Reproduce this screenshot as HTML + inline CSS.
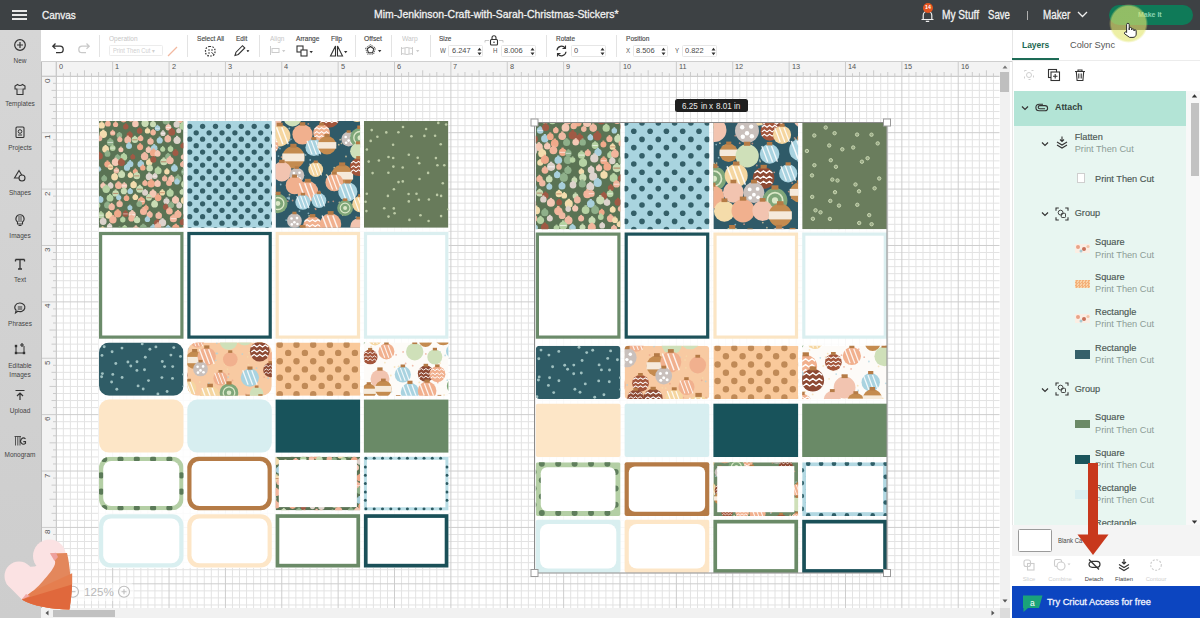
<!DOCTYPE html>
<html><head><meta charset="utf-8">
<style>
*{margin:0;padding:0;box-sizing:border-box}
html,body{width:1200px;height:618px;overflow:hidden;background:#fff;font-family:"Liberation Sans",sans-serif}
.a{position:absolute}
.t{white-space:nowrap;line-height:1}
svg{overflow:visible}
</style></head><body>
<svg class="a" style="left:0;top:0" width="1200" height="618" viewBox="0 0 1200 618"><path d="M63.35 76.3V608.2M70.39 76.3V608.2M77.44 76.3V608.2M84.48 76.3V608.2M91.53 76.3V608.2M98.58 76.3V608.2M105.62 76.3V608.2M119.72 76.3V608.2M126.76 76.3V608.2M133.81 76.3V608.2M140.85 76.3V608.2M147.90 76.3V608.2M154.95 76.3V608.2M161.99 76.3V608.2M176.09 76.3V608.2M183.13 76.3V608.2M190.18 76.3V608.2M197.22 76.3V608.2M204.27 76.3V608.2M211.32 76.3V608.2M218.36 76.3V608.2M232.46 76.3V608.2M239.50 76.3V608.2M246.55 76.3V608.2M253.59 76.3V608.2M260.64 76.3V608.2M267.69 76.3V608.2M274.73 76.3V608.2M288.83 76.3V608.2M295.87 76.3V608.2M302.92 76.3V608.2M309.96 76.3V608.2M317.01 76.3V608.2M324.06 76.3V608.2M331.10 76.3V608.2M345.20 76.3V608.2M352.24 76.3V608.2M359.29 76.3V608.2M366.33 76.3V608.2M373.38 76.3V608.2M380.43 76.3V608.2M387.47 76.3V608.2M401.57 76.3V608.2M408.61 76.3V608.2M415.66 76.3V608.2M422.70 76.3V608.2M429.75 76.3V608.2M436.80 76.3V608.2M443.84 76.3V608.2M457.94 76.3V608.2M464.98 76.3V608.2M472.03 76.3V608.2M479.07 76.3V608.2M486.12 76.3V608.2M493.17 76.3V608.2M500.21 76.3V608.2M514.31 76.3V608.2M521.35 76.3V608.2M528.40 76.3V608.2M535.44 76.3V608.2M542.49 76.3V608.2M549.54 76.3V608.2M556.58 76.3V608.2M570.68 76.3V608.2M577.72 76.3V608.2M584.77 76.3V608.2M591.81 76.3V608.2M598.86 76.3V608.2M605.91 76.3V608.2M612.95 76.3V608.2M627.05 76.3V608.2M634.09 76.3V608.2M641.14 76.3V608.2M648.18 76.3V608.2M655.23 76.3V608.2M662.28 76.3V608.2M669.32 76.3V608.2M683.42 76.3V608.2M690.46 76.3V608.2M697.51 76.3V608.2M704.55 76.3V608.2M711.60 76.3V608.2M718.65 76.3V608.2M725.69 76.3V608.2M739.79 76.3V608.2M746.83 76.3V608.2M753.88 76.3V608.2M760.92 76.3V608.2M767.97 76.3V608.2M775.02 76.3V608.2M782.06 76.3V608.2M796.16 76.3V608.2M803.20 76.3V608.2M810.25 76.3V608.2M817.29 76.3V608.2M824.34 76.3V608.2M831.39 76.3V608.2M838.43 76.3V608.2M852.53 76.3V608.2M859.57 76.3V608.2M866.62 76.3V608.2M873.66 76.3V608.2M880.71 76.3V608.2M887.76 76.3V608.2M894.80 76.3V608.2M908.90 76.3V608.2M915.94 76.3V608.2M922.99 76.3V608.2M930.03 76.3V608.2M937.08 76.3V608.2M944.13 76.3V608.2M951.17 76.3V608.2M965.27 76.3V608.2M972.31 76.3V608.2M979.36 76.3V608.2M986.40 76.3V608.2M993.45 76.3V608.2M56.3 83.35H999.5M56.3 90.40H999.5M56.3 97.45H999.5M56.3 104.50H999.5M56.3 111.54H999.5M56.3 118.59H999.5M56.3 125.64H999.5M56.3 139.74H999.5M56.3 146.79H999.5M56.3 153.84H999.5M56.3 160.88H999.5M56.3 167.93H999.5M56.3 174.98H999.5M56.3 182.03H999.5M56.3 196.13H999.5M56.3 203.18H999.5M56.3 210.23H999.5M56.3 217.27H999.5M56.3 224.32H999.5M56.3 231.37H999.5M56.3 238.42H999.5M56.3 252.52H999.5M56.3 259.57H999.5M56.3 266.62H999.5M56.3 273.67H999.5M56.3 280.71H999.5M56.3 287.76H999.5M56.3 294.81H999.5M56.3 308.91H999.5M56.3 315.96H999.5M56.3 323.01H999.5M56.3 330.06H999.5M56.3 337.10H999.5M56.3 344.15H999.5M56.3 351.20H999.5M56.3 365.30H999.5M56.3 372.35H999.5M56.3 379.40H999.5M56.3 386.44H999.5M56.3 393.49H999.5M56.3 400.54H999.5M56.3 407.59H999.5M56.3 421.69H999.5M56.3 428.74H999.5M56.3 435.79H999.5M56.3 442.84H999.5M56.3 449.88H999.5M56.3 456.93H999.5M56.3 463.98H999.5M56.3 478.08H999.5M56.3 485.13H999.5M56.3 492.18H999.5M56.3 499.23H999.5M56.3 506.27H999.5M56.3 513.32H999.5M56.3 520.37H999.5M56.3 534.47H999.5M56.3 541.52H999.5M56.3 548.57H999.5M56.3 555.62H999.5M56.3 562.66H999.5M56.3 569.71H999.5M56.3 576.76H999.5M56.3 590.86H999.5M56.3 597.91H999.5M56.3 604.96H999.5" stroke="#e3e3e3" stroke-width="1" fill="none"/><path d="M56.30 76.3V608.2M112.67 76.3V608.2M169.04 76.3V608.2M225.41 76.3V608.2M281.78 76.3V608.2M338.15 76.3V608.2M394.52 76.3V608.2M450.89 76.3V608.2M507.26 76.3V608.2M563.63 76.3V608.2M620.00 76.3V608.2M676.37 76.3V608.2M732.74 76.3V608.2M789.11 76.3V608.2M845.48 76.3V608.2M901.85 76.3V608.2M958.22 76.3V608.2M56.3 76.30H999.5M56.3 132.69H999.5M56.3 189.08H999.5M56.3 245.47H999.5M56.3 301.86H999.5M56.3 358.25H999.5M56.3 414.64H999.5M56.3 471.03H999.5M56.3 527.42H999.5M56.3 583.81H999.5" stroke="#cdcdcd" stroke-width="1" fill="none"/><rect x="98.5" y="120.5" width="350" height="447.5" fill="#fff" fill-opacity=".85"/><rect x="535.3" y="122.5" width="352" height="451" fill="#fff" fill-opacity=".85"/><clipPath id="c1"><rect x="99.0" y="121" width="84.5" height="106.8" rx="0"/></clipPath><g clip-path="url(#c1)"><rect x="99.0" y="121" width="84.5" height="106.8" fill="#5a7354"/><circle cx="96.2" cy="118.8" r="3.7" fill="#efb9a3"/><rect x="95.1" y="114.2" width="2.2" height="1.5" fill="#efb9a3"/><circle cx="106.7" cy="116.9" r="3.5" fill="#efb9a3"/><rect x="105.6" y="112.5" width="2.1" height="1.4" fill="#efb9a3"/><circle cx="114.8" cy="116.4" r="2.9" fill="#f4c8b5"/><rect x="113.9" y="112.9" width="1.7" height="1.1" fill="#f4c8b5"/><circle cx="123.6" cy="119.2" r="3.2" fill="#f2b59c"/><rect x="122.7" y="115.1" width="1.9" height="1.3" fill="#f2b59c"/><circle cx="130.9" cy="119.1" r="2.7" fill="#f2b59c"/><rect x="130.1" y="115.7" width="1.6" height="1.1" fill="#f2b59c"/><circle cx="136.3" cy="116.1" r="3.6" fill="#c9dcb4"/><rect x="135.2" y="111.6" width="2.2" height="1.4" fill="#c9dcb4"/><path d="M133.4 116.1h5.8" stroke="#a9573c" stroke-opacity=".8" fill="none" stroke-width="0.79"/><circle cx="146.7" cy="118.2" r="3.6" fill="#a05a45"/><rect x="145.6" y="113.7" width="2.1" height="1.4" fill="#a05a45"/><circle cx="154.2" cy="116.0" r="2.6" fill="#f0a98a"/><rect x="153.5" y="112.8" width="1.5" height="1.0" fill="#f0a98a"/><circle cx="166.2" cy="121.0" r="3.6" fill="#8fb08a"/><rect x="165.1" y="116.5" width="2.1" height="1.4" fill="#8fb08a"/><circle cx="173.4" cy="118.5" r="2.5" fill="#c9dcb4"/><rect x="172.6" y="115.4" width="1.5" height="1.0" fill="#c9dcb4"/><circle cx="180.0" cy="120.2" r="3.0" fill="#f2b59c"/><rect x="179.1" y="116.5" width="1.8" height="1.2" fill="#f2b59c"/><circle cx="186.4" cy="117.0" r="3.6" fill="#efb9a3"/><rect x="185.3" y="112.5" width="2.2" height="1.5" fill="#efb9a3"/><circle cx="101.7" cy="125.4" r="3.2" fill="#f3dcae"/><rect x="100.8" y="121.4" width="1.9" height="1.3" fill="#f3dcae"/><circle cx="107.9" cy="123.7" r="2.9" fill="#f2b59c"/><rect x="107.1" y="120.1" width="1.7" height="1.2" fill="#f2b59c"/><circle cx="115.6" cy="124.5" r="2.6" fill="#f2b59c"/><rect x="114.8" y="121.3" width="1.6" height="1.0" fill="#f2b59c"/><circle cx="125.8" cy="126.7" r="2.7" fill="#a05a45"/><rect x="125.0" y="123.3" width="1.6" height="1.1" fill="#a05a45"/><circle cx="135.4" cy="123.9" r="3.3" fill="#f4c8b5"/><rect x="134.5" y="119.8" width="2.0" height="1.3" fill="#f4c8b5"/><circle cx="145.1" cy="123.3" r="3.6" fill="#c9dcb4"/><rect x="144.1" y="118.8" width="2.2" height="1.4" fill="#c9dcb4"/><circle cx="153.0" cy="124.3" r="3.0" fill="#c9dcb4"/><rect x="152.1" y="120.6" width="1.8" height="1.2" fill="#c9dcb4"/><circle cx="157.5" cy="128.3" r="2.7" fill="#a8cfdb"/><rect x="156.6" y="124.8" width="1.6" height="1.1" fill="#a8cfdb"/><path d="M155.3 128.3h4.4" stroke="#fff" stroke-opacity=".8" fill="none" stroke-width="0.60"/><circle cx="168.4" cy="127.5" r="3.0" fill="#f4c8b5"/><rect x="167.5" y="123.7" width="1.8" height="1.2" fill="#f4c8b5"/><path d="M166.1 127.5h4.7" stroke="#fff" stroke-opacity=".8" fill="none" stroke-width="0.65"/><circle cx="176.7" cy="124.5" r="3.2" fill="#ddd3cc"/><rect x="175.7" y="120.4" width="1.9" height="1.3" fill="#ddd3cc"/><circle cx="182.8" cy="126.2" r="3.5" fill="#b5d2a3"/><rect x="181.7" y="121.8" width="2.1" height="1.4" fill="#b5d2a3"/><circle cx="94.9" cy="131.4" r="3.6" fill="#c9dcb4"/><rect x="93.8" y="126.8" width="2.2" height="1.5" fill="#c9dcb4"/><circle cx="103.3" cy="134.3" r="3.7" fill="#f3dcae"/><rect x="102.2" y="129.7" width="2.2" height="1.5" fill="#f3dcae"/><circle cx="112.7" cy="133.0" r="2.6" fill="#f2b59c"/><rect x="111.9" y="129.8" width="1.5" height="1.0" fill="#f2b59c"/><path d="M110.7 133.0h4.1" stroke="#fff" stroke-opacity=".8" fill="none" stroke-width="0.56"/><circle cx="119.4" cy="135.4" r="2.8" fill="#8fb08a"/><rect x="118.5" y="132.0" width="1.7" height="1.1" fill="#8fb08a"/><circle cx="129.7" cy="135.1" r="3.1" fill="#a05a45"/><rect x="128.8" y="131.3" width="1.9" height="1.2" fill="#a05a45"/><circle cx="139.6" cy="130.9" r="2.8" fill="#a05a45"/><rect x="138.8" y="127.5" width="1.7" height="1.1" fill="#a05a45"/><circle cx="147.5" cy="130.9" r="2.7" fill="#f3dcae"/><rect x="146.6" y="127.5" width="1.6" height="1.1" fill="#f3dcae"/><circle cx="153.1" cy="132.6" r="2.8" fill="#f2b59c"/><rect x="152.3" y="129.2" width="1.7" height="1.1" fill="#f2b59c"/><circle cx="163.0" cy="133.5" r="2.6" fill="#ddd3cc"/><rect x="162.2" y="130.2" width="1.6" height="1.1" fill="#ddd3cc"/><path d="M160.9 133.5h4.2" stroke="#fff" stroke-opacity=".8" fill="none" stroke-width="0.58"/><circle cx="171.8" cy="132.2" r="3.4" fill="#a05a45"/><rect x="170.8" y="128.0" width="2.1" height="1.4" fill="#a05a45"/><circle cx="178.7" cy="130.8" r="2.5" fill="#ddd3cc"/><rect x="177.9" y="127.7" width="1.5" height="1.0" fill="#ddd3cc"/><circle cx="191.2" cy="130.7" r="3.3" fill="#efb9a3"/><rect x="190.2" y="126.6" width="2.0" height="1.3" fill="#efb9a3"/><path d="M188.6 130.7h5.3" stroke="#fff" stroke-opacity=".8" fill="none" stroke-width="0.72"/><circle cx="99.7" cy="138.6" r="2.6" fill="#efb9a3"/><rect x="99.0" y="135.4" width="1.5" height="1.0" fill="#efb9a3"/><circle cx="110.3" cy="142.4" r="3.4" fill="#8fb08a"/><rect x="109.2" y="138.1" width="2.1" height="1.4" fill="#8fb08a"/><path d="M107.5 142.4h5.5" stroke="#fff" stroke-opacity=".8" fill="none" stroke-width="0.75"/><circle cx="119.8" cy="139.6" r="2.6" fill="#efb9a3"/><rect x="119.0" y="136.4" width="1.5" height="1.0" fill="#efb9a3"/><circle cx="127.8" cy="140.0" r="3.5" fill="#efb9a3"/><rect x="126.7" y="135.6" width="2.1" height="1.4" fill="#efb9a3"/><circle cx="134.9" cy="139.8" r="3.2" fill="#c9dcb4"/><rect x="133.9" y="135.8" width="1.9" height="1.3" fill="#c9dcb4"/><path d="M132.3 139.8h5.2" stroke="#a9573c" stroke-opacity=".8" fill="none" stroke-width="0.71"/><circle cx="140.6" cy="138.5" r="2.8" fill="#f2b59c"/><rect x="139.8" y="135.0" width="1.7" height="1.1" fill="#f2b59c"/><circle cx="150.5" cy="141.6" r="3.2" fill="#efb9a3"/><rect x="149.6" y="137.6" width="1.9" height="1.3" fill="#efb9a3"/><circle cx="159.7" cy="140.5" r="3.1" fill="#a8cfdb"/><rect x="158.7" y="136.6" width="1.9" height="1.3" fill="#a8cfdb"/><circle cx="167.8" cy="139.0" r="3.4" fill="#efb9a3"/><rect x="166.8" y="134.8" width="2.0" height="1.3" fill="#efb9a3"/><circle cx="177.1" cy="140.3" r="3.6" fill="#ddd3cc"/><rect x="176.0" y="135.8" width="2.2" height="1.5" fill="#ddd3cc"/><circle cx="185.6" cy="138.9" r="2.7" fill="#ddd3cc"/><rect x="184.8" y="135.6" width="1.6" height="1.1" fill="#ddd3cc"/><circle cx="96.2" cy="149.7" r="2.9" fill="#f0a98a"/><rect x="95.3" y="146.1" width="1.7" height="1.2" fill="#f0a98a"/><circle cx="105.6" cy="149.2" r="3.4" fill="#f3dcae"/><rect x="104.5" y="144.9" width="2.1" height="1.4" fill="#f3dcae"/><circle cx="112.7" cy="148.1" r="2.9" fill="#b5d2a3"/><rect x="111.8" y="144.5" width="1.7" height="1.1" fill="#b5d2a3"/><path d="M110.4 148.1h4.6" stroke="#fff" stroke-opacity=".8" fill="none" stroke-width="0.63"/><circle cx="120.9" cy="149.7" r="2.5" fill="#f4c8b5"/><rect x="120.2" y="146.6" width="1.5" height="1.0" fill="#f4c8b5"/><circle cx="129.0" cy="146.0" r="3.0" fill="#a8cfdb"/><rect x="128.0" y="142.2" width="1.8" height="1.2" fill="#a8cfdb"/><circle cx="140.1" cy="147.1" r="3.1" fill="#f0a98a"/><rect x="139.2" y="143.2" width="1.9" height="1.3" fill="#f0a98a"/><circle cx="148.6" cy="150.1" r="3.0" fill="#f4c8b5"/><rect x="147.7" y="146.3" width="1.8" height="1.2" fill="#f4c8b5"/><circle cx="154.2" cy="148.3" r="3.3" fill="#a8cfdb"/><rect x="153.2" y="144.1" width="2.0" height="1.3" fill="#a8cfdb"/><circle cx="162.7" cy="149.2" r="2.5" fill="#b5d2a3"/><rect x="162.0" y="146.1" width="1.5" height="1.0" fill="#b5d2a3"/><circle cx="170.5" cy="149.1" r="2.8" fill="#b5d2a3"/><rect x="169.7" y="145.6" width="1.7" height="1.1" fill="#b5d2a3"/><circle cx="182.9" cy="145.8" r="2.6" fill="#a05a45"/><rect x="182.1" y="142.5" width="1.6" height="1.0" fill="#a05a45"/><circle cx="190.4" cy="150.0" r="3.4" fill="#f3dcae"/><rect x="189.4" y="145.8" width="2.0" height="1.3" fill="#f3dcae"/><circle cx="99.5" cy="156.1" r="3.4" fill="#a05a45"/><rect x="98.4" y="151.8" width="2.1" height="1.4" fill="#a05a45"/><circle cx="107.5" cy="153.9" r="2.9" fill="#8fb08a"/><rect x="106.6" y="150.2" width="1.7" height="1.2" fill="#8fb08a"/><circle cx="117.5" cy="157.5" r="2.7" fill="#8fb08a"/><rect x="116.7" y="154.2" width="1.6" height="1.1" fill="#8fb08a"/><circle cx="123.8" cy="157.2" r="3.4" fill="#b5d2a3"/><rect x="122.8" y="152.9" width="2.0" height="1.4" fill="#b5d2a3"/><circle cx="132.8" cy="157.0" r="2.5" fill="#a05a45"/><rect x="132.0" y="153.9" width="1.5" height="1.0" fill="#a05a45"/><circle cx="144.6" cy="156.5" r="3.7" fill="#efb9a3"/><rect x="143.5" y="151.9" width="2.2" height="1.5" fill="#efb9a3"/><circle cx="153.5" cy="153.0" r="3.6" fill="#f0a98a"/><rect x="152.4" y="148.5" width="2.2" height="1.4" fill="#f0a98a"/><circle cx="157.6" cy="153.7" r="3.0" fill="#f4c8b5"/><rect x="156.7" y="150.0" width="1.8" height="1.2" fill="#f4c8b5"/><circle cx="168.1" cy="156.5" r="2.9" fill="#8fb08a"/><rect x="167.2" y="152.9" width="1.7" height="1.2" fill="#8fb08a"/><circle cx="175.5" cy="152.9" r="3.0" fill="#a05a45"/><rect x="174.6" y="149.1" width="1.8" height="1.2" fill="#a05a45"/><circle cx="183.5" cy="157.1" r="2.7" fill="#f4c8b5"/><rect x="182.7" y="153.7" width="1.6" height="1.1" fill="#f4c8b5"/><circle cx="94.1" cy="162.5" r="3.4" fill="#b5d2a3"/><rect x="93.1" y="158.3" width="2.0" height="1.3" fill="#b5d2a3"/><circle cx="107.4" cy="164.3" r="3.1" fill="#f0a98a"/><rect x="106.5" y="160.4" width="1.9" height="1.3" fill="#f0a98a"/><circle cx="115.5" cy="162.3" r="3.7" fill="#f4c8b5"/><rect x="114.4" y="157.7" width="2.2" height="1.5" fill="#f4c8b5"/><circle cx="121.4" cy="162.6" r="3.5" fill="#a05a45"/><rect x="120.3" y="158.2" width="2.1" height="1.4" fill="#a05a45"/><circle cx="130.2" cy="164.1" r="3.2" fill="#a8cfdb"/><rect x="129.2" y="160.1" width="1.9" height="1.3" fill="#a8cfdb"/><circle cx="140.8" cy="164.2" r="3.3" fill="#a8cfdb"/><rect x="139.8" y="160.1" width="2.0" height="1.3" fill="#a8cfdb"/><circle cx="149.2" cy="162.5" r="3.2" fill="#f3dcae"/><rect x="148.3" y="158.4" width="1.9" height="1.3" fill="#f3dcae"/><circle cx="153.3" cy="159.8" r="3.0" fill="#a05a45"/><rect x="152.5" y="156.1" width="1.8" height="1.2" fill="#a05a45"/><circle cx="163.8" cy="161.8" r="3.5" fill="#c9dcb4"/><rect x="162.7" y="157.4" width="2.1" height="1.4" fill="#c9dcb4"/><path d="M161.0 161.8h5.6" stroke="#a9573c" stroke-opacity=".8" fill="none" stroke-width="0.77"/><circle cx="170.0" cy="160.6" r="3.7" fill="#efb9a3"/><rect x="168.9" y="156.1" width="2.2" height="1.5" fill="#efb9a3"/><circle cx="182.8" cy="164.5" r="2.8" fill="#efb9a3"/><rect x="181.9" y="160.9" width="1.7" height="1.1" fill="#efb9a3"/><circle cx="188.1" cy="164.3" r="3.7" fill="#efb9a3"/><rect x="187.0" y="159.7" width="2.2" height="1.5" fill="#efb9a3"/><circle cx="98.7" cy="169.2" r="2.5" fill="#a8cfdb"/><rect x="98.0" y="166.1" width="1.5" height="1.0" fill="#a8cfdb"/><path d="M96.7 169.2h4.0" stroke="#fff" stroke-opacity=".8" fill="none" stroke-width="0.55"/><circle cx="110.5" cy="167.2" r="2.7" fill="#f3dcae"/><rect x="109.7" y="163.8" width="1.6" height="1.1" fill="#f3dcae"/><path d="M108.3 167.2h4.3" stroke="#a9573c" stroke-opacity=".8" fill="none" stroke-width="0.60"/><circle cx="116.4" cy="170.8" r="2.8" fill="#efb9a3"/><rect x="115.6" y="167.3" width="1.7" height="1.1" fill="#efb9a3"/><path d="M114.2 170.8h4.4" stroke="#fff" stroke-opacity=".8" fill="none" stroke-width="0.61"/><circle cx="127.0" cy="167.7" r="3.1" fill="#a8cfdb"/><rect x="126.1" y="163.8" width="1.9" height="1.3" fill="#a8cfdb"/><circle cx="135.3" cy="171.5" r="2.5" fill="#f0a98a"/><rect x="134.5" y="168.4" width="1.5" height="1.0" fill="#f0a98a"/><circle cx="142.8" cy="167.9" r="2.7" fill="#f0a98a"/><rect x="142.0" y="164.5" width="1.6" height="1.1" fill="#f0a98a"/><circle cx="149.7" cy="168.2" r="3.2" fill="#c9dcb4"/><rect x="148.7" y="164.2" width="1.9" height="1.3" fill="#c9dcb4"/><circle cx="158.1" cy="170.8" r="3.5" fill="#b5d2a3"/><rect x="157.1" y="166.5" width="2.1" height="1.4" fill="#b5d2a3"/><circle cx="166.9" cy="171.8" r="2.7" fill="#f3dcae"/><rect x="166.1" y="168.3" width="1.6" height="1.1" fill="#f3dcae"/><circle cx="174.4" cy="168.3" r="3.4" fill="#a8cfdb"/><rect x="173.4" y="164.1" width="2.0" height="1.4" fill="#a8cfdb"/><circle cx="184.4" cy="171.9" r="3.2" fill="#8fb08a"/><rect x="183.4" y="167.9" width="1.9" height="1.3" fill="#8fb08a"/><path d="M181.8 171.9h5.1" stroke="#fff" stroke-opacity=".8" fill="none" stroke-width="0.70"/><circle cx="96.0" cy="177.9" r="2.5" fill="#f3dcae"/><rect x="95.2" y="174.8" width="1.5" height="1.0" fill="#f3dcae"/><circle cx="104.2" cy="178.6" r="2.9" fill="#8fb08a"/><rect x="103.3" y="174.9" width="1.8" height="1.2" fill="#8fb08a"/><circle cx="114.6" cy="177.0" r="3.4" fill="#f3dcae"/><rect x="113.6" y="172.8" width="2.0" height="1.3" fill="#f3dcae"/><circle cx="121.6" cy="174.5" r="3.5" fill="#c9dcb4"/><rect x="120.6" y="170.2" width="2.1" height="1.4" fill="#c9dcb4"/><circle cx="130.4" cy="175.2" r="2.7" fill="#f3dcae"/><rect x="129.6" y="171.8" width="1.6" height="1.1" fill="#f3dcae"/><circle cx="136.8" cy="175.9" r="3.3" fill="#c9dcb4"/><rect x="135.8" y="171.7" width="2.0" height="1.3" fill="#c9dcb4"/><path d="M134.1 175.9h5.3" stroke="#a9573c" stroke-opacity=".8" fill="none" stroke-width="0.73"/><circle cx="149.2" cy="176.8" r="3.5" fill="#ddd3cc"/><rect x="148.1" y="172.4" width="2.1" height="1.4" fill="#ddd3cc"/><circle cx="154.9" cy="176.2" r="2.7" fill="#ddd3cc"/><rect x="154.1" y="172.8" width="1.6" height="1.1" fill="#ddd3cc"/><path d="M152.7 176.2h4.4" stroke="#fff" stroke-opacity=".8" fill="none" stroke-width="0.60"/><circle cx="164.7" cy="178.7" r="2.7" fill="#efb9a3"/><rect x="163.9" y="175.3" width="1.6" height="1.1" fill="#efb9a3"/><circle cx="171.4" cy="179.1" r="3.2" fill="#f4c8b5"/><rect x="170.5" y="175.0" width="1.9" height="1.3" fill="#f4c8b5"/><circle cx="178.0" cy="178.9" r="3.5" fill="#8fb08a"/><rect x="177.0" y="174.5" width="2.1" height="1.4" fill="#8fb08a"/><circle cx="190.9" cy="179.2" r="3.2" fill="#f3dcae"/><rect x="190.0" y="175.2" width="1.9" height="1.3" fill="#f3dcae"/><circle cx="103.1" cy="185.8" r="2.8" fill="#f4c8b5"/><rect x="102.3" y="182.3" width="1.7" height="1.1" fill="#f4c8b5"/><circle cx="110.5" cy="185.8" r="3.0" fill="#ddd3cc"/><rect x="109.6" y="182.1" width="1.8" height="1.2" fill="#ddd3cc"/><circle cx="118.5" cy="185.6" r="3.5" fill="#f2b59c"/><rect x="117.4" y="181.3" width="2.1" height="1.4" fill="#f2b59c"/><circle cx="124.3" cy="185.8" r="2.9" fill="#f4c8b5"/><rect x="123.4" y="182.2" width="1.7" height="1.1" fill="#f4c8b5"/><path d="M122.0 185.8h4.6" stroke="#fff" stroke-opacity=".8" fill="none" stroke-width="0.63"/><circle cx="133.6" cy="185.0" r="3.3" fill="#f3dcae"/><rect x="132.6" y="180.9" width="2.0" height="1.3" fill="#f3dcae"/><circle cx="145.0" cy="183.2" r="2.7" fill="#f2b59c"/><rect x="144.2" y="179.8" width="1.6" height="1.1" fill="#f2b59c"/><circle cx="151.2" cy="183.7" r="3.8" fill="#f0a98a"/><rect x="150.1" y="179.0" width="2.3" height="1.5" fill="#f0a98a"/><circle cx="157.6" cy="183.7" r="3.2" fill="#f4c8b5"/><rect x="156.6" y="179.7" width="1.9" height="1.3" fill="#f4c8b5"/><circle cx="169.1" cy="183.0" r="3.0" fill="#f2b59c"/><rect x="168.2" y="179.3" width="1.8" height="1.2" fill="#f2b59c"/><circle cx="177.0" cy="181.8" r="2.8" fill="#a8cfdb"/><rect x="176.2" y="178.3" width="1.7" height="1.1" fill="#a8cfdb"/><circle cx="184.9" cy="184.3" r="3.7" fill="#c9dcb4"/><rect x="183.8" y="179.6" width="2.2" height="1.5" fill="#c9dcb4"/><circle cx="94.5" cy="191.3" r="3.3" fill="#a05a45"/><rect x="93.5" y="187.2" width="2.0" height="1.3" fill="#a05a45"/><circle cx="106.2" cy="189.3" r="3.7" fill="#b5d2a3"/><rect x="105.1" y="184.7" width="2.2" height="1.5" fill="#b5d2a3"/><circle cx="115.6" cy="193.4" r="3.2" fill="#c9dcb4"/><rect x="114.7" y="189.4" width="1.9" height="1.3" fill="#c9dcb4"/><path d="M113.1 193.4h5.1" stroke="#a9573c" stroke-opacity=".8" fill="none" stroke-width="0.70"/><circle cx="123.9" cy="191.2" r="3.1" fill="#c9dcb4"/><rect x="123.0" y="187.2" width="1.9" height="1.3" fill="#c9dcb4"/><circle cx="130.2" cy="191.5" r="2.8" fill="#a8cfdb"/><rect x="129.4" y="188.0" width="1.7" height="1.1" fill="#a8cfdb"/><circle cx="139.7" cy="189.2" r="3.5" fill="#c9dcb4"/><rect x="138.7" y="184.8" width="2.1" height="1.4" fill="#c9dcb4"/><path d="M137.0 189.2h5.6" stroke="#a9573c" stroke-opacity=".8" fill="none" stroke-width="0.76"/><circle cx="145.1" cy="192.8" r="3.0" fill="#ddd3cc"/><rect x="144.3" y="189.1" width="1.8" height="1.2" fill="#ddd3cc"/><circle cx="153.0" cy="194.0" r="3.7" fill="#f4c8b5"/><rect x="151.9" y="189.4" width="2.2" height="1.5" fill="#f4c8b5"/><circle cx="162.3" cy="192.7" r="2.8" fill="#f3dcae"/><rect x="161.5" y="189.2" width="1.7" height="1.1" fill="#f3dcae"/><path d="M160.1 192.7h4.5" stroke="#a9573c" stroke-opacity=".8" fill="none" stroke-width="0.61"/><circle cx="170.1" cy="193.1" r="3.6" fill="#b5d2a3"/><rect x="169.0" y="188.6" width="2.2" height="1.5" fill="#b5d2a3"/><circle cx="182.1" cy="192.1" r="2.6" fill="#c9dcb4"/><rect x="181.3" y="188.8" width="1.6" height="1.0" fill="#c9dcb4"/><circle cx="187.0" cy="193.4" r="2.9" fill="#b5d2a3"/><rect x="186.1" y="189.7" width="1.8" height="1.2" fill="#b5d2a3"/><path d="M184.6 193.4h4.7" stroke="#fff" stroke-opacity=".8" fill="none" stroke-width="0.64"/><circle cx="100.4" cy="199.7" r="3.1" fill="#a8cfdb"/><rect x="99.5" y="195.9" width="1.8" height="1.2" fill="#a8cfdb"/><circle cx="110.0" cy="198.2" r="3.4" fill="#b5d2a3"/><rect x="109.0" y="193.9" width="2.1" height="1.4" fill="#b5d2a3"/><circle cx="118.7" cy="197.5" r="2.6" fill="#a8cfdb"/><rect x="117.9" y="194.3" width="1.6" height="1.0" fill="#a8cfdb"/><circle cx="126.5" cy="198.2" r="2.8" fill="#f0a98a"/><rect x="125.7" y="194.6" width="1.7" height="1.1" fill="#f0a98a"/><circle cx="135.3" cy="197.3" r="2.8" fill="#f3dcae"/><rect x="134.4" y="193.8" width="1.7" height="1.1" fill="#f3dcae"/><circle cx="141.4" cy="201.3" r="3.7" fill="#f0a98a"/><rect x="140.3" y="196.7" width="2.2" height="1.5" fill="#f0a98a"/><path d="M138.5 201.3h5.9" stroke="#fff" stroke-opacity=".8" fill="none" stroke-width="0.80"/><circle cx="148.9" cy="197.7" r="3.0" fill="#c9dcb4"/><rect x="148.0" y="193.9" width="1.8" height="1.2" fill="#c9dcb4"/><path d="M146.5 197.7h4.8" stroke="#a9573c" stroke-opacity=".8" fill="none" stroke-width="0.66"/><circle cx="158.1" cy="197.8" r="3.4" fill="#f0a98a"/><rect x="157.0" y="193.4" width="2.1" height="1.4" fill="#f0a98a"/><circle cx="166.5" cy="201.3" r="3.1" fill="#ddd3cc"/><rect x="165.6" y="197.4" width="1.9" height="1.2" fill="#ddd3cc"/><circle cx="175.5" cy="200.1" r="3.6" fill="#f4c8b5"/><rect x="174.4" y="195.7" width="2.1" height="1.4" fill="#f4c8b5"/><circle cx="184.4" cy="200.5" r="3.6" fill="#f3dcae"/><rect x="183.3" y="196.0" width="2.1" height="1.4" fill="#f3dcae"/><circle cx="97.7" cy="205.6" r="2.7" fill="#b5d2a3"/><rect x="96.9" y="202.3" width="1.6" height="1.1" fill="#b5d2a3"/><circle cx="107.3" cy="205.3" r="3.2" fill="#8fb08a"/><rect x="106.4" y="201.3" width="1.9" height="1.3" fill="#8fb08a"/><circle cx="111.7" cy="207.0" r="3.2" fill="#efb9a3"/><rect x="110.7" y="202.9" width="1.9" height="1.3" fill="#efb9a3"/><circle cx="119.6" cy="204.1" r="3.2" fill="#efb9a3"/><rect x="118.6" y="200.1" width="1.9" height="1.3" fill="#efb9a3"/><circle cx="129.9" cy="207.8" r="2.5" fill="#a8cfdb"/><rect x="129.2" y="204.7" width="1.5" height="1.0" fill="#a8cfdb"/><circle cx="139.3" cy="204.1" r="2.9" fill="#8fb08a"/><rect x="138.4" y="200.5" width="1.7" height="1.1" fill="#8fb08a"/><circle cx="146.0" cy="208.1" r="2.7" fill="#f0a98a"/><rect x="145.2" y="204.7" width="1.6" height="1.1" fill="#f0a98a"/><circle cx="154.6" cy="204.2" r="3.4" fill="#c9dcb4"/><rect x="153.6" y="200.0" width="2.0" height="1.4" fill="#c9dcb4"/><circle cx="165.7" cy="207.1" r="2.8" fill="#a05a45"/><rect x="164.9" y="203.6" width="1.7" height="1.1" fill="#a05a45"/><circle cx="171.1" cy="205.3" r="3.0" fill="#8fb08a"/><rect x="170.2" y="201.5" width="1.8" height="1.2" fill="#8fb08a"/><circle cx="179.2" cy="205.5" r="2.9" fill="#ddd3cc"/><rect x="178.3" y="201.8" width="1.8" height="1.2" fill="#ddd3cc"/><circle cx="189.3" cy="207.7" r="3.4" fill="#ddd3cc"/><rect x="188.3" y="203.4" width="2.1" height="1.4" fill="#ddd3cc"/><circle cx="100.9" cy="215.2" r="3.2" fill="#b5d2a3"/><rect x="99.9" y="211.2" width="1.9" height="1.3" fill="#b5d2a3"/><path d="M98.3 215.2h5.1" stroke="#fff" stroke-opacity=".8" fill="none" stroke-width="0.70"/><circle cx="108.9" cy="215.3" r="3.5" fill="#f3dcae"/><rect x="107.8" y="210.9" width="2.1" height="1.4" fill="#f3dcae"/><circle cx="117.7" cy="213.8" r="3.7" fill="#f0a98a"/><rect x="116.6" y="209.2" width="2.2" height="1.5" fill="#f0a98a"/><circle cx="125.5" cy="213.9" r="2.9" fill="#a05a45"/><rect x="124.6" y="210.3" width="1.7" height="1.1" fill="#a05a45"/><path d="M123.2 213.9h4.6" stroke="#fff" stroke-opacity=".8" fill="none" stroke-width="0.63"/><circle cx="132.2" cy="214.7" r="3.6" fill="#f4c8b5"/><rect x="131.1" y="210.1" width="2.2" height="1.5" fill="#f4c8b5"/><path d="M129.3 214.7h5.8" stroke="#fff" stroke-opacity=".8" fill="none" stroke-width="0.80"/><circle cx="143.5" cy="211.5" r="3.5" fill="#f2b59c"/><rect x="142.4" y="207.0" width="2.1" height="1.4" fill="#f2b59c"/><circle cx="149.7" cy="214.8" r="3.1" fill="#efb9a3"/><rect x="148.7" y="210.9" width="1.9" height="1.3" fill="#efb9a3"/><circle cx="158.7" cy="215.8" r="3.3" fill="#efb9a3"/><rect x="157.7" y="211.7" width="2.0" height="1.3" fill="#efb9a3"/><circle cx="169.4" cy="211.3" r="3.3" fill="#f2b59c"/><rect x="168.4" y="207.2" width="2.0" height="1.3" fill="#f2b59c"/><circle cx="177.9" cy="214.3" r="3.6" fill="#f2b59c"/><rect x="176.9" y="209.9" width="2.1" height="1.4" fill="#f2b59c"/><circle cx="186.6" cy="215.8" r="3.3" fill="#a05a45"/><rect x="185.6" y="211.7" width="2.0" height="1.3" fill="#a05a45"/><circle cx="94.0" cy="218.8" r="3.7" fill="#b5d2a3"/><rect x="92.9" y="214.2" width="2.2" height="1.5" fill="#b5d2a3"/><circle cx="103.2" cy="221.5" r="3.4" fill="#ddd3cc"/><rect x="102.2" y="217.3" width="2.0" height="1.3" fill="#ddd3cc"/><circle cx="112.9" cy="219.7" r="3.7" fill="#f2b59c"/><rect x="111.8" y="215.1" width="2.2" height="1.5" fill="#f2b59c"/><circle cx="122.8" cy="219.8" r="2.7" fill="#b5d2a3"/><rect x="122.0" y="216.5" width="1.6" height="1.1" fill="#b5d2a3"/><circle cx="131.4" cy="218.4" r="3.1" fill="#f2b59c"/><rect x="130.4" y="214.5" width="1.9" height="1.2" fill="#f2b59c"/><circle cx="137.0" cy="220.1" r="3.2" fill="#c9dcb4"/><rect x="136.0" y="216.0" width="1.9" height="1.3" fill="#c9dcb4"/><circle cx="147.4" cy="219.4" r="2.7" fill="#a8cfdb"/><rect x="146.5" y="216.0" width="1.6" height="1.1" fill="#a8cfdb"/><circle cx="157.3" cy="223.0" r="3.3" fill="#a05a45"/><rect x="156.4" y="218.9" width="2.0" height="1.3" fill="#a05a45"/><circle cx="162.5" cy="222.7" r="3.7" fill="#ddd3cc"/><rect x="161.4" y="218.2" width="2.2" height="1.5" fill="#ddd3cc"/><circle cx="173.4" cy="218.7" r="3.6" fill="#f2b59c"/><rect x="172.4" y="214.3" width="2.2" height="1.4" fill="#f2b59c"/><path d="M170.6 218.7h5.7" stroke="#fff" stroke-opacity=".8" fill="none" stroke-width="0.79"/><circle cx="182.7" cy="222.3" r="3.0" fill="#a05a45"/><rect x="181.8" y="218.6" width="1.8" height="1.2" fill="#a05a45"/><circle cx="190.3" cy="222.2" r="2.5" fill="#f3dcae"/><rect x="189.5" y="219.1" width="1.5" height="1.0" fill="#f3dcae"/><circle cx="102.6" cy="230.1" r="3.0" fill="#f3dcae"/><rect x="101.7" y="226.3" width="1.8" height="1.2" fill="#f3dcae"/><circle cx="109.6" cy="226.4" r="2.7" fill="#ddd3cc"/><rect x="108.8" y="223.0" width="1.6" height="1.1" fill="#ddd3cc"/><path d="M107.5 226.4h4.3" stroke="#fff" stroke-opacity=".8" fill="none" stroke-width="0.59"/><circle cx="119.5" cy="229.7" r="2.6" fill="#8fb08a"/><rect x="118.7" y="226.4" width="1.6" height="1.1" fill="#8fb08a"/><circle cx="124.7" cy="228.3" r="2.7" fill="#b5d2a3"/><rect x="123.9" y="225.0" width="1.6" height="1.1" fill="#b5d2a3"/><path d="M122.6 228.3h4.2" stroke="#fff" stroke-opacity=".8" fill="none" stroke-width="0.58"/><circle cx="135.9" cy="229.8" r="3.5" fill="#f4c8b5"/><rect x="134.8" y="225.4" width="2.1" height="1.4" fill="#f4c8b5"/><circle cx="143.3" cy="228.2" r="3.6" fill="#8fb08a"/><rect x="142.2" y="223.7" width="2.2" height="1.4" fill="#8fb08a"/><circle cx="153.4" cy="228.5" r="3.6" fill="#a8cfdb"/><rect x="152.3" y="224.1" width="2.1" height="1.4" fill="#a8cfdb"/><path d="M150.5 228.5h5.7" stroke="#fff" stroke-opacity=".8" fill="none" stroke-width="0.79"/><circle cx="157.9" cy="226.6" r="3.4" fill="#efb9a3"/><rect x="156.9" y="222.4" width="2.0" height="1.3" fill="#efb9a3"/><circle cx="168.1" cy="228.2" r="2.7" fill="#a8cfdb"/><rect x="167.3" y="224.9" width="1.6" height="1.1" fill="#a8cfdb"/><circle cx="175.8" cy="228.4" r="3.8" fill="#f0a98a"/><rect x="174.7" y="223.7" width="2.3" height="1.5" fill="#f0a98a"/><circle cx="184.0" cy="229.0" r="2.6" fill="#f2b59c"/><rect x="183.2" y="225.8" width="1.6" height="1.0" fill="#f2b59c"/><circle cx="97.7" cy="236.8" r="2.6" fill="#efb9a3"/><rect x="96.9" y="233.6" width="1.6" height="1.0" fill="#efb9a3"/><path d="M95.6 236.8h4.2" stroke="#fff" stroke-opacity=".8" fill="none" stroke-width="0.58"/><circle cx="104.3" cy="236.5" r="2.8" fill="#c9dcb4"/><rect x="103.4" y="233.0" width="1.7" height="1.1" fill="#c9dcb4"/><path d="M102.0 236.5h4.4" stroke="#a9573c" stroke-opacity=".8" fill="none" stroke-width="0.61"/><circle cx="114.6" cy="237.2" r="3.6" fill="#8fb08a"/><rect x="113.6" y="232.7" width="2.1" height="1.4" fill="#8fb08a"/><circle cx="122.3" cy="234.4" r="2.9" fill="#a05a45"/><rect x="121.4" y="230.7" width="1.8" height="1.2" fill="#a05a45"/><circle cx="132.4" cy="236.7" r="3.2" fill="#f4c8b5"/><rect x="131.4" y="232.7" width="1.9" height="1.3" fill="#f4c8b5"/><circle cx="137.0" cy="236.6" r="2.9" fill="#a8cfdb"/><rect x="136.1" y="233.0" width="1.7" height="1.2" fill="#a8cfdb"/><circle cx="148.0" cy="234.6" r="3.5" fill="#f4c8b5"/><rect x="146.9" y="230.1" width="2.1" height="1.4" fill="#f4c8b5"/><path d="M145.2 234.6h5.7" stroke="#fff" stroke-opacity=".8" fill="none" stroke-width="0.78"/><circle cx="155.9" cy="233.6" r="3.3" fill="#b5d2a3"/><rect x="154.9" y="229.4" width="2.0" height="1.3" fill="#b5d2a3"/><circle cx="163.2" cy="237.1" r="3.2" fill="#f4c8b5"/><rect x="162.2" y="233.1" width="1.9" height="1.3" fill="#f4c8b5"/><path d="M160.6 237.1h5.2" stroke="#fff" stroke-opacity=".8" fill="none" stroke-width="0.71"/><circle cx="169.7" cy="237.9" r="3.0" fill="#f4c8b5"/><rect x="168.8" y="234.1" width="1.8" height="1.2" fill="#f4c8b5"/><circle cx="182.1" cy="237.6" r="2.6" fill="#f3dcae"/><rect x="181.3" y="234.3" width="1.6" height="1.1" fill="#f3dcae"/><circle cx="190.5" cy="234.8" r="2.9" fill="#f2b59c"/><rect x="189.6" y="231.2" width="1.7" height="1.2" fill="#f2b59c"/></g><clipPath id="c2"><rect x="187.3" y="121" width="84.5" height="106.8" rx="0"/></clipPath><g clip-path="url(#c2)"><rect x="187.3" y="121" width="84.5" height="106.8" fill="#a9d4df"/><circle cx="176.8" cy="126.3" r="2.65" fill="#345f68"/><circle cx="189.7" cy="126.3" r="2.65" fill="#345f68"/><circle cx="202.6" cy="126.3" r="2.65" fill="#345f68"/><circle cx="215.5" cy="126.3" r="2.65" fill="#345f68"/><circle cx="228.4" cy="126.3" r="2.65" fill="#345f68"/><circle cx="241.3" cy="126.3" r="2.65" fill="#345f68"/><circle cx="254.2" cy="126.3" r="2.65" fill="#345f68"/><circle cx="267.1" cy="126.3" r="2.65" fill="#345f68"/><circle cx="183.2" cy="132.8" r="2.65" fill="#345f68"/><circle cx="196.2" cy="132.8" r="2.65" fill="#345f68"/><circle cx="209.1" cy="132.8" r="2.65" fill="#345f68"/><circle cx="222.0" cy="132.8" r="2.65" fill="#345f68"/><circle cx="234.9" cy="132.8" r="2.65" fill="#345f68"/><circle cx="247.8" cy="132.8" r="2.65" fill="#345f68"/><circle cx="260.7" cy="132.8" r="2.65" fill="#345f68"/><circle cx="273.6" cy="132.8" r="2.65" fill="#345f68"/><circle cx="176.8" cy="139.2" r="2.65" fill="#345f68"/><circle cx="189.7" cy="139.2" r="2.65" fill="#345f68"/><circle cx="202.6" cy="139.2" r="2.65" fill="#345f68"/><circle cx="215.5" cy="139.2" r="2.65" fill="#345f68"/><circle cx="228.4" cy="139.2" r="2.65" fill="#345f68"/><circle cx="241.3" cy="139.2" r="2.65" fill="#345f68"/><circle cx="254.2" cy="139.2" r="2.65" fill="#345f68"/><circle cx="267.1" cy="139.2" r="2.65" fill="#345f68"/><circle cx="183.2" cy="145.7" r="2.65" fill="#345f68"/><circle cx="196.2" cy="145.7" r="2.65" fill="#345f68"/><circle cx="209.1" cy="145.7" r="2.65" fill="#345f68"/><circle cx="222.0" cy="145.7" r="2.65" fill="#345f68"/><circle cx="234.9" cy="145.7" r="2.65" fill="#345f68"/><circle cx="247.8" cy="145.7" r="2.65" fill="#345f68"/><circle cx="260.7" cy="145.7" r="2.65" fill="#345f68"/><circle cx="273.6" cy="145.7" r="2.65" fill="#345f68"/><circle cx="176.8" cy="152.1" r="2.65" fill="#345f68"/><circle cx="189.7" cy="152.1" r="2.65" fill="#345f68"/><circle cx="202.6" cy="152.1" r="2.65" fill="#345f68"/><circle cx="215.5" cy="152.1" r="2.65" fill="#345f68"/><circle cx="228.4" cy="152.1" r="2.65" fill="#345f68"/><circle cx="241.3" cy="152.1" r="2.65" fill="#345f68"/><circle cx="254.2" cy="152.1" r="2.65" fill="#345f68"/><circle cx="267.1" cy="152.1" r="2.65" fill="#345f68"/><circle cx="183.2" cy="158.6" r="2.65" fill="#345f68"/><circle cx="196.2" cy="158.6" r="2.65" fill="#345f68"/><circle cx="209.1" cy="158.6" r="2.65" fill="#345f68"/><circle cx="222.0" cy="158.6" r="2.65" fill="#345f68"/><circle cx="234.9" cy="158.6" r="2.65" fill="#345f68"/><circle cx="247.8" cy="158.6" r="2.65" fill="#345f68"/><circle cx="260.7" cy="158.6" r="2.65" fill="#345f68"/><circle cx="273.6" cy="158.6" r="2.65" fill="#345f68"/><circle cx="176.8" cy="165.1" r="2.65" fill="#345f68"/><circle cx="189.7" cy="165.1" r="2.65" fill="#345f68"/><circle cx="202.6" cy="165.1" r="2.65" fill="#345f68"/><circle cx="215.5" cy="165.1" r="2.65" fill="#345f68"/><circle cx="228.4" cy="165.1" r="2.65" fill="#345f68"/><circle cx="241.3" cy="165.1" r="2.65" fill="#345f68"/><circle cx="254.2" cy="165.1" r="2.65" fill="#345f68"/><circle cx="267.1" cy="165.1" r="2.65" fill="#345f68"/><circle cx="183.2" cy="171.5" r="2.65" fill="#345f68"/><circle cx="196.2" cy="171.5" r="2.65" fill="#345f68"/><circle cx="209.1" cy="171.5" r="2.65" fill="#345f68"/><circle cx="222.0" cy="171.5" r="2.65" fill="#345f68"/><circle cx="234.9" cy="171.5" r="2.65" fill="#345f68"/><circle cx="247.8" cy="171.5" r="2.65" fill="#345f68"/><circle cx="260.7" cy="171.5" r="2.65" fill="#345f68"/><circle cx="273.6" cy="171.5" r="2.65" fill="#345f68"/><circle cx="176.8" cy="178.0" r="2.65" fill="#345f68"/><circle cx="189.7" cy="178.0" r="2.65" fill="#345f68"/><circle cx="202.6" cy="178.0" r="2.65" fill="#345f68"/><circle cx="215.5" cy="178.0" r="2.65" fill="#345f68"/><circle cx="228.4" cy="178.0" r="2.65" fill="#345f68"/><circle cx="241.3" cy="178.0" r="2.65" fill="#345f68"/><circle cx="254.2" cy="178.0" r="2.65" fill="#345f68"/><circle cx="267.1" cy="178.0" r="2.65" fill="#345f68"/><circle cx="183.2" cy="184.4" r="2.65" fill="#345f68"/><circle cx="196.2" cy="184.4" r="2.65" fill="#345f68"/><circle cx="209.1" cy="184.4" r="2.65" fill="#345f68"/><circle cx="222.0" cy="184.4" r="2.65" fill="#345f68"/><circle cx="234.9" cy="184.4" r="2.65" fill="#345f68"/><circle cx="247.8" cy="184.4" r="2.65" fill="#345f68"/><circle cx="260.7" cy="184.4" r="2.65" fill="#345f68"/><circle cx="273.6" cy="184.4" r="2.65" fill="#345f68"/><circle cx="176.8" cy="190.9" r="2.65" fill="#345f68"/><circle cx="189.7" cy="190.9" r="2.65" fill="#345f68"/><circle cx="202.6" cy="190.9" r="2.65" fill="#345f68"/><circle cx="215.5" cy="190.9" r="2.65" fill="#345f68"/><circle cx="228.4" cy="190.9" r="2.65" fill="#345f68"/><circle cx="241.3" cy="190.9" r="2.65" fill="#345f68"/><circle cx="254.2" cy="190.9" r="2.65" fill="#345f68"/><circle cx="267.1" cy="190.9" r="2.65" fill="#345f68"/><circle cx="183.2" cy="197.4" r="2.65" fill="#345f68"/><circle cx="196.2" cy="197.4" r="2.65" fill="#345f68"/><circle cx="209.1" cy="197.4" r="2.65" fill="#345f68"/><circle cx="222.0" cy="197.4" r="2.65" fill="#345f68"/><circle cx="234.9" cy="197.4" r="2.65" fill="#345f68"/><circle cx="247.8" cy="197.4" r="2.65" fill="#345f68"/><circle cx="260.7" cy="197.4" r="2.65" fill="#345f68"/><circle cx="273.6" cy="197.4" r="2.65" fill="#345f68"/><circle cx="176.8" cy="203.8" r="2.65" fill="#345f68"/><circle cx="189.7" cy="203.8" r="2.65" fill="#345f68"/><circle cx="202.6" cy="203.8" r="2.65" fill="#345f68"/><circle cx="215.5" cy="203.8" r="2.65" fill="#345f68"/><circle cx="228.4" cy="203.8" r="2.65" fill="#345f68"/><circle cx="241.3" cy="203.8" r="2.65" fill="#345f68"/><circle cx="254.2" cy="203.8" r="2.65" fill="#345f68"/><circle cx="267.1" cy="203.8" r="2.65" fill="#345f68"/><circle cx="183.2" cy="210.3" r="2.65" fill="#345f68"/><circle cx="196.2" cy="210.3" r="2.65" fill="#345f68"/><circle cx="209.1" cy="210.3" r="2.65" fill="#345f68"/><circle cx="222.0" cy="210.3" r="2.65" fill="#345f68"/><circle cx="234.9" cy="210.3" r="2.65" fill="#345f68"/><circle cx="247.8" cy="210.3" r="2.65" fill="#345f68"/><circle cx="260.7" cy="210.3" r="2.65" fill="#345f68"/><circle cx="273.6" cy="210.3" r="2.65" fill="#345f68"/><circle cx="176.8" cy="216.7" r="2.65" fill="#345f68"/><circle cx="189.7" cy="216.7" r="2.65" fill="#345f68"/><circle cx="202.6" cy="216.7" r="2.65" fill="#345f68"/><circle cx="215.5" cy="216.7" r="2.65" fill="#345f68"/><circle cx="228.4" cy="216.7" r="2.65" fill="#345f68"/><circle cx="241.3" cy="216.7" r="2.65" fill="#345f68"/><circle cx="254.2" cy="216.7" r="2.65" fill="#345f68"/><circle cx="267.1" cy="216.7" r="2.65" fill="#345f68"/><circle cx="183.2" cy="223.2" r="2.65" fill="#345f68"/><circle cx="196.2" cy="223.2" r="2.65" fill="#345f68"/><circle cx="209.1" cy="223.2" r="2.65" fill="#345f68"/><circle cx="222.0" cy="223.2" r="2.65" fill="#345f68"/><circle cx="234.9" cy="223.2" r="2.65" fill="#345f68"/><circle cx="247.8" cy="223.2" r="2.65" fill="#345f68"/><circle cx="260.7" cy="223.2" r="2.65" fill="#345f68"/><circle cx="273.6" cy="223.2" r="2.65" fill="#345f68"/><circle cx="176.8" cy="229.7" r="2.65" fill="#345f68"/><circle cx="189.7" cy="229.7" r="2.65" fill="#345f68"/><circle cx="202.6" cy="229.7" r="2.65" fill="#345f68"/><circle cx="215.5" cy="229.7" r="2.65" fill="#345f68"/><circle cx="228.4" cy="229.7" r="2.65" fill="#345f68"/><circle cx="241.3" cy="229.7" r="2.65" fill="#345f68"/><circle cx="254.2" cy="229.7" r="2.65" fill="#345f68"/><circle cx="267.1" cy="229.7" r="2.65" fill="#345f68"/></g><clipPath id="c3"><rect x="275.6" y="121" width="84.5" height="106.8" rx="0"/></clipPath><g clip-path="url(#c3)"><rect x="275.6" y="121" width="84.5" height="106.8" fill="#2f5a68"/><circle cx="289.5" cy="194.7" r="0.9" fill="#f5dcaa" fill-opacity=".7"/><circle cx="299.4" cy="211.1" r="0.9" fill="#a9d3e0" fill-opacity=".7"/><circle cx="343.9" cy="175.7" r="0.9" fill="#f5dcaa" fill-opacity=".7"/><circle cx="320.2" cy="205.2" r="0.9" fill="#e9a38a" fill-opacity=".7"/><circle cx="307.0" cy="183.5" r="0.9" fill="#e9a38a" fill-opacity=".7"/><circle cx="287.8" cy="201.2" r="0.9" fill="#e9a38a" fill-opacity=".7"/><circle cx="334.2" cy="167.7" r="0.9" fill="#f5dcaa" fill-opacity=".7"/><circle cx="340.7" cy="164.4" r="0.9" fill="#a9d3e0" fill-opacity=".7"/><circle cx="278.5" cy="156.1" r="0.9" fill="#a9d3e0" fill-opacity=".7"/><circle cx="334.2" cy="190.3" r="0.9" fill="#a9d3e0" fill-opacity=".7"/><circle cx="277.6" cy="200.1" r="0.9" fill="#e9a38a" fill-opacity=".7"/><circle cx="286.2" cy="220.1" r="0.9" fill="#a9d3e0" fill-opacity=".7"/><circle cx="289.2" cy="198.8" r="0.9" fill="#a9d3e0" fill-opacity=".7"/><circle cx="316.6" cy="141.0" r="0.9" fill="#e9a38a" fill-opacity=".7"/><circle cx="315.3" cy="208.6" r="0.9" fill="#e9a38a" fill-opacity=".7"/><circle cx="341.5" cy="143.3" r="0.9" fill="#f5dcaa" fill-opacity=".7"/><circle cx="339.4" cy="202.5" r="0.9" fill="#f5dcaa" fill-opacity=".7"/><circle cx="359.2" cy="128.6" r="0.9" fill="#f5dcaa" fill-opacity=".7"/><circle cx="315.8" cy="209.3" r="0.9" fill="#e9a38a" fill-opacity=".7"/><circle cx="304.4" cy="136.6" r="0.9" fill="#f5dcaa" fill-opacity=".7"/><circle cx="310.2" cy="160.0" r="0.9" fill="#a9d3e0" fill-opacity=".7"/><circle cx="318.0" cy="155.0" r="0.9" fill="#a9d3e0" fill-opacity=".7"/><circle cx="308.3" cy="123.9" r="0.9" fill="#e9a38a" fill-opacity=".7"/><circle cx="289.0" cy="197.5" r="0.9" fill="#a9d3e0" fill-opacity=".7"/><circle cx="275.8" cy="128.5" r="0.9" fill="#f5dcaa" fill-opacity=".7"/><circle cx="338.8" cy="144.7" r="0.9" fill="#f5dcaa" fill-opacity=".7"/><circle cx="302.5" cy="225.7" r="0.9" fill="#e9a38a" fill-opacity=".7"/><circle cx="290.9" cy="139.2" r="0.9" fill="#a9d3e0" fill-opacity=".7"/><circle cx="346.0" cy="156.5" r="0.9" fill="#f5dcaa" fill-opacity=".7"/><circle cx="354.2" cy="147.2" r="0.9" fill="#e9a38a" fill-opacity=".7"/><circle cx="281.1" cy="207.9" r="0.9" fill="#a9d3e0" fill-opacity=".7"/><circle cx="307.3" cy="194.0" r="0.9" fill="#f5dcaa" fill-opacity=".7"/><circle cx="319.5" cy="191.3" r="0.9" fill="#e9a38a" fill-opacity=".7"/><circle cx="310.0" cy="226.6" r="0.9" fill="#f5dcaa" fill-opacity=".7"/><circle cx="325.5" cy="215.3" r="0.9" fill="#a9d3e0" fill-opacity=".7"/><circle cx="318.4" cy="192.2" r="0.9" fill="#e9a38a" fill-opacity=".7"/><circle cx="289.3" cy="128.4" r="0.9" fill="#a9d3e0" fill-opacity=".7"/><circle cx="341.0" cy="172.6" r="0.9" fill="#a9d3e0" fill-opacity=".7"/><circle cx="280.0" cy="148.6" r="0.9" fill="#a9d3e0" fill-opacity=".7"/><circle cx="278.5" cy="147.5" r="0.9" fill="#a9d3e0" fill-opacity=".7"/><circle cx="281.5" cy="157.1" r="0.9" fill="#e9a38a" fill-opacity=".7"/><circle cx="358.7" cy="200.7" r="0.9" fill="#a9d3e0" fill-opacity=".7"/><circle cx="279.8" cy="135.9" r="0.9" fill="#f5dcaa" fill-opacity=".7"/><circle cx="320.0" cy="198.8" r="0.9" fill="#e9a38a" fill-opacity=".7"/><circle cx="356.1" cy="217.1" r="0.9" fill="#a9d3e0" fill-opacity=".7"/><circle cx="342.8" cy="215.1" r="0.9" fill="#f5dcaa" fill-opacity=".7"/><circle cx="340.9" cy="172.7" r="0.9" fill="#a9d3e0" fill-opacity=".7"/><circle cx="301.6" cy="178.1" r="0.9" fill="#a9d3e0" fill-opacity=".7"/><circle cx="287.4" cy="198.0" r="0.9" fill="#a9d3e0" fill-opacity=".7"/><circle cx="333.5" cy="222.9" r="0.9" fill="#e9a38a" fill-opacity=".7"/><circle cx="297.9" cy="155.8" r="0.9" fill="#e9a38a" fill-opacity=".7"/><circle cx="347.6" cy="183.4" r="0.9" fill="#a9d3e0" fill-opacity=".7"/><circle cx="333.3" cy="201.3" r="0.9" fill="#e9a38a" fill-opacity=".7"/><circle cx="286.9" cy="131.1" r="0.9" fill="#e9a38a" fill-opacity=".7"/><circle cx="291.4" cy="189.5" r="0.9" fill="#e9a38a" fill-opacity=".7"/><circle cx="281.7" cy="133.7" r="0.9" fill="#a9d3e0" fill-opacity=".7"/><circle cx="286.3" cy="178.5" r="0.9" fill="#a9d3e0" fill-opacity=".7"/><circle cx="309.1" cy="215.8" r="0.9" fill="#f5dcaa" fill-opacity=".7"/><circle cx="289.6" cy="140.6" r="0.9" fill="#a9d3e0" fill-opacity=".7"/><circle cx="292.6" cy="200.5" r="0.9" fill="#e9a38a" fill-opacity=".7"/><circle cx="326.6" cy="174.9" r="0.9" fill="#f5dcaa" fill-opacity=".7"/><circle cx="341.0" cy="205.4" r="0.9" fill="#e9a38a" fill-opacity=".7"/><circle cx="308.4" cy="213.3" r="0.9" fill="#a9d3e0" fill-opacity=".7"/><circle cx="340.2" cy="139.7" r="0.9" fill="#f5dcaa" fill-opacity=".7"/><circle cx="295.3" cy="224.0" r="0.9" fill="#f5dcaa" fill-opacity=".7"/><circle cx="302.1" cy="125.5" r="0.9" fill="#a9d3e0" fill-opacity=".7"/><circle cx="288.8" cy="198.6" r="0.9" fill="#a9d3e0" fill-opacity=".7"/><circle cx="344.7" cy="206.8" r="0.9" fill="#a9d3e0" fill-opacity=".7"/><circle cx="355.7" cy="131.5" r="0.9" fill="#f5dcaa" fill-opacity=".7"/><circle cx="280.7" cy="184.5" r="0.9" fill="#a9d3e0" fill-opacity=".7"/><circle cx="357.3" cy="154.1" r="0.9" fill="#f5dcaa" fill-opacity=".7"/><circle cx="328.4" cy="201.9" r="0.9" fill="#e9a38a" fill-opacity=".7"/><circle cx="281.0" cy="208.0" r="0.9" fill="#e9a38a" fill-opacity=".7"/><circle cx="305.6" cy="155.0" r="0.9" fill="#a9d3e0" fill-opacity=".7"/><circle cx="284.7" cy="129.1" r="0.9" fill="#e9a38a" fill-opacity=".7"/><circle cx="270.9" cy="118.6" r="11.0" fill="#f2c4b0"/><rect x="267.8" y="105.1" width="6.2" height="3.9" fill="#b57b46"/><circle cx="292.6" cy="117.3" r="9.1" fill="#cfe0b9"/><rect x="290.0" y="106.2" width="5.1" height="3.2" fill="#b57b46"/><circle cx="316.0" cy="109.3" r="7.3" fill="#8e4a34"/><path d="M309.8 106.0l2.1 -1.5l2.1 1.5l2.1 -1.5l2.1 1.5l2.1 -1.5l2.1 1.5" stroke="#fff" fill="none" stroke-width="0.88"/><path d="M309.8 109.7l2.1 -1.5l2.1 1.5l2.1 -1.5l2.1 1.5l2.1 -1.5l2.1 1.5" stroke="#fff" fill="none" stroke-width="0.88"/><path d="M309.8 113.0l2.1 -1.5l2.1 1.5l2.1 -1.5l2.1 1.5l2.1 -1.5l2.1 1.5" stroke="#fff" fill="none" stroke-width="0.88"/><rect x="314.0" y="100.3" width="4.1" height="2.6" fill="#b57b46"/><circle cx="329.1" cy="117.3" r="10.4" fill="#a3553b"/><path d="M320.3 112.6l2.9 -2.1l2.9 2.1l2.9 -2.1l2.9 2.1l2.9 -2.1l2.9 2.1" stroke="#fff" fill="none" stroke-width="1.25"/><path d="M320.3 117.8l2.9 -2.1l2.9 2.1l2.9 -2.1l2.9 2.1l2.9 -2.1l2.9 2.1" stroke="#fff" fill="none" stroke-width="1.25"/><path d="M320.3 122.5l2.9 -2.1l2.9 2.1l2.9 -2.1l2.9 2.1l2.9 -2.1l2.9 2.1" stroke="#fff" fill="none" stroke-width="1.25"/><rect x="326.2" y="104.6" width="5.8" height="3.6" fill="#b57b46"/><circle cx="357.0" cy="113.4" r="8.5" fill="#f5d6a0"/><path d="M350.2 106.6l5.1 13.6" stroke="#fff" stroke-opacity=".85" stroke-width="1.19"/><path d="M354.5 106.6l5.1 13.6" stroke="#fff" stroke-opacity=".85" stroke-width="1.19"/><path d="M358.8 106.6l5.1 13.6" stroke="#fff" stroke-opacity=".85" stroke-width="1.19"/><rect x="354.7" y="103.0" width="4.8" height="3.0" fill="#b57b46"/><circle cx="379.5" cy="116.6" r="7.4" fill="#c48b4f"/><rect x="372.1" y="114.1" width="14.8" height="5.2" fill="#f6eadb"/><rect x="377.5" y="107.6" width="4.1" height="2.6" fill="#b57b46"/><circle cx="279.7" cy="135.7" r="10.7" fill="#f5d6a0"/><path d="M271.1 127.2l6.4 17.1" stroke="#fff" stroke-opacity=".85" stroke-width="1.50"/><path d="M276.5 127.2l6.4 17.1" stroke="#fff" stroke-opacity=".85" stroke-width="1.50"/><path d="M281.8 127.2l6.4 17.1" stroke="#fff" stroke-opacity=".85" stroke-width="1.50"/><rect x="276.7" y="122.7" width="6.0" height="3.7" fill="#b57b46"/><circle cx="302.5" cy="134.5" r="10.1" fill="#f1b08e"/><rect x="299.7" y="122.2" width="5.6" height="3.5" fill="#b57b46"/><circle cx="321.6" cy="133.0" r="8.4" fill="#f1b08e"/><path d="M314.4 129.2l2.4 -1.7l2.4 1.7l2.4 -1.7l2.4 1.7l2.4 -1.7l2.4 1.7" stroke="#fff" fill="none" stroke-width="1.01"/><path d="M314.4 133.4l2.4 -1.7l2.4 1.7l2.4 -1.7l2.4 1.7l2.4 -1.7l2.4 1.7" stroke="#fff" fill="none" stroke-width="1.01"/><path d="M314.4 137.2l2.4 -1.7l2.4 1.7l2.4 -1.7l2.4 1.7l2.4 -1.7l2.4 1.7" stroke="#fff" fill="none" stroke-width="1.01"/><rect x="319.2" y="122.7" width="4.7" height="2.9" fill="#b57b46"/><circle cx="348.6" cy="139.1" r="7.3" fill="#c9c0bc"/><circle cx="345.7" cy="137.0" r="1.3" fill="#fff"/><circle cx="351.2" cy="136.6" r="1.3" fill="#fff"/><circle cx="348.6" cy="140.6" r="1.3" fill="#fff"/><circle cx="346.1" cy="142.8" r="1.3" fill="#fff"/><circle cx="351.6" cy="142.4" r="1.3" fill="#fff"/><rect x="346.6" y="130.3" width="4.1" height="2.5" fill="#b57b46"/><circle cx="360.0" cy="137.7" r="10.0" fill="#7fa679"/><circle cx="360.0" cy="137.7" r="6.2" fill="none" stroke="#dbe8c8" stroke-width="1.40"/><circle cx="360.0" cy="137.7" r="2.5" fill="#dbe8c8"/><rect x="357.2" y="125.5" width="5.6" height="3.5" fill="#b57b46"/><circle cx="270.0" cy="145.9" r="8.4" fill="#f1b08e"/><path d="M262.8 142.2l2.4 -1.7l2.4 1.7l2.4 -1.7l2.4 1.7l2.4 -1.7l2.4 1.7" stroke="#fff" fill="none" stroke-width="1.01"/><path d="M262.8 146.4l2.4 -1.7l2.4 1.7l2.4 -1.7l2.4 1.7l2.4 -1.7l2.4 1.7" stroke="#fff" fill="none" stroke-width="1.01"/><path d="M262.8 150.1l2.4 -1.7l2.4 1.7l2.4 -1.7l2.4 1.7l2.4 -1.7l2.4 1.7" stroke="#fff" fill="none" stroke-width="1.01"/><rect x="267.6" y="135.7" width="4.7" height="2.9" fill="#b57b46"/><circle cx="293.4" cy="157.3" r="11.1" fill="#c48b4f"/><rect x="282.3" y="153.5" width="22.1" height="7.8" fill="#f6eadb"/><rect x="290.3" y="143.8" width="6.2" height="3.9" fill="#b57b46"/><circle cx="313.9" cy="147.5" r="8.5" fill="#a9d3e0"/><path d="M307.0 140.7l5.1 13.7" stroke="#fff" stroke-opacity=".85" stroke-width="1.20"/><path d="M311.3 140.7l5.1 13.7" stroke="#fff" stroke-opacity=".85" stroke-width="1.20"/><path d="M315.6 140.7l5.1 13.7" stroke="#fff" stroke-opacity=".85" stroke-width="1.20"/><rect x="311.5" y="137.1" width="4.8" height="3.0" fill="#b57b46"/><circle cx="327.0" cy="145.3" r="9.2" fill="#c48b4f"/><rect x="317.8" y="142.1" width="18.5" height="6.5" fill="#f6eadb"/><rect x="324.4" y="134.0" width="5.2" height="3.2" fill="#b57b46"/><circle cx="358.3" cy="151.3" r="8.2" fill="#cfe0b9"/><rect x="356.0" y="141.4" width="4.6" height="2.9" fill="#b57b46"/><circle cx="370.0" cy="149.9" r="8.8" fill="#f5d6a0"/><path d="M362.9 142.8l5.3 14.1" stroke="#fff" stroke-opacity=".85" stroke-width="1.23"/><path d="M367.3 142.8l5.3 14.1" stroke="#fff" stroke-opacity=".85" stroke-width="1.23"/><path d="M371.7 142.8l5.3 14.1" stroke="#fff" stroke-opacity=".85" stroke-width="1.23"/><rect x="367.5" y="139.2" width="4.9" height="3.1" fill="#b57b46"/><circle cx="281.9" cy="171.6" r="9.8" fill="#f2c4b0"/><rect x="279.1" y="159.7" width="5.5" height="3.4" fill="#b57b46"/><circle cx="296.9" cy="175.3" r="7.4" fill="#c9c0bc"/><circle cx="293.9" cy="173.1" r="1.3" fill="#fff"/><circle cx="299.5" cy="172.7" r="1.3" fill="#fff"/><circle cx="296.9" cy="176.8" r="1.3" fill="#fff"/><circle cx="294.3" cy="179.0" r="1.3" fill="#fff"/><circle cx="299.8" cy="178.6" r="1.3" fill="#fff"/><rect x="294.8" y="166.3" width="4.1" height="2.6" fill="#b57b46"/><circle cx="315.7" cy="169.5" r="7.4" fill="#f5d6a0"/><path d="M309.8 163.6l4.4 11.8" stroke="#fff" stroke-opacity=".85" stroke-width="1.04"/><path d="M313.5 163.6l4.4 11.8" stroke="#fff" stroke-opacity=".85" stroke-width="1.04"/><path d="M317.2 163.6l4.4 11.8" stroke="#fff" stroke-opacity=".85" stroke-width="1.04"/><rect x="313.7" y="160.5" width="4.1" height="2.6" fill="#b57b46"/><circle cx="342.2" cy="175.7" r="10.9" fill="#c48b4f"/><rect x="331.3" y="171.9" width="21.8" height="7.6" fill="#f6eadb"/><rect x="339.1" y="162.4" width="6.1" height="3.8" fill="#b57b46"/><circle cx="358.7" cy="167.1" r="9.0" fill="#a3553b"/><path d="M351.0 163.1l2.5 -1.8l2.5 1.8l2.5 -1.8l2.5 1.8l2.5 -1.8l2.5 1.8" stroke="#fff" fill="none" stroke-width="1.08"/><path d="M351.0 167.6l2.5 -1.8l2.5 1.8l2.5 -1.8l2.5 1.8l2.5 -1.8l2.5 1.8" stroke="#fff" fill="none" stroke-width="1.08"/><path d="M351.0 171.6l2.5 -1.8l2.5 1.8l2.5 -1.8l2.5 1.8l2.5 -1.8l2.5 1.8" stroke="#fff" fill="none" stroke-width="1.08"/><rect x="356.2" y="156.1" width="5.0" height="3.1" fill="#b57b46"/><circle cx="265.1" cy="188.7" r="10.8" fill="#f1b08e"/><path d="M255.9 183.8l3.0 -2.2l3.0 2.2l3.0 -2.2l3.0 2.2l3.0 -2.2l3.0 2.2" stroke="#fff" fill="none" stroke-width="1.29"/><path d="M255.9 189.2l3.0 -2.2l3.0 2.2l3.0 -2.2l3.0 2.2l3.0 -2.2l3.0 2.2" stroke="#fff" fill="none" stroke-width="1.29"/><path d="M255.9 194.1l3.0 -2.2l3.0 2.2l3.0 -2.2l3.0 2.2l3.0 -2.2l3.0 2.2" stroke="#fff" fill="none" stroke-width="1.29"/><rect x="262.1" y="175.5" width="6.0" height="3.8" fill="#b57b46"/><circle cx="294.6" cy="185.4" r="8.9" fill="#f1b08e"/><rect x="292.1" y="174.6" width="5.0" height="3.1" fill="#b57b46"/><circle cx="307.8" cy="191.6" r="10.5" fill="#f1b08e"/><path d="M299.4 183.2l6.3 16.8" stroke="#fff" stroke-opacity=".85" stroke-width="1.47"/><path d="M304.7 183.2l6.3 16.8" stroke="#fff" stroke-opacity=".85" stroke-width="1.47"/><path d="M309.9 183.2l6.3 16.8" stroke="#fff" stroke-opacity=".85" stroke-width="1.47"/><rect x="304.9" y="178.8" width="5.9" height="3.7" fill="#b57b46"/><circle cx="334.3" cy="182.4" r="8.9" fill="#f1b08e"/><path d="M327.2 175.3l5.4 14.3" stroke="#fff" stroke-opacity=".85" stroke-width="1.25"/><path d="M331.6 175.3l5.4 14.3" stroke="#fff" stroke-opacity=".85" stroke-width="1.25"/><path d="M336.1 175.3l5.4 14.3" stroke="#fff" stroke-opacity=".85" stroke-width="1.25"/><rect x="331.8" y="171.5" width="5.0" height="3.1" fill="#b57b46"/><circle cx="347.8" cy="191.8" r="9.6" fill="#a9d3e0"/><path d="M340.1 184.1l5.8 15.3" stroke="#fff" stroke-opacity=".85" stroke-width="1.34"/><path d="M344.9 184.1l5.8 15.3" stroke="#fff" stroke-opacity=".85" stroke-width="1.34"/><path d="M349.7 184.1l5.8 15.3" stroke="#fff" stroke-opacity=".85" stroke-width="1.34"/><rect x="345.1" y="180.1" width="5.4" height="3.4" fill="#b57b46"/><circle cx="376.6" cy="190.0" r="7.8" fill="#c48b4f"/><rect x="368.7" y="187.3" width="15.7" height="5.5" fill="#f6eadb"/><rect x="374.4" y="180.4" width="4.4" height="2.7" fill="#b57b46"/><circle cx="277.9" cy="203.5" r="9.7" fill="#7fa679"/><circle cx="277.9" cy="203.5" r="6.0" fill="none" stroke="#dbe8c8" stroke-width="1.35"/><circle cx="277.9" cy="203.5" r="2.4" fill="#dbe8c8"/><rect x="275.2" y="191.7" width="5.4" height="3.4" fill="#b57b46"/><circle cx="302.9" cy="202.1" r="7.6" fill="#a9d3e0"/><path d="M296.8 196.0l4.6 12.2" stroke="#fff" stroke-opacity=".85" stroke-width="1.07"/><path d="M300.6 196.0l4.6 12.2" stroke="#fff" stroke-opacity=".85" stroke-width="1.07"/><path d="M304.4 196.0l4.6 12.2" stroke="#fff" stroke-opacity=".85" stroke-width="1.07"/><rect x="300.8" y="192.8" width="4.3" height="2.7" fill="#b57b46"/><circle cx="318.9" cy="200.5" r="7.4" fill="#a9d3e0"/><path d="M313.0 194.6l4.4 11.8" stroke="#fff" stroke-opacity=".85" stroke-width="1.03"/><path d="M316.7 194.6l4.4 11.8" stroke="#fff" stroke-opacity=".85" stroke-width="1.03"/><path d="M320.4 194.6l4.4 11.8" stroke="#fff" stroke-opacity=".85" stroke-width="1.03"/><rect x="316.8" y="191.5" width="4.1" height="2.6" fill="#b57b46"/><circle cx="345.1" cy="208.0" r="7.9" fill="#7fa679"/><circle cx="345.1" cy="208.0" r="4.9" fill="none" stroke="#dbe8c8" stroke-width="1.10"/><circle cx="345.1" cy="208.0" r="2.0" fill="#dbe8c8"/><rect x="342.9" y="198.4" width="4.4" height="2.7" fill="#b57b46"/><circle cx="360.4" cy="204.3" r="8.2" fill="#f5d6a0"/><path d="M353.9 197.7l4.9 13.1" stroke="#fff" stroke-opacity=".85" stroke-width="1.15"/><path d="M358.0 197.7l4.9 13.1" stroke="#fff" stroke-opacity=".85" stroke-width="1.15"/><path d="M362.1 197.7l4.9 13.1" stroke="#fff" stroke-opacity=".85" stroke-width="1.15"/><rect x="358.1" y="194.2" width="4.6" height="2.9" fill="#b57b46"/><circle cx="265.4" cy="230.0" r="8.9" fill="#c9c0bc"/><circle cx="261.9" cy="227.4" r="1.6" fill="#fff"/><circle cx="268.5" cy="226.9" r="1.6" fill="#fff"/><circle cx="265.4" cy="231.8" r="1.6" fill="#fff"/><circle cx="262.3" cy="234.5" r="1.6" fill="#fff"/><circle cx="269.0" cy="234.0" r="1.6" fill="#fff"/><rect x="263.0" y="219.2" width="5.0" height="3.1" fill="#b57b46"/><circle cx="294.4" cy="220.7" r="7.4" fill="#c9c0bc"/><circle cx="291.5" cy="218.5" r="1.3" fill="#fff"/><circle cx="297.0" cy="218.1" r="1.3" fill="#fff"/><circle cx="294.4" cy="222.2" r="1.3" fill="#fff"/><circle cx="291.8" cy="224.4" r="1.3" fill="#fff"/><circle cx="297.4" cy="224.0" r="1.3" fill="#fff"/><rect x="292.4" y="211.7" width="4.1" height="2.6" fill="#b57b46"/><circle cx="312.6" cy="226.0" r="9.7" fill="#f1b08e"/><path d="M304.4 221.6l2.7 -1.9l2.7 1.9l2.7 -1.9l2.7 1.9l2.7 -1.9l2.7 1.9" stroke="#fff" fill="none" stroke-width="1.17"/><path d="M304.4 226.5l2.7 -1.9l2.7 1.9l2.7 -1.9l2.7 1.9l2.7 -1.9l2.7 1.9" stroke="#fff" fill="none" stroke-width="1.17"/><path d="M304.4 230.9l2.7 -1.9l2.7 1.9l2.7 -1.9l2.7 1.9l2.7 -1.9l2.7 1.9" stroke="#fff" fill="none" stroke-width="1.17"/><rect x="309.9" y="214.1" width="5.4" height="3.4" fill="#b57b46"/><circle cx="330.6" cy="224.0" r="10.6" fill="#f1b08e"/><path d="M322.2 215.6l6.4 16.9" stroke="#fff" stroke-opacity=".85" stroke-width="1.48"/><path d="M327.5 215.6l6.4 16.9" stroke="#fff" stroke-opacity=".85" stroke-width="1.48"/><path d="M332.8 215.6l6.4 16.9" stroke="#fff" stroke-opacity=".85" stroke-width="1.48"/><rect x="327.7" y="211.1" width="5.9" height="3.7" fill="#b57b46"/><circle cx="358.4" cy="226.6" r="8.1" fill="#f2c4b0"/><rect x="356.2" y="216.7" width="4.5" height="2.8" fill="#b57b46"/><circle cx="380.2" cy="222.9" r="10.9" fill="#c9c0bc"/><circle cx="375.9" cy="219.7" r="2.0" fill="#fff"/><circle cx="384.0" cy="219.1" r="2.0" fill="#fff"/><circle cx="380.2" cy="225.1" r="2.0" fill="#fff"/><circle cx="376.4" cy="228.4" r="2.0" fill="#fff"/><circle cx="384.6" cy="227.8" r="2.0" fill="#fff"/><rect x="377.2" y="209.7" width="6.1" height="3.8" fill="#b57b46"/><circle cx="273.6" cy="240.7" r="9.6" fill="#a3553b"/><path d="M265.5 236.4l2.7 -1.9l2.7 1.9l2.7 -1.9l2.7 1.9l2.7 -1.9l2.7 1.9" stroke="#fff" fill="none" stroke-width="1.15"/><path d="M265.5 241.2l2.7 -1.9l2.7 1.9l2.7 -1.9l2.7 1.9l2.7 -1.9l2.7 1.9" stroke="#fff" fill="none" stroke-width="1.15"/><path d="M265.5 245.5l2.7 -1.9l2.7 1.9l2.7 -1.9l2.7 1.9l2.7 -1.9l2.7 1.9" stroke="#fff" fill="none" stroke-width="1.15"/><rect x="270.9" y="229.0" width="5.4" height="3.4" fill="#b57b46"/><circle cx="302.7" cy="238.3" r="10.8" fill="#cfe0b9"/><rect x="299.6" y="225.1" width="6.1" height="3.8" fill="#b57b46"/><circle cx="318.1" cy="248.9" r="9.4" fill="#f5d6a0"/><path d="M310.6 241.4l5.6 15.0" stroke="#fff" stroke-opacity=".85" stroke-width="1.31"/><path d="M315.3 241.4l5.6 15.0" stroke="#fff" stroke-opacity=".85" stroke-width="1.31"/><path d="M320.0 241.4l5.6 15.0" stroke="#fff" stroke-opacity=".85" stroke-width="1.31"/><rect x="315.5" y="237.4" width="5.3" height="3.3" fill="#b57b46"/><circle cx="346.2" cy="248.3" r="10.8" fill="#a9d3e0"/><path d="M337.6 239.7l6.5 17.2" stroke="#fff" stroke-opacity=".85" stroke-width="1.51"/><path d="M342.9 239.7l6.5 17.2" stroke="#fff" stroke-opacity=".85" stroke-width="1.51"/><path d="M348.3 239.7l6.5 17.2" stroke="#fff" stroke-opacity=".85" stroke-width="1.51"/><rect x="343.2" y="235.2" width="6.0" height="3.8" fill="#b57b46"/><circle cx="365.1" cy="240.7" r="9.8" fill="#c9c0bc"/><circle cx="361.1" cy="237.8" r="1.8" fill="#fff"/><circle cx="368.5" cy="237.3" r="1.8" fill="#fff"/><circle cx="365.1" cy="242.7" r="1.8" fill="#fff"/><circle cx="361.6" cy="245.6" r="1.8" fill="#fff"/><circle cx="369.0" cy="245.2" r="1.8" fill="#fff"/><rect x="362.3" y="228.7" width="5.5" height="3.4" fill="#b57b46"/></g><clipPath id="c4"><rect x="363.9" y="121" width="84.5" height="106.8" rx="0"/></clipPath><g clip-path="url(#c4)"><rect x="363.9" y="121" width="84.5" height="106.8" fill="#687b5b"/><circle cx="371.7" cy="130.1" r="1.3" fill="#bccaa6"/><circle cx="386.3" cy="132.4" r="1.3" fill="#bccaa6"/><circle cx="398.4" cy="132.2" r="1.3" fill="#bccaa6"/><circle cx="403.0" cy="127.0" r="1.3" fill="#bccaa6"/><circle cx="426.1" cy="129.0" r="1.3" fill="#bccaa6"/><circle cx="438.3" cy="122.9" r="1.3" fill="#bccaa6"/><circle cx="446.1" cy="124.5" r="1.3" fill="#bccaa6"/><circle cx="370.7" cy="140.9" r="1.3" fill="#bccaa6"/><circle cx="377.4" cy="136.8" r="1.3" fill="#bccaa6"/><circle cx="393.1" cy="144.8" r="1.3" fill="#bccaa6"/><circle cx="411.4" cy="136.2" r="1.3" fill="#bccaa6"/><circle cx="424.4" cy="135.9" r="1.3" fill="#bccaa6"/><circle cx="435.1" cy="135.8" r="1.3" fill="#bccaa6"/><circle cx="440.7" cy="144.3" r="1.3" fill="#bccaa6"/><circle cx="366.9" cy="149.5" r="1.3" fill="#bccaa6"/><circle cx="388.5" cy="157.0" r="1.3" fill="#bccaa6"/><circle cx="393.2" cy="158.0" r="1.3" fill="#bccaa6"/><circle cx="408.8" cy="154.8" r="1.3" fill="#bccaa6"/><circle cx="417.7" cy="157.8" r="1.3" fill="#bccaa6"/><circle cx="435.9" cy="158.1" r="1.3" fill="#bccaa6"/><circle cx="450.9" cy="150.4" r="1.3" fill="#bccaa6"/><circle cx="368.7" cy="161.6" r="1.3" fill="#bccaa6"/><circle cx="378.9" cy="160.5" r="1.3" fill="#bccaa6"/><circle cx="393.4" cy="166.6" r="1.3" fill="#bccaa6"/><circle cx="402.7" cy="167.5" r="1.3" fill="#bccaa6"/><circle cx="419.2" cy="163.3" r="1.3" fill="#bccaa6"/><circle cx="437.4" cy="165.2" r="1.3" fill="#bccaa6"/><circle cx="444.3" cy="165.2" r="1.3" fill="#bccaa6"/><circle cx="372.6" cy="173.1" r="1.3" fill="#bccaa6"/><circle cx="388.4" cy="172.7" r="1.3" fill="#bccaa6"/><circle cx="398.5" cy="182.1" r="1.3" fill="#bccaa6"/><circle cx="402.8" cy="181.4" r="1.3" fill="#bccaa6"/><circle cx="419.5" cy="179.0" r="1.3" fill="#bccaa6"/><circle cx="428.1" cy="172.9" r="1.3" fill="#bccaa6"/><circle cx="442.8" cy="183.3" r="1.3" fill="#bccaa6"/><circle cx="366.8" cy="193.7" r="1.3" fill="#bccaa6"/><circle cx="387.9" cy="195.9" r="1.3" fill="#bccaa6"/><circle cx="393.9" cy="189.2" r="1.3" fill="#bccaa6"/><circle cx="408.6" cy="194.0" r="1.3" fill="#bccaa6"/><circle cx="416.5" cy="193.7" r="1.3" fill="#bccaa6"/><circle cx="437.1" cy="194.9" r="1.3" fill="#bccaa6"/><circle cx="441.1" cy="195.9" r="1.3" fill="#bccaa6"/><circle cx="365.6" cy="201.7" r="1.3" fill="#bccaa6"/><circle cx="384.2" cy="208.3" r="1.3" fill="#bccaa6"/><circle cx="393.8" cy="208.4" r="1.3" fill="#bccaa6"/><circle cx="408.8" cy="201.4" r="1.3" fill="#bccaa6"/><circle cx="418.9" cy="199.8" r="1.3" fill="#bccaa6"/><circle cx="428.9" cy="199.5" r="1.3" fill="#bccaa6"/><circle cx="448.6" cy="209.2" r="1.3" fill="#bccaa6"/><circle cx="366.4" cy="211.1" r="1.3" fill="#bccaa6"/><circle cx="388.5" cy="216.6" r="1.3" fill="#bccaa6"/><circle cx="394.6" cy="213.2" r="1.3" fill="#bccaa6"/><circle cx="409.4" cy="219.9" r="1.3" fill="#bccaa6"/><circle cx="420.5" cy="215.3" r="1.3" fill="#bccaa6"/><circle cx="428.6" cy="221.0" r="1.3" fill="#bccaa6"/><circle cx="441.1" cy="216.1" r="1.3" fill="#bccaa6"/></g><rect x="99.0" y="231.9" width="84.5" height="106.8" rx="0" fill="#6b8b6a"/><rect x="102.2" y="235.1" width="78.1" height="100.39999999999999" rx="0" fill="#fff"/><rect x="187.3" y="231.9" width="84.5" height="106.8" rx="0" fill="#1d525a"/><rect x="190.5" y="235.1" width="78.1" height="100.39999999999999" rx="0" fill="#fff"/><rect x="275.6" y="231.9" width="84.5" height="106.8" rx="0" fill="#fbe5c4"/><rect x="278.8" y="235.1" width="78.1" height="100.39999999999999" rx="0" fill="#fff"/><rect x="363.9" y="231.9" width="84.5" height="106.8" rx="0" fill="#dbeff0"/><rect x="367.09999999999997" y="235.1" width="78.1" height="100.39999999999999" rx="0" fill="#fff"/><clipPath id="c5"><rect x="99.0" y="342.5" width="84.5" height="53.3" rx="10"/></clipPath><g clip-path="url(#c5)"><rect x="99.0" y="342.5" width="84.5" height="53.3" fill="#2f5c66"/><circle cx="104.2" cy="346.8" r="1.45" fill="#9fc0c0"/><circle cx="112.1" cy="351.8" r="1.45" fill="#9fc0c0"/><circle cx="122.0" cy="348.1" r="1.45" fill="#9fc0c0"/><circle cx="142.2" cy="343.9" r="1.45" fill="#9fc0c0"/><circle cx="149.9" cy="349.3" r="1.45" fill="#9fc0c0"/><circle cx="155.9" cy="346.9" r="1.45" fill="#9fc0c0"/><circle cx="173.8" cy="347.6" r="1.45" fill="#9fc0c0"/><circle cx="185.2" cy="344.6" r="1.45" fill="#9fc0c0"/><circle cx="102.0" cy="355.4" r="1.45" fill="#9fc0c0"/><circle cx="115.8" cy="363.5" r="1.45" fill="#9fc0c0"/><circle cx="127.9" cy="362.0" r="1.45" fill="#9fc0c0"/><circle cx="137.0" cy="361.8" r="1.45" fill="#9fc0c0"/><circle cx="145.3" cy="357.2" r="1.45" fill="#9fc0c0"/><circle cx="162.3" cy="361.5" r="1.45" fill="#9fc0c0"/><circle cx="170.9" cy="355.1" r="1.45" fill="#9fc0c0"/><circle cx="180.5" cy="356.4" r="1.45" fill="#9fc0c0"/><circle cx="102.4" cy="373.6" r="1.45" fill="#9fc0c0"/><circle cx="112.8" cy="374.4" r="1.45" fill="#9fc0c0"/><circle cx="130.8" cy="366.0" r="1.45" fill="#9fc0c0"/><circle cx="136.9" cy="370.4" r="1.45" fill="#9fc0c0"/><circle cx="144.5" cy="369.7" r="1.45" fill="#9fc0c0"/><circle cx="164.6" cy="366.6" r="1.45" fill="#9fc0c0"/><circle cx="172.7" cy="366.6" r="1.45" fill="#9fc0c0"/><circle cx="183.7" cy="374.4" r="1.45" fill="#9fc0c0"/><circle cx="101.6" cy="376.7" r="1.45" fill="#9fc0c0"/><circle cx="111.6" cy="382.0" r="1.45" fill="#9fc0c0"/><circle cx="122.1" cy="377.5" r="1.45" fill="#9fc0c0"/><circle cx="138.1" cy="385.9" r="1.45" fill="#9fc0c0"/><circle cx="148.5" cy="380.6" r="1.45" fill="#9fc0c0"/><circle cx="161.9" cy="377.6" r="1.45" fill="#9fc0c0"/><circle cx="172.5" cy="378.4" r="1.45" fill="#9fc0c0"/><circle cx="184.0" cy="386.3" r="1.45" fill="#9fc0c0"/><circle cx="100.1" cy="393.4" r="1.45" fill="#9fc0c0"/><circle cx="116.8" cy="389.3" r="1.45" fill="#9fc0c0"/><circle cx="124.6" cy="397.8" r="1.45" fill="#9fc0c0"/><circle cx="143.2" cy="389.0" r="1.45" fill="#9fc0c0"/><circle cx="151.4" cy="397.4" r="1.45" fill="#9fc0c0"/><circle cx="157.9" cy="394.0" r="1.45" fill="#9fc0c0"/><circle cx="167.1" cy="391.5" r="1.45" fill="#9fc0c0"/><circle cx="184.6" cy="393.7" r="1.45" fill="#9fc0c0"/></g><clipPath id="c6"><rect x="187.3" y="342.5" width="84.5" height="53.3" rx="10"/></clipPath><g clip-path="url(#c6)"><rect x="187.3" y="342.5" width="84.5" height="53.3" fill="#f8caa2"/><circle cx="188.3" cy="348.5" r="0.9" fill="#a9d3e0" fill-opacity=".7"/><circle cx="199.2" cy="344.8" r="0.9" fill="#e9a38a" fill-opacity=".7"/><circle cx="232.5" cy="380.4" r="0.9" fill="#e9a38a" fill-opacity=".7"/><circle cx="199.8" cy="382.0" r="0.9" fill="#f5dcaa" fill-opacity=".7"/><circle cx="192.4" cy="354.8" r="0.9" fill="#f5dcaa" fill-opacity=".7"/><circle cx="225.1" cy="364.5" r="0.9" fill="#f5dcaa" fill-opacity=".7"/><circle cx="195.2" cy="343.6" r="0.9" fill="#a9d3e0" fill-opacity=".7"/><circle cx="216.2" cy="353.5" r="0.9" fill="#a9d3e0" fill-opacity=".7"/><circle cx="218.1" cy="393.4" r="0.9" fill="#e9a38a" fill-opacity=".7"/><circle cx="248.5" cy="364.7" r="0.9" fill="#f5dcaa" fill-opacity=".7"/><circle cx="233.6" cy="393.3" r="0.9" fill="#e9a38a" fill-opacity=".7"/><circle cx="217.3" cy="353.4" r="0.9" fill="#a9d3e0" fill-opacity=".7"/><circle cx="189.9" cy="381.7" r="0.9" fill="#a9d3e0" fill-opacity=".7"/><circle cx="242.3" cy="354.1" r="0.9" fill="#a9d3e0" fill-opacity=".7"/><circle cx="249.0" cy="352.8" r="0.9" fill="#f5dcaa" fill-opacity=".7"/><circle cx="256.5" cy="368.2" r="0.9" fill="#a9d3e0" fill-opacity=".7"/><circle cx="215.7" cy="360.3" r="0.9" fill="#a9d3e0" fill-opacity=".7"/><circle cx="228.0" cy="377.2" r="0.9" fill="#a9d3e0" fill-opacity=".7"/><circle cx="268.5" cy="394.5" r="0.9" fill="#e9a38a" fill-opacity=".7"/><circle cx="254.0" cy="358.8" r="0.9" fill="#e9a38a" fill-opacity=".7"/><circle cx="234.6" cy="392.4" r="0.9" fill="#f5dcaa" fill-opacity=".7"/><circle cx="212.2" cy="351.8" r="0.9" fill="#e9a38a" fill-opacity=".7"/><circle cx="265.1" cy="374.6" r="0.9" fill="#f5dcaa" fill-opacity=".7"/><circle cx="268.2" cy="378.2" r="0.9" fill="#a9d3e0" fill-opacity=".7"/><circle cx="264.2" cy="377.1" r="0.9" fill="#e9a38a" fill-opacity=".7"/><circle cx="196.9" cy="353.3" r="0.9" fill="#a9d3e0" fill-opacity=".7"/><circle cx="224.9" cy="384.5" r="0.9" fill="#f5dcaa" fill-opacity=".7"/><circle cx="247.6" cy="356.8" r="0.9" fill="#f5dcaa" fill-opacity=".7"/><circle cx="197.4" cy="352.8" r="0.9" fill="#a9d3e0" fill-opacity=".7"/><circle cx="201.0" cy="395.3" r="0.9" fill="#e9a38a" fill-opacity=".7"/><circle cx="227.5" cy="369.1" r="0.9" fill="#f5dcaa" fill-opacity=".7"/><circle cx="210.8" cy="362.3" r="0.9" fill="#f5dcaa" fill-opacity=".7"/><circle cx="228.7" cy="374.0" r="0.9" fill="#e9a38a" fill-opacity=".7"/><circle cx="228.3" cy="385.0" r="0.9" fill="#f5dcaa" fill-opacity=".7"/><circle cx="245.9" cy="394.4" r="0.9" fill="#e9a38a" fill-opacity=".7"/><circle cx="208.8" cy="383.3" r="0.9" fill="#a9d3e0" fill-opacity=".7"/><circle cx="216.8" cy="343.1" r="0.9" fill="#a9d3e0" fill-opacity=".7"/><circle cx="182.0" cy="335.5" r="10.1" fill="#c48b4f"/><rect x="171.9" y="332.0" width="20.2" height="7.1" fill="#f6eadb"/><rect x="179.2" y="323.2" width="5.7" height="3.5" fill="#b57b46"/><circle cx="197.3" cy="340.8" r="6.8" fill="#f1b08e"/><path d="M191.8 335.4l4.1 10.9" stroke="#fff" stroke-opacity=".85" stroke-width="0.95"/><path d="M195.2 335.4l4.1 10.9" stroke="#fff" stroke-opacity=".85" stroke-width="0.95"/><path d="M198.6 335.4l4.1 10.9" stroke="#fff" stroke-opacity=".85" stroke-width="0.95"/><rect x="195.4" y="332.5" width="3.8" height="2.4" fill="#b57b46"/><circle cx="228.6" cy="340.8" r="9.0" fill="#cfe0b9"/><rect x="226.1" y="329.8" width="5.1" height="3.2" fill="#b57b46"/><circle cx="244.7" cy="336.4" r="9.1" fill="#cfe0b9"/><rect x="242.2" y="325.2" width="5.1" height="3.2" fill="#b57b46"/><circle cx="261.6" cy="332.4" r="8.8" fill="#cfe0b9"/><rect x="259.1" y="321.6" width="4.9" height="3.1" fill="#b57b46"/><circle cx="283.8" cy="334.6" r="8.5" fill="#c9c0bc"/><circle cx="280.4" cy="332.0" r="1.5" fill="#fff"/><circle cx="286.8" cy="331.6" r="1.5" fill="#fff"/><circle cx="283.8" cy="336.3" r="1.5" fill="#fff"/><circle cx="280.8" cy="338.8" r="1.5" fill="#fff"/><circle cx="287.2" cy="338.4" r="1.5" fill="#fff"/><rect x="281.4" y="324.3" width="4.7" height="3.0" fill="#b57b46"/><circle cx="194.6" cy="360.0" r="9.0" fill="#c48b4f"/><rect x="185.5" y="356.9" width="18.1" height="6.3" fill="#f6eadb"/><rect x="192.1" y="349.0" width="5.1" height="3.2" fill="#b57b46"/><circle cx="206.7" cy="356.6" r="9.2" fill="#f1b08e"/><path d="M199.4 349.2l5.5 14.7" stroke="#fff" stroke-opacity=".85" stroke-width="1.29"/><path d="M204.0 349.2l5.5 14.7" stroke="#fff" stroke-opacity=".85" stroke-width="1.29"/><path d="M208.6 349.2l5.5 14.7" stroke="#fff" stroke-opacity=".85" stroke-width="1.29"/><rect x="204.2" y="345.4" width="5.2" height="3.2" fill="#b57b46"/><circle cx="230.3" cy="359.3" r="7.3" fill="#f1b08e"/><rect x="228.2" y="350.3" width="4.1" height="2.6" fill="#b57b46"/><circle cx="259.8" cy="351.6" r="9.9" fill="#8e4a34"/><path d="M251.3 347.1l2.8 -2.0l2.8 2.0l2.8 -2.0l2.8 2.0l2.8 -2.0l2.8 2.0" stroke="#fff" fill="none" stroke-width="1.19"/><path d="M251.3 352.1l2.8 -2.0l2.8 2.0l2.8 -2.0l2.8 2.0l2.8 -2.0l2.8 2.0" stroke="#fff" fill="none" stroke-width="1.19"/><path d="M251.3 356.5l2.8 -2.0l2.8 2.0l2.8 -2.0l2.8 2.0l2.8 -2.0l2.8 2.0" stroke="#fff" fill="none" stroke-width="1.19"/><rect x="257.0" y="339.5" width="5.6" height="3.5" fill="#b57b46"/><circle cx="275.2" cy="358.6" r="7.6" fill="#f1b08e"/><rect x="273.0" y="349.4" width="4.2" height="2.7" fill="#b57b46"/><circle cx="180.2" cy="375.3" r="7.4" fill="#a3553b"/><path d="M173.9 372.0l2.1 -1.5l2.1 1.5l2.1 -1.5l2.1 1.5l2.1 -1.5l2.1 1.5" stroke="#fff" fill="none" stroke-width="0.88"/><path d="M173.9 375.7l2.1 -1.5l2.1 1.5l2.1 -1.5l2.1 1.5l2.1 -1.5l2.1 1.5" stroke="#fff" fill="none" stroke-width="0.88"/><path d="M173.9 379.0l2.1 -1.5l2.1 1.5l2.1 -1.5l2.1 1.5l2.1 -1.5l2.1 1.5" stroke="#fff" fill="none" stroke-width="0.88"/><rect x="178.1" y="366.3" width="4.1" height="2.6" fill="#b57b46"/><circle cx="200.5" cy="368.9" r="7.4" fill="#c9c0bc"/><circle cx="197.6" cy="366.7" r="1.3" fill="#fff"/><circle cx="203.1" cy="366.4" r="1.3" fill="#fff"/><circle cx="200.5" cy="370.4" r="1.3" fill="#fff"/><circle cx="198.0" cy="372.6" r="1.3" fill="#fff"/><circle cx="203.5" cy="372.3" r="1.3" fill="#fff"/><rect x="198.5" y="359.9" width="4.1" height="2.6" fill="#b57b46"/><circle cx="220.4" cy="378.5" r="7.0" fill="#f1b08e"/><path d="M214.8 372.9l4.2 11.2" stroke="#fff" stroke-opacity=".85" stroke-width="0.98"/><path d="M218.3 372.9l4.2 11.2" stroke="#fff" stroke-opacity=".85" stroke-width="0.98"/><path d="M221.8 372.9l4.2 11.2" stroke="#fff" stroke-opacity=".85" stroke-width="0.98"/><rect x="218.5" y="370.0" width="3.9" height="2.5" fill="#b57b46"/><circle cx="249.9" cy="377.6" r="9.1" fill="#a9d3e0"/><path d="M242.7 370.3l5.4 14.5" stroke="#fff" stroke-opacity=".85" stroke-width="1.27"/><path d="M247.2 370.3l5.4 14.5" stroke="#fff" stroke-opacity=".85" stroke-width="1.27"/><path d="M251.7 370.3l5.4 14.5" stroke="#fff" stroke-opacity=".85" stroke-width="1.27"/><rect x="247.4" y="366.5" width="5.1" height="3.2" fill="#b57b46"/><circle cx="270.5" cy="369.9" r="7.3" fill="#8e4a34"/><path d="M264.3 366.7l2.0 -1.5l2.0 1.5l2.0 -1.5l2.0 1.5l2.0 -1.5l2.0 1.5" stroke="#fff" fill="none" stroke-width="0.87"/><path d="M264.3 370.3l2.0 -1.5l2.0 1.5l2.0 -1.5l2.0 1.5l2.0 -1.5l2.0 1.5" stroke="#fff" fill="none" stroke-width="0.87"/><path d="M264.3 373.6l2.0 -1.5l2.0 1.5l2.0 -1.5l2.0 1.5l2.0 -1.5l2.0 1.5" stroke="#fff" fill="none" stroke-width="0.87"/><rect x="268.5" y="361.1" width="4.1" height="2.5" fill="#b57b46"/><circle cx="285.8" cy="370.2" r="8.3" fill="#8e4a34"/><path d="M278.7 366.5l2.3 -1.7l2.3 1.7l2.3 -1.7l2.3 1.7l2.3 -1.7l2.3 1.7" stroke="#fff" fill="none" stroke-width="0.99"/><path d="M278.7 370.6l2.3 -1.7l2.3 1.7l2.3 -1.7l2.3 1.7l2.3 -1.7l2.3 1.7" stroke="#fff" fill="none" stroke-width="0.99"/><path d="M278.7 374.3l2.3 -1.7l2.3 1.7l2.3 -1.7l2.3 1.7l2.3 -1.7l2.3 1.7" stroke="#fff" fill="none" stroke-width="0.99"/><rect x="283.5" y="360.1" width="4.6" height="2.9" fill="#b57b46"/><circle cx="188.7" cy="388.1" r="7.6" fill="#f5d6a0"/><path d="M182.6 382.0l4.6 12.2" stroke="#fff" stroke-opacity=".85" stroke-width="1.07"/><path d="M186.4 382.0l4.6 12.2" stroke="#fff" stroke-opacity=".85" stroke-width="1.07"/><path d="M190.2 382.0l4.6 12.2" stroke="#fff" stroke-opacity=".85" stroke-width="1.07"/><rect x="186.6" y="378.8" width="4.3" height="2.7" fill="#b57b46"/><circle cx="210.1" cy="396.0" r="10.0" fill="#f5d6a0"/><path d="M202.0 387.9l6.0 16.1" stroke="#fff" stroke-opacity=".85" stroke-width="1.40"/><path d="M207.1 387.9l6.0 16.1" stroke="#fff" stroke-opacity=".85" stroke-width="1.40"/><path d="M212.1 387.9l6.0 16.1" stroke="#fff" stroke-opacity=".85" stroke-width="1.40"/><rect x="207.3" y="383.7" width="5.6" height="3.5" fill="#b57b46"/><circle cx="229.0" cy="392.7" r="9.3" fill="#7fa679"/><circle cx="229.0" cy="392.7" r="5.8" fill="none" stroke="#dbe8c8" stroke-width="1.31"/><circle cx="229.0" cy="392.7" r="2.3" fill="#dbe8c8"/><rect x="226.4" y="381.3" width="5.2" height="3.3" fill="#b57b46"/><circle cx="256.6" cy="393.6" r="6.7" fill="#cfe0b9"/><rect x="254.8" y="385.5" width="3.7" height="2.3" fill="#b57b46"/><circle cx="281.1" cy="393.2" r="8.4" fill="#f5dcaa"/><rect x="278.7" y="382.9" width="4.7" height="3.0" fill="#b57b46"/><circle cx="184.7" cy="408.0" r="7.4" fill="#a9d3e0"/><path d="M178.8 402.1l4.4 11.8" stroke="#fff" stroke-opacity=".85" stroke-width="1.03"/><path d="M182.5 402.1l4.4 11.8" stroke="#fff" stroke-opacity=".85" stroke-width="1.03"/><path d="M186.1 402.1l4.4 11.8" stroke="#fff" stroke-opacity=".85" stroke-width="1.03"/><rect x="182.6" y="399.0" width="4.1" height="2.6" fill="#b57b46"/><circle cx="196.3" cy="410.2" r="10.0" fill="#f1b08e"/><path d="M188.3 402.2l6.0 16.0" stroke="#fff" stroke-opacity=".85" stroke-width="1.40"/><path d="M193.3 402.2l6.0 16.0" stroke="#fff" stroke-opacity=".85" stroke-width="1.40"/><path d="M198.3 402.2l6.0 16.0" stroke="#fff" stroke-opacity=".85" stroke-width="1.40"/><rect x="193.5" y="398.0" width="5.6" height="3.5" fill="#b57b46"/><circle cx="227.4" cy="408.2" r="9.8" fill="#f2c4b0"/><rect x="224.6" y="396.2" width="5.5" height="3.4" fill="#b57b46"/><circle cx="247.7" cy="403.8" r="7.5" fill="#a9d3e0"/><path d="M241.7 397.8l4.5 12.0" stroke="#fff" stroke-opacity=".85" stroke-width="1.05"/><path d="M245.5 397.8l4.5 12.0" stroke="#fff" stroke-opacity=".85" stroke-width="1.05"/><path d="M249.2 397.8l4.5 12.0" stroke="#fff" stroke-opacity=".85" stroke-width="1.05"/><rect x="245.6" y="394.6" width="4.2" height="2.6" fill="#b57b46"/><circle cx="260.5" cy="403.6" r="7.7" fill="#a3553b"/><path d="M253.9 400.1l2.2 -1.5l2.2 1.5l2.2 -1.5l2.2 1.5l2.2 -1.5l2.2 1.5" stroke="#fff" fill="none" stroke-width="0.93"/><path d="M253.9 404.0l2.2 -1.5l2.2 1.5l2.2 -1.5l2.2 1.5l2.2 -1.5l2.2 1.5" stroke="#fff" fill="none" stroke-width="0.93"/><path d="M253.9 407.4l2.2 -1.5l2.2 1.5l2.2 -1.5l2.2 1.5l2.2 -1.5l2.2 1.5" stroke="#fff" fill="none" stroke-width="0.93"/><rect x="258.3" y="394.2" width="4.3" height="2.7" fill="#b57b46"/><circle cx="282.5" cy="413.8" r="8.5" fill="#7fa679"/><circle cx="282.5" cy="413.8" r="5.3" fill="none" stroke="#dbe8c8" stroke-width="1.20"/><circle cx="282.5" cy="413.8" r="2.1" fill="#dbe8c8"/><rect x="280.1" y="403.4" width="4.8" height="3.0" fill="#b57b46"/></g><clipPath id="c7"><rect x="275.6" y="342.5" width="84.5" height="53.3" rx="0"/></clipPath><g clip-path="url(#c7)"><rect x="275.6" y="342.5" width="84.5" height="53.3" fill="#f9c99b"/><circle cx="279.8" cy="344.7" r="3.2" fill="#c08a57"/><circle cx="296.5" cy="344.7" r="3.2" fill="#c08a57"/><circle cx="313.2" cy="344.7" r="3.2" fill="#c08a57"/><circle cx="329.9" cy="344.7" r="3.2" fill="#c08a57"/><circle cx="346.6" cy="344.7" r="3.2" fill="#c08a57"/><circle cx="363.3" cy="344.7" r="3.2" fill="#c08a57"/><circle cx="288.2" cy="352.9" r="3.2" fill="#c08a57"/><circle cx="304.9" cy="352.9" r="3.2" fill="#c08a57"/><circle cx="321.6" cy="352.9" r="3.2" fill="#c08a57"/><circle cx="338.2" cy="352.9" r="3.2" fill="#c08a57"/><circle cx="354.9" cy="352.9" r="3.2" fill="#c08a57"/><circle cx="279.8" cy="361.2" r="3.2" fill="#c08a57"/><circle cx="296.5" cy="361.2" r="3.2" fill="#c08a57"/><circle cx="313.2" cy="361.2" r="3.2" fill="#c08a57"/><circle cx="329.9" cy="361.2" r="3.2" fill="#c08a57"/><circle cx="346.6" cy="361.2" r="3.2" fill="#c08a57"/><circle cx="363.3" cy="361.2" r="3.2" fill="#c08a57"/><circle cx="288.2" cy="369.4" r="3.2" fill="#c08a57"/><circle cx="304.9" cy="369.4" r="3.2" fill="#c08a57"/><circle cx="321.6" cy="369.4" r="3.2" fill="#c08a57"/><circle cx="338.2" cy="369.4" r="3.2" fill="#c08a57"/><circle cx="354.9" cy="369.4" r="3.2" fill="#c08a57"/><circle cx="279.8" cy="377.7" r="3.2" fill="#c08a57"/><circle cx="296.5" cy="377.7" r="3.2" fill="#c08a57"/><circle cx="313.2" cy="377.7" r="3.2" fill="#c08a57"/><circle cx="329.9" cy="377.7" r="3.2" fill="#c08a57"/><circle cx="346.6" cy="377.7" r="3.2" fill="#c08a57"/><circle cx="363.3" cy="377.7" r="3.2" fill="#c08a57"/><circle cx="288.2" cy="385.9" r="3.2" fill="#c08a57"/><circle cx="304.9" cy="385.9" r="3.2" fill="#c08a57"/><circle cx="321.6" cy="385.9" r="3.2" fill="#c08a57"/><circle cx="338.2" cy="385.9" r="3.2" fill="#c08a57"/><circle cx="354.9" cy="385.9" r="3.2" fill="#c08a57"/><circle cx="279.8" cy="394.2" r="3.2" fill="#c08a57"/><circle cx="296.5" cy="394.2" r="3.2" fill="#c08a57"/><circle cx="313.2" cy="394.2" r="3.2" fill="#c08a57"/><circle cx="329.9" cy="394.2" r="3.2" fill="#c08a57"/><circle cx="346.6" cy="394.2" r="3.2" fill="#c08a57"/><circle cx="363.3" cy="394.2" r="3.2" fill="#c08a57"/></g><clipPath id="c8"><rect x="363.9" y="342.5" width="84.5" height="53.3" rx="0"/></clipPath><g clip-path="url(#c8)"><rect x="363.9" y="342.5" width="84.5" height="53.3" fill="#fdfbf8"/><circle cx="396.1" cy="354.8" r="0.9" fill="#e9a38a" fill-opacity=".7"/><circle cx="440.1" cy="363.1" r="0.9" fill="#f5dcaa" fill-opacity=".7"/><circle cx="387.9" cy="357.3" r="0.9" fill="#f5dcaa" fill-opacity=".7"/><circle cx="428.4" cy="343.0" r="0.9" fill="#e9a38a" fill-opacity=".7"/><circle cx="419.8" cy="387.2" r="0.9" fill="#a9d3e0" fill-opacity=".7"/><circle cx="444.1" cy="395.1" r="0.9" fill="#f5dcaa" fill-opacity=".7"/><circle cx="390.8" cy="356.2" r="0.9" fill="#f5dcaa" fill-opacity=".7"/><circle cx="416.4" cy="345.7" r="0.9" fill="#f5dcaa" fill-opacity=".7"/><circle cx="366.7" cy="388.7" r="0.9" fill="#f5dcaa" fill-opacity=".7"/><circle cx="382.1" cy="381.2" r="0.9" fill="#f5dcaa" fill-opacity=".7"/><circle cx="404.1" cy="372.1" r="0.9" fill="#e9a38a" fill-opacity=".7"/><circle cx="374.4" cy="391.2" r="0.9" fill="#f5dcaa" fill-opacity=".7"/><circle cx="440.0" cy="352.0" r="0.9" fill="#a9d3e0" fill-opacity=".7"/><circle cx="390.8" cy="375.5" r="0.9" fill="#f5dcaa" fill-opacity=".7"/><circle cx="412.7" cy="365.7" r="0.9" fill="#e9a38a" fill-opacity=".7"/><circle cx="389.4" cy="350.3" r="0.9" fill="#f5dcaa" fill-opacity=".7"/><circle cx="371.8" cy="343.6" r="0.9" fill="#f5dcaa" fill-opacity=".7"/><circle cx="405.6" cy="363.5" r="0.9" fill="#e9a38a" fill-opacity=".7"/><circle cx="371.2" cy="346.7" r="0.9" fill="#f5dcaa" fill-opacity=".7"/><circle cx="397.9" cy="370.9" r="0.9" fill="#a9d3e0" fill-opacity=".7"/><circle cx="409.5" cy="389.4" r="0.9" fill="#f5dcaa" fill-opacity=".7"/><circle cx="403.1" cy="351.9" r="0.9" fill="#e9a38a" fill-opacity=".7"/><circle cx="424.4" cy="380.9" r="0.9" fill="#f5dcaa" fill-opacity=".7"/><circle cx="437.8" cy="382.5" r="0.9" fill="#e9a38a" fill-opacity=".7"/><circle cx="447.3" cy="380.1" r="0.9" fill="#a9d3e0" fill-opacity=".7"/><circle cx="419.3" cy="382.5" r="0.9" fill="#f5dcaa" fill-opacity=".7"/><circle cx="408.6" cy="374.5" r="0.9" fill="#e9a38a" fill-opacity=".7"/><circle cx="445.2" cy="355.4" r="0.9" fill="#a9d3e0" fill-opacity=".7"/><circle cx="394.6" cy="367.0" r="0.9" fill="#f5dcaa" fill-opacity=".7"/><circle cx="398.6" cy="366.5" r="0.9" fill="#f5dcaa" fill-opacity=".7"/><circle cx="387.2" cy="353.8" r="0.9" fill="#f5dcaa" fill-opacity=".7"/><circle cx="384.9" cy="362.6" r="0.9" fill="#f5dcaa" fill-opacity=".7"/><circle cx="391.4" cy="391.8" r="0.9" fill="#a9d3e0" fill-opacity=".7"/><circle cx="430.5" cy="358.2" r="0.9" fill="#a9d3e0" fill-opacity=".7"/><circle cx="425.8" cy="353.9" r="0.9" fill="#e9a38a" fill-opacity=".7"/><circle cx="382.0" cy="354.5" r="0.9" fill="#a9d3e0" fill-opacity=".7"/><circle cx="420.2" cy="345.9" r="0.9" fill="#e9a38a" fill-opacity=".7"/><circle cx="358.2" cy="337.7" r="8.4" fill="#7fa679"/><circle cx="358.2" cy="337.7" r="5.2" fill="none" stroke="#dbe8c8" stroke-width="1.17"/><circle cx="358.2" cy="337.7" r="2.1" fill="#dbe8c8"/><rect x="355.9" y="327.6" width="4.7" height="2.9" fill="#b57b46"/><circle cx="375.2" cy="338.4" r="7.0" fill="#f5d6a0"/><path d="M369.6 332.8l4.2 11.3" stroke="#fff" stroke-opacity=".85" stroke-width="0.98"/><path d="M373.1 332.8l4.2 11.3" stroke="#fff" stroke-opacity=".85" stroke-width="0.98"/><path d="M376.6 332.8l4.2 11.3" stroke="#fff" stroke-opacity=".85" stroke-width="0.98"/><rect x="373.2" y="329.8" width="3.9" height="2.5" fill="#b57b46"/><circle cx="402.6" cy="332.3" r="9.3" fill="#a3553b"/><path d="M394.7 328.1l2.6 -1.9l2.6 1.9l2.6 -1.9l2.6 1.9l2.6 -1.9l2.6 1.9" stroke="#fff" fill="none" stroke-width="1.12"/><path d="M394.7 332.8l2.6 -1.9l2.6 1.9l2.6 -1.9l2.6 1.9l2.6 -1.9l2.6 1.9" stroke="#fff" fill="none" stroke-width="1.12"/><path d="M394.7 337.0l2.6 -1.9l2.6 1.9l2.6 -1.9l2.6 1.9l2.6 -1.9l2.6 1.9" stroke="#fff" fill="none" stroke-width="1.12"/><rect x="400.0" y="320.9" width="5.2" height="3.3" fill="#b57b46"/><circle cx="425.6" cy="340.3" r="6.7" fill="#c48b4f"/><rect x="418.8" y="337.9" width="13.4" height="4.7" fill="#f6eadb"/><rect x="423.7" y="332.1" width="3.8" height="2.4" fill="#b57b46"/><circle cx="443.3" cy="336.4" r="8.9" fill="#c48b4f"/><rect x="434.4" y="333.2" width="17.8" height="6.2" fill="#f6eadb"/><rect x="440.8" y="325.5" width="5.0" height="3.1" fill="#b57b46"/><circle cx="461.5" cy="342.2" r="10.0" fill="#f1b08e"/><path d="M453.0 337.7l2.8 -2.0l2.8 2.0l2.8 -2.0l2.8 2.0l2.8 -2.0l2.8 2.0" stroke="#fff" fill="none" stroke-width="1.20"/><path d="M453.0 342.7l2.8 -2.0l2.8 2.0l2.8 -2.0l2.8 2.0l2.8 -2.0l2.8 2.0" stroke="#fff" fill="none" stroke-width="1.20"/><path d="M453.0 347.2l2.8 -2.0l2.8 2.0l2.8 -2.0l2.8 2.0l2.8 -2.0l2.8 2.0" stroke="#fff" fill="none" stroke-width="1.20"/><rect x="458.7" y="329.9" width="5.6" height="3.5" fill="#b57b46"/><circle cx="370.2" cy="356.9" r="7.4" fill="#a3553b"/><path d="M363.9 353.6l2.1 -1.5l2.1 1.5l2.1 -1.5l2.1 1.5l2.1 -1.5l2.1 1.5" stroke="#fff" fill="none" stroke-width="0.88"/><path d="M363.9 357.3l2.1 -1.5l2.1 1.5l2.1 -1.5l2.1 1.5l2.1 -1.5l2.1 1.5" stroke="#fff" fill="none" stroke-width="0.88"/><path d="M363.9 360.6l2.1 -1.5l2.1 1.5l2.1 -1.5l2.1 1.5l2.1 -1.5l2.1 1.5" stroke="#fff" fill="none" stroke-width="0.88"/><rect x="368.1" y="347.9" width="4.1" height="2.6" fill="#b57b46"/><circle cx="386.4" cy="351.4" r="8.0" fill="#f1b08e"/><path d="M380.0 345.1l4.8 12.7" stroke="#fff" stroke-opacity=".85" stroke-width="1.11"/><path d="M384.0 345.1l4.8 12.7" stroke="#fff" stroke-opacity=".85" stroke-width="1.11"/><path d="M388.0 345.1l4.8 12.7" stroke="#fff" stroke-opacity=".85" stroke-width="1.11"/><rect x="384.2" y="341.7" width="4.5" height="2.8" fill="#b57b46"/><circle cx="414.7" cy="351.7" r="8.7" fill="#cfe0b9"/><rect x="412.3" y="341.1" width="4.9" height="3.0" fill="#b57b46"/><circle cx="434.8" cy="356.9" r="7.5" fill="#cfe0b9"/><rect x="432.8" y="347.8" width="4.2" height="2.6" fill="#b57b46"/><circle cx="453.3" cy="351.1" r="7.3" fill="#a9d3e0"/><path d="M447.5 345.3l4.4 11.6" stroke="#fff" stroke-opacity=".85" stroke-width="1.02"/><path d="M451.1 345.3l4.4 11.6" stroke="#fff" stroke-opacity=".85" stroke-width="1.02"/><path d="M454.7 345.3l4.4 11.6" stroke="#fff" stroke-opacity=".85" stroke-width="1.02"/><rect x="451.3" y="342.3" width="4.1" height="2.5" fill="#b57b46"/><circle cx="352.2" cy="372.7" r="9.9" fill="#8e4a34"/><path d="M343.8 368.2l2.8 -2.0l2.8 2.0l2.8 -2.0l2.8 2.0l2.8 -2.0l2.8 2.0" stroke="#fff" fill="none" stroke-width="1.19"/><path d="M343.8 373.2l2.8 -2.0l2.8 2.0l2.8 -2.0l2.8 2.0l2.8 -2.0l2.8 2.0" stroke="#fff" fill="none" stroke-width="1.19"/><path d="M343.8 377.6l2.8 -2.0l2.8 2.0l2.8 -2.0l2.8 2.0l2.8 -2.0l2.8 2.0" stroke="#fff" fill="none" stroke-width="1.19"/><rect x="349.4" y="360.6" width="5.6" height="3.5" fill="#b57b46"/><circle cx="380.0" cy="379.0" r="9.5" fill="#f2c4b0"/><rect x="377.3" y="367.4" width="5.3" height="3.3" fill="#b57b46"/><circle cx="402.8" cy="374.4" r="8.1" fill="#a9d3e0"/><path d="M396.4 367.9l4.8 12.9" stroke="#fff" stroke-opacity=".85" stroke-width="1.13"/><path d="M400.4 367.9l4.8 12.9" stroke="#fff" stroke-opacity=".85" stroke-width="1.13"/><path d="M404.5 367.9l4.8 12.9" stroke="#fff" stroke-opacity=".85" stroke-width="1.13"/><rect x="400.6" y="364.5" width="4.5" height="2.8" fill="#b57b46"/><circle cx="425.9" cy="373.7" r="8.1" fill="#8e4a34"/><path d="M419.0 370.1l2.3 -1.6l2.3 1.6l2.3 -1.6l2.3 1.6l2.3 -1.6l2.3 1.6" stroke="#fff" fill="none" stroke-width="0.97"/><path d="M419.0 374.2l2.3 -1.6l2.3 1.6l2.3 -1.6l2.3 1.6l2.3 -1.6l2.3 1.6" stroke="#fff" fill="none" stroke-width="0.97"/><path d="M419.0 377.8l2.3 -1.6l2.3 1.6l2.3 -1.6l2.3 1.6l2.3 -1.6l2.3 1.6" stroke="#fff" fill="none" stroke-width="0.97"/><rect x="423.6" y="363.8" width="4.5" height="2.8" fill="#b57b46"/><circle cx="437.4" cy="374.2" r="8.0" fill="#f1b08e"/><path d="M430.6 370.6l2.2 -1.6l2.2 1.6l2.2 -1.6l2.2 1.6l2.2 -1.6l2.2 1.6" stroke="#fff" fill="none" stroke-width="0.96"/><path d="M430.6 374.6l2.2 -1.6l2.2 1.6l2.2 -1.6l2.2 1.6l2.2 -1.6l2.2 1.6" stroke="#fff" fill="none" stroke-width="0.96"/><path d="M430.6 378.2l2.2 -1.6l2.2 1.6l2.2 -1.6l2.2 1.6l2.2 -1.6l2.2 1.6" stroke="#fff" fill="none" stroke-width="0.96"/><rect x="435.1" y="364.4" width="4.5" height="2.8" fill="#b57b46"/><circle cx="463.7" cy="371.2" r="7.4" fill="#f2c4b0"/><rect x="461.7" y="362.1" width="4.2" height="2.6" fill="#b57b46"/><circle cx="368.8" cy="391.3" r="7.5" fill="#c48b4f"/><rect x="361.3" y="388.7" width="15.0" height="5.2" fill="#f6eadb"/><rect x="366.7" y="382.2" width="4.2" height="2.6" fill="#b57b46"/><circle cx="383.4" cy="388.8" r="8.4" fill="#c48b4f"/><rect x="374.9" y="385.9" width="16.8" height="5.9" fill="#f6eadb"/><rect x="381.0" y="378.6" width="4.7" height="2.9" fill="#b57b46"/><circle cx="410.0" cy="391.9" r="9.2" fill="#a9d3e0"/><path d="M402.6 384.5l5.5 14.7" stroke="#fff" stroke-opacity=".85" stroke-width="1.28"/><path d="M407.2 384.5l5.5 14.7" stroke="#fff" stroke-opacity=".85" stroke-width="1.28"/><path d="M411.8 384.5l5.5 14.7" stroke="#fff" stroke-opacity=".85" stroke-width="1.28"/><rect x="407.4" y="380.7" width="5.1" height="3.2" fill="#b57b46"/><circle cx="427.1" cy="390.8" r="9.3" fill="#f1b08e"/><path d="M419.7 383.4l5.6 14.8" stroke="#fff" stroke-opacity=".85" stroke-width="1.30"/><path d="M424.3 383.4l5.6 14.8" stroke="#fff" stroke-opacity=".85" stroke-width="1.30"/><path d="M428.9 383.4l5.6 14.8" stroke="#fff" stroke-opacity=".85" stroke-width="1.30"/><rect x="424.5" y="379.5" width="5.2" height="3.2" fill="#b57b46"/><circle cx="454.8" cy="386.0" r="8.0" fill="#7fa679"/><circle cx="454.8" cy="386.0" r="5.0" fill="none" stroke="#dbe8c8" stroke-width="1.12"/><circle cx="454.8" cy="386.0" r="2.0" fill="#dbe8c8"/><rect x="452.6" y="376.3" width="4.5" height="2.8" fill="#b57b46"/><circle cx="358.2" cy="414.2" r="7.7" fill="#f5d6a0"/><path d="M352.0 408.0l4.6 12.4" stroke="#fff" stroke-opacity=".85" stroke-width="1.08"/><path d="M355.8 408.0l4.6 12.4" stroke="#fff" stroke-opacity=".85" stroke-width="1.08"/><path d="M359.7 408.0l4.6 12.4" stroke="#fff" stroke-opacity=".85" stroke-width="1.08"/><rect x="356.0" y="404.8" width="4.3" height="2.7" fill="#b57b46"/><circle cx="377.0" cy="413.0" r="6.9" fill="#c9c0bc"/><circle cx="374.2" cy="410.9" r="1.2" fill="#fff"/><circle cx="379.4" cy="410.6" r="1.2" fill="#fff"/><circle cx="377.0" cy="414.4" r="1.2" fill="#fff"/><circle cx="374.6" cy="416.5" r="1.2" fill="#fff"/><circle cx="379.8" cy="416.1" r="1.2" fill="#fff"/><rect x="375.1" y="404.6" width="3.9" height="2.4" fill="#b57b46"/><circle cx="398.2" cy="405.0" r="8.2" fill="#f1b08e"/><rect x="395.9" y="395.0" width="4.6" height="2.9" fill="#b57b46"/><circle cx="425.8" cy="403.8" r="6.7" fill="#f5dcaa"/><rect x="424.0" y="395.7" width="3.7" height="2.3" fill="#b57b46"/><circle cx="439.4" cy="403.2" r="6.8" fill="#f1b08e"/><path d="M433.6 400.1l1.9 -1.4l1.9 1.4l1.9 -1.4l1.9 1.4l1.9 -1.4l1.9 1.4" stroke="#fff" fill="none" stroke-width="0.82"/><path d="M433.6 403.5l1.9 -1.4l1.9 1.4l1.9 -1.4l1.9 1.4l1.9 -1.4l1.9 1.4" stroke="#fff" fill="none" stroke-width="0.82"/><path d="M433.6 406.6l1.9 -1.4l1.9 1.4l1.9 -1.4l1.9 1.4l1.9 -1.4l1.9 1.4" stroke="#fff" fill="none" stroke-width="0.82"/><rect x="437.5" y="394.9" width="3.8" height="2.4" fill="#b57b46"/><circle cx="457.8" cy="403.2" r="7.1" fill="#f5dcaa"/><rect x="455.8" y="394.5" width="4.0" height="2.5" fill="#b57b46"/></g><rect x="99.0" y="399.6" width="84.5" height="53" rx="10" fill="#fde6c7"/><rect x="187.3" y="399.6" width="84.5" height="53" rx="10" fill="#d7eef0"/><rect x="275.6" y="399.6" width="84.5" height="53" fill="#18535b"/><rect x="363.9" y="399.6" width="84.5" height="53" fill="#6a8a67"/><clipPath id="c9"><rect x="99.0" y="456.8" width="84.5" height="53.5" rx="11"/></clipPath><g clip-path="url(#c9)"><rect x="99.0" y="456.8" width="84.5" height="53.5" fill="#b4cfa5"/><circle cx="104.2" cy="459.0" r="3.1" fill="#5b7a58"/><circle cx="104.2" cy="508.1" r="3.1" fill="#5b7a58"/><circle cx="120.5" cy="459.0" r="3.1" fill="#5b7a58"/><circle cx="120.5" cy="508.1" r="3.1" fill="#5b7a58"/><circle cx="136.8" cy="459.0" r="3.1" fill="#5b7a58"/><circle cx="136.8" cy="508.1" r="3.1" fill="#5b7a58"/><circle cx="153.1" cy="459.0" r="3.1" fill="#5b7a58"/><circle cx="153.1" cy="508.1" r="3.1" fill="#5b7a58"/><circle cx="169.4" cy="459.0" r="3.1" fill="#5b7a58"/><circle cx="169.4" cy="508.1" r="3.1" fill="#5b7a58"/><circle cx="101.2" cy="475.3" r="3.1" fill="#5b7a58"/><circle cx="181.3" cy="475.3" r="3.1" fill="#5b7a58"/><circle cx="101.2" cy="491.6" r="3.1" fill="#5b7a58"/><circle cx="181.3" cy="491.6" r="3.1" fill="#5b7a58"/></g><rect x="103.2" y="461.0" width="76.1" height="45.1" rx="8" fill="#fff"/><rect x="187.3" y="456.8" width="84.5" height="53.5" rx="11" fill="#b57b46"/><rect x="191.5" y="461.0" width="76.1" height="45.1" rx="8" fill="#fff"/><clipPath id="c10"><rect x="275.6" y="456.8" width="84.5" height="53.5" rx="0"/></clipPath><g clip-path="url(#c10)"><rect x="275.6" y="456.8" width="84.5" height="53.5" fill="#5a7354"/><circle cx="275.5" cy="452.0" r="3.4" fill="#efb9a3"/><rect x="274.5" y="447.8" width="2.0" height="1.4" fill="#efb9a3"/><circle cx="280.8" cy="451.9" r="2.6" fill="#f2b59c"/><rect x="280.0" y="448.6" width="1.6" height="1.1" fill="#f2b59c"/><circle cx="292.2" cy="454.0" r="2.5" fill="#a05a45"/><rect x="291.5" y="450.9" width="1.5" height="1.0" fill="#a05a45"/><circle cx="295.8" cy="452.1" r="2.7" fill="#f3dcae"/><rect x="295.0" y="448.8" width="1.6" height="1.1" fill="#f3dcae"/><circle cx="306.6" cy="454.3" r="2.6" fill="#f2b59c"/><rect x="305.8" y="451.0" width="1.6" height="1.0" fill="#f2b59c"/><circle cx="317.1" cy="456.5" r="3.2" fill="#f0a98a"/><rect x="316.1" y="452.5" width="1.9" height="1.3" fill="#f0a98a"/><circle cx="322.8" cy="452.4" r="3.0" fill="#f0a98a"/><rect x="321.9" y="448.7" width="1.8" height="1.2" fill="#f0a98a"/><circle cx="330.3" cy="452.2" r="2.7" fill="#8fb08a"/><rect x="329.5" y="448.9" width="1.6" height="1.1" fill="#8fb08a"/><circle cx="340.6" cy="455.4" r="3.2" fill="#f3dcae"/><rect x="339.6" y="451.3" width="1.9" height="1.3" fill="#f3dcae"/><path d="M338.0 455.4h5.2" stroke="#a9573c" stroke-opacity=".8" fill="none" stroke-width="0.71"/><circle cx="349.5" cy="454.4" r="3.1" fill="#b5d2a3"/><rect x="348.5" y="450.6" width="1.8" height="1.2" fill="#b5d2a3"/><circle cx="358.4" cy="452.2" r="3.3" fill="#f3dcae"/><rect x="357.4" y="448.1" width="2.0" height="1.3" fill="#f3dcae"/><circle cx="365.8" cy="453.9" r="3.2" fill="#8fb08a"/><rect x="364.8" y="450.0" width="1.9" height="1.3" fill="#8fb08a"/><circle cx="275.8" cy="461.6" r="3.5" fill="#f3dcae"/><rect x="274.8" y="457.2" width="2.1" height="1.4" fill="#f3dcae"/><circle cx="285.4" cy="463.9" r="3.5" fill="#f3dcae"/><rect x="284.4" y="459.5" width="2.1" height="1.4" fill="#f3dcae"/><circle cx="295.7" cy="462.5" r="3.7" fill="#f2b59c"/><rect x="294.6" y="457.9" width="2.2" height="1.5" fill="#f2b59c"/><circle cx="303.3" cy="459.5" r="3.3" fill="#b5d2a3"/><rect x="302.3" y="455.3" width="2.0" height="1.3" fill="#b5d2a3"/><path d="M300.7 459.5h5.3" stroke="#fff" stroke-opacity=".8" fill="none" stroke-width="0.73"/><circle cx="311.5" cy="459.1" r="2.8" fill="#f2b59c"/><rect x="310.7" y="455.6" width="1.7" height="1.1" fill="#f2b59c"/><path d="M309.3 459.1h4.5" stroke="#fff" stroke-opacity=".8" fill="none" stroke-width="0.62"/><circle cx="319.4" cy="459.9" r="3.4" fill="#c9dcb4"/><rect x="318.3" y="455.6" width="2.1" height="1.4" fill="#c9dcb4"/><circle cx="329.4" cy="459.1" r="2.9" fill="#f2b59c"/><rect x="328.6" y="455.5" width="1.7" height="1.1" fill="#f2b59c"/><circle cx="334.3" cy="459.8" r="2.6" fill="#8fb08a"/><rect x="333.6" y="456.6" width="1.5" height="1.0" fill="#8fb08a"/><circle cx="343.6" cy="460.1" r="2.8" fill="#b5d2a3"/><rect x="342.8" y="456.6" width="1.7" height="1.1" fill="#b5d2a3"/><path d="M341.4 460.1h4.5" stroke="#fff" stroke-opacity=".8" fill="none" stroke-width="0.61"/><circle cx="354.3" cy="460.4" r="3.4" fill="#f0a98a"/><rect x="353.2" y="456.1" width="2.1" height="1.4" fill="#f0a98a"/><circle cx="359.7" cy="461.8" r="2.9" fill="#ddd3cc"/><rect x="358.9" y="458.2" width="1.7" height="1.1" fill="#ddd3cc"/><circle cx="271.4" cy="468.4" r="2.6" fill="#f3dcae"/><rect x="270.6" y="465.2" width="1.5" height="1.0" fill="#f3dcae"/><circle cx="279.2" cy="470.1" r="3.4" fill="#a8cfdb"/><rect x="278.2" y="465.9" width="2.0" height="1.4" fill="#a8cfdb"/><circle cx="291.4" cy="469.8" r="3.2" fill="#f0a98a"/><rect x="290.4" y="465.8" width="1.9" height="1.3" fill="#f0a98a"/><path d="M288.8 469.8h5.1" stroke="#fff" stroke-opacity=".8" fill="none" stroke-width="0.70"/><circle cx="300.6" cy="469.4" r="3.1" fill="#f0a98a"/><rect x="299.7" y="465.5" width="1.9" height="1.2" fill="#f0a98a"/><circle cx="304.5" cy="469.9" r="3.1" fill="#f3dcae"/><rect x="303.5" y="466.0" width="1.9" height="1.2" fill="#f3dcae"/><circle cx="312.9" cy="470.0" r="3.6" fill="#c9dcb4"/><rect x="311.8" y="465.5" width="2.2" height="1.5" fill="#c9dcb4"/><circle cx="322.4" cy="470.7" r="3.6" fill="#b5d2a3"/><rect x="321.3" y="466.2" width="2.1" height="1.4" fill="#b5d2a3"/><circle cx="330.9" cy="467.6" r="2.6" fill="#ddd3cc"/><rect x="330.2" y="464.3" width="1.6" height="1.0" fill="#ddd3cc"/><circle cx="338.9" cy="468.2" r="2.6" fill="#f4c8b5"/><rect x="338.1" y="464.9" width="1.6" height="1.1" fill="#f4c8b5"/><circle cx="350.2" cy="470.3" r="2.8" fill="#a05a45"/><rect x="349.3" y="466.8" width="1.7" height="1.1" fill="#a05a45"/><circle cx="356.0" cy="467.7" r="3.0" fill="#f4c8b5"/><rect x="355.1" y="464.0" width="1.8" height="1.2" fill="#f4c8b5"/><circle cx="363.6" cy="466.5" r="3.2" fill="#c9dcb4"/><rect x="362.6" y="462.5" width="1.9" height="1.3" fill="#c9dcb4"/><circle cx="276.5" cy="478.6" r="3.4" fill="#f3dcae"/><rect x="275.4" y="474.3" width="2.1" height="1.4" fill="#f3dcae"/><path d="M273.7 478.6h5.5" stroke="#a9573c" stroke-opacity=".8" fill="none" stroke-width="0.76"/><circle cx="283.8" cy="477.3" r="3.0" fill="#b5d2a3"/><rect x="282.9" y="473.5" width="1.8" height="1.2" fill="#b5d2a3"/><circle cx="293.7" cy="474.8" r="3.6" fill="#a05a45"/><rect x="292.6" y="470.3" width="2.1" height="1.4" fill="#a05a45"/><circle cx="303.2" cy="477.5" r="2.6" fill="#efb9a3"/><rect x="302.4" y="474.3" width="1.5" height="1.0" fill="#efb9a3"/><circle cx="313.1" cy="478.4" r="3.4" fill="#f2b59c"/><rect x="312.1" y="474.2" width="2.0" height="1.3" fill="#f2b59c"/><circle cx="320.0" cy="474.2" r="3.7" fill="#a8cfdb"/><rect x="318.9" y="469.6" width="2.2" height="1.5" fill="#a8cfdb"/><circle cx="328.7" cy="478.0" r="2.6" fill="#a05a45"/><rect x="327.9" y="474.7" width="1.6" height="1.0" fill="#a05a45"/><circle cx="335.5" cy="477.9" r="3.0" fill="#b5d2a3"/><rect x="334.6" y="474.1" width="1.8" height="1.2" fill="#b5d2a3"/><circle cx="344.5" cy="477.5" r="2.8" fill="#f2b59c"/><rect x="343.6" y="474.0" width="1.7" height="1.1" fill="#f2b59c"/><circle cx="351.3" cy="478.4" r="3.1" fill="#efb9a3"/><rect x="350.3" y="474.5" width="1.9" height="1.2" fill="#efb9a3"/><circle cx="359.8" cy="477.9" r="3.3" fill="#f0a98a"/><rect x="358.8" y="473.8" width="2.0" height="1.3" fill="#f0a98a"/><circle cx="273.2" cy="483.4" r="2.6" fill="#ddd3cc"/><rect x="272.5" y="480.1" width="1.6" height="1.0" fill="#ddd3cc"/><circle cx="279.1" cy="482.2" r="2.8" fill="#efb9a3"/><rect x="278.2" y="478.6" width="1.7" height="1.1" fill="#efb9a3"/><circle cx="288.2" cy="485.5" r="2.9" fill="#f2b59c"/><rect x="287.3" y="482.0" width="1.7" height="1.1" fill="#f2b59c"/><path d="M285.9 485.5h4.6" stroke="#fff" stroke-opacity=".8" fill="none" stroke-width="0.63"/><circle cx="296.2" cy="482.1" r="3.0" fill="#a05a45"/><rect x="295.3" y="478.3" width="1.8" height="1.2" fill="#a05a45"/><path d="M293.8 482.1h4.8" stroke="#fff" stroke-opacity=".8" fill="none" stroke-width="0.65"/><circle cx="308.5" cy="482.0" r="3.2" fill="#f0a98a"/><rect x="307.6" y="478.0" width="1.9" height="1.3" fill="#f0a98a"/><circle cx="316.9" cy="485.9" r="3.2" fill="#f4c8b5"/><rect x="315.9" y="481.9" width="1.9" height="1.3" fill="#f4c8b5"/><circle cx="324.1" cy="481.7" r="3.0" fill="#a05a45"/><rect x="323.2" y="478.0" width="1.8" height="1.2" fill="#a05a45"/><circle cx="332.8" cy="485.8" r="3.4" fill="#f2b59c"/><rect x="331.8" y="481.6" width="2.0" height="1.4" fill="#f2b59c"/><circle cx="339.3" cy="482.7" r="3.3" fill="#c9dcb4"/><rect x="338.3" y="478.6" width="2.0" height="1.3" fill="#c9dcb4"/><circle cx="348.3" cy="485.3" r="2.5" fill="#f3dcae"/><rect x="347.6" y="482.1" width="1.5" height="1.0" fill="#f3dcae"/><circle cx="357.3" cy="485.7" r="3.4" fill="#f2b59c"/><rect x="356.2" y="481.5" width="2.0" height="1.4" fill="#f2b59c"/><path d="M354.5 485.7h5.4" stroke="#fff" stroke-opacity=".8" fill="none" stroke-width="0.75"/><circle cx="364.7" cy="483.8" r="3.1" fill="#a8cfdb"/><rect x="363.7" y="479.8" width="1.9" height="1.3" fill="#a8cfdb"/><circle cx="276.5" cy="492.3" r="3.6" fill="#f2b59c"/><rect x="275.4" y="487.8" width="2.1" height="1.4" fill="#f2b59c"/><circle cx="284.4" cy="489.9" r="2.6" fill="#8fb08a"/><rect x="283.6" y="486.6" width="1.6" height="1.1" fill="#8fb08a"/><circle cx="295.3" cy="492.9" r="2.5" fill="#f2b59c"/><rect x="294.6" y="489.7" width="1.5" height="1.0" fill="#f2b59c"/><circle cx="303.6" cy="490.3" r="2.6" fill="#b5d2a3"/><rect x="302.9" y="487.0" width="1.6" height="1.0" fill="#b5d2a3"/><circle cx="309.2" cy="488.5" r="3.1" fill="#a8cfdb"/><rect x="308.3" y="484.7" width="1.8" height="1.2" fill="#a8cfdb"/><circle cx="319.8" cy="493.3" r="2.9" fill="#ddd3cc"/><rect x="319.0" y="489.6" width="1.8" height="1.2" fill="#ddd3cc"/><circle cx="329.2" cy="488.6" r="3.0" fill="#8fb08a"/><rect x="328.3" y="484.8" width="1.8" height="1.2" fill="#8fb08a"/><circle cx="337.6" cy="488.6" r="2.6" fill="#f2b59c"/><rect x="336.8" y="485.3" width="1.6" height="1.0" fill="#f2b59c"/><circle cx="343.5" cy="492.7" r="2.7" fill="#8fb08a"/><rect x="342.7" y="489.2" width="1.6" height="1.1" fill="#8fb08a"/><circle cx="354.5" cy="490.6" r="2.5" fill="#f3dcae"/><rect x="353.8" y="487.6" width="1.5" height="1.0" fill="#f3dcae"/><circle cx="360.0" cy="490.5" r="3.6" fill="#8fb08a"/><rect x="358.9" y="486.0" width="2.2" height="1.5" fill="#8fb08a"/><circle cx="272.7" cy="498.4" r="3.7" fill="#ddd3cc"/><rect x="271.6" y="493.7" width="2.2" height="1.5" fill="#ddd3cc"/><circle cx="281.9" cy="500.4" r="2.8" fill="#c9dcb4"/><rect x="281.1" y="496.9" width="1.7" height="1.1" fill="#c9dcb4"/><path d="M279.7 500.4h4.5" stroke="#a9573c" stroke-opacity=".8" fill="none" stroke-width="0.61"/><circle cx="288.2" cy="498.0" r="2.9" fill="#a8cfdb"/><rect x="287.3" y="494.3" width="1.8" height="1.2" fill="#a8cfdb"/><circle cx="296.8" cy="499.7" r="2.8" fill="#f0a98a"/><rect x="296.0" y="496.3" width="1.7" height="1.1" fill="#f0a98a"/><circle cx="304.3" cy="497.1" r="2.7" fill="#efb9a3"/><rect x="303.4" y="493.6" width="1.6" height="1.1" fill="#efb9a3"/><circle cx="313.4" cy="498.3" r="2.8" fill="#8fb08a"/><rect x="312.5" y="494.8" width="1.7" height="1.1" fill="#8fb08a"/><circle cx="321.3" cy="496.8" r="2.8" fill="#b5d2a3"/><rect x="320.4" y="493.3" width="1.7" height="1.1" fill="#b5d2a3"/><circle cx="332.6" cy="499.1" r="3.6" fill="#8fb08a"/><rect x="331.5" y="494.6" width="2.1" height="1.4" fill="#8fb08a"/><circle cx="340.1" cy="499.9" r="2.6" fill="#f3dcae"/><rect x="339.3" y="496.7" width="1.5" height="1.0" fill="#f3dcae"/><circle cx="347.5" cy="497.8" r="3.1" fill="#f2b59c"/><rect x="346.6" y="493.9" width="1.9" height="1.2" fill="#f2b59c"/><circle cx="359.5" cy="500.3" r="3.4" fill="#a8cfdb"/><rect x="358.5" y="496.0" width="2.1" height="1.4" fill="#a8cfdb"/><circle cx="365.3" cy="499.0" r="2.8" fill="#a05a45"/><rect x="364.4" y="495.5" width="1.7" height="1.1" fill="#a05a45"/><circle cx="276.1" cy="504.9" r="3.5" fill="#f2b59c"/><rect x="275.0" y="500.5" width="2.1" height="1.4" fill="#f2b59c"/><circle cx="287.7" cy="503.3" r="2.9" fill="#f2b59c"/><rect x="286.9" y="499.7" width="1.7" height="1.1" fill="#f2b59c"/><path d="M285.5 503.3h4.6" stroke="#fff" stroke-opacity=".8" fill="none" stroke-width="0.63"/><circle cx="292.6" cy="505.6" r="3.3" fill="#f0a98a"/><rect x="291.6" y="501.5" width="2.0" height="1.3" fill="#f0a98a"/><circle cx="303.4" cy="507.6" r="2.5" fill="#a05a45"/><rect x="302.6" y="504.4" width="1.5" height="1.0" fill="#a05a45"/><circle cx="312.5" cy="506.6" r="2.6" fill="#ddd3cc"/><rect x="311.8" y="503.3" width="1.6" height="1.1" fill="#ddd3cc"/><circle cx="321.4" cy="506.7" r="3.2" fill="#ddd3cc"/><rect x="320.4" y="502.7" width="1.9" height="1.3" fill="#ddd3cc"/><path d="M318.8 506.7h5.1" stroke="#fff" stroke-opacity=".8" fill="none" stroke-width="0.70"/><circle cx="326.3" cy="504.1" r="3.0" fill="#b5d2a3"/><rect x="325.4" y="500.4" width="1.8" height="1.2" fill="#b5d2a3"/><circle cx="334.7" cy="504.4" r="3.3" fill="#c9dcb4"/><rect x="333.7" y="500.3" width="2.0" height="1.3" fill="#c9dcb4"/><circle cx="343.0" cy="503.5" r="3.3" fill="#a8cfdb"/><rect x="342.0" y="499.3" width="2.0" height="1.3" fill="#a8cfdb"/><path d="M340.3 503.5h5.3" stroke="#fff" stroke-opacity=".8" fill="none" stroke-width="0.72"/><circle cx="351.9" cy="503.0" r="3.4" fill="#f4c8b5"/><rect x="350.9" y="498.8" width="2.0" height="1.3" fill="#f4c8b5"/><circle cx="362.0" cy="506.6" r="3.7" fill="#f0a98a"/><rect x="360.8" y="501.9" width="2.2" height="1.5" fill="#f0a98a"/><circle cx="270.6" cy="511.5" r="3.4" fill="#f0a98a"/><rect x="269.6" y="507.3" width="2.0" height="1.3" fill="#f0a98a"/><circle cx="283.8" cy="511.9" r="3.1" fill="#c9dcb4"/><rect x="282.9" y="508.1" width="1.8" height="1.2" fill="#c9dcb4"/><circle cx="287.6" cy="514.9" r="3.7" fill="#efb9a3"/><rect x="286.5" y="510.3" width="2.2" height="1.5" fill="#efb9a3"/><circle cx="298.9" cy="512.2" r="3.6" fill="#8fb08a"/><rect x="297.8" y="507.7" width="2.2" height="1.4" fill="#8fb08a"/><circle cx="304.6" cy="513.5" r="3.1" fill="#f2b59c"/><rect x="303.6" y="509.6" width="1.8" height="1.2" fill="#f2b59c"/><circle cx="316.6" cy="512.8" r="3.3" fill="#f2b59c"/><rect x="315.6" y="508.7" width="2.0" height="1.3" fill="#f2b59c"/><path d="M313.9 512.8h5.3" stroke="#fff" stroke-opacity=".8" fill="none" stroke-width="0.73"/><circle cx="321.2" cy="513.5" r="3.3" fill="#f4c8b5"/><rect x="320.2" y="509.4" width="2.0" height="1.3" fill="#f4c8b5"/><circle cx="332.4" cy="512.9" r="2.6" fill="#c9dcb4"/><rect x="331.7" y="509.6" width="1.6" height="1.0" fill="#c9dcb4"/><circle cx="338.5" cy="510.6" r="3.7" fill="#f2b59c"/><rect x="337.4" y="506.0" width="2.2" height="1.5" fill="#f2b59c"/><circle cx="350.9" cy="511.1" r="3.2" fill="#8fb08a"/><rect x="349.9" y="507.1" width="1.9" height="1.3" fill="#8fb08a"/><circle cx="357.3" cy="511.2" r="3.4" fill="#f4c8b5"/><rect x="356.2" y="507.0" width="2.0" height="1.3" fill="#f4c8b5"/><circle cx="364.6" cy="512.3" r="2.5" fill="#ddd3cc"/><rect x="363.8" y="509.2" width="1.5" height="1.0" fill="#ddd3cc"/></g><rect x="278.8" y="460.0" width="78.1" height="47.1" fill="#fff"/><rect x="363.9" y="456.8" width="84.5" height="53.5" fill="#b8dde5"/><circle cx="365.9" cy="458.3" r="1.5" fill="#2c5a62"/><circle cx="365.9" cy="508.8" r="1.5" fill="#2c5a62"/><circle cx="374.2" cy="458.3" r="1.5" fill="#2c5a62"/><circle cx="374.2" cy="508.8" r="1.5" fill="#2c5a62"/><circle cx="382.5" cy="458.3" r="1.5" fill="#2c5a62"/><circle cx="382.5" cy="508.8" r="1.5" fill="#2c5a62"/><circle cx="390.8" cy="458.3" r="1.5" fill="#2c5a62"/><circle cx="390.8" cy="508.8" r="1.5" fill="#2c5a62"/><circle cx="399.1" cy="458.3" r="1.5" fill="#2c5a62"/><circle cx="399.1" cy="508.8" r="1.5" fill="#2c5a62"/><circle cx="407.4" cy="458.3" r="1.5" fill="#2c5a62"/><circle cx="407.4" cy="508.8" r="1.5" fill="#2c5a62"/><circle cx="415.7" cy="458.3" r="1.5" fill="#2c5a62"/><circle cx="415.7" cy="508.8" r="1.5" fill="#2c5a62"/><circle cx="424.0" cy="458.3" r="1.5" fill="#2c5a62"/><circle cx="424.0" cy="508.8" r="1.5" fill="#2c5a62"/><circle cx="432.3" cy="458.3" r="1.5" fill="#2c5a62"/><circle cx="432.3" cy="508.8" r="1.5" fill="#2c5a62"/><circle cx="440.6" cy="458.3" r="1.5" fill="#2c5a62"/><circle cx="440.6" cy="508.8" r="1.5" fill="#2c5a62"/><circle cx="365.4" cy="467.0" r="1.5" fill="#2c5a62"/><circle cx="446.9" cy="467.0" r="1.5" fill="#2c5a62"/><circle cx="365.4" cy="475.3" r="1.5" fill="#2c5a62"/><circle cx="446.9" cy="475.3" r="1.5" fill="#2c5a62"/><circle cx="365.4" cy="483.6" r="1.5" fill="#2c5a62"/><circle cx="446.9" cy="483.6" r="1.5" fill="#2c5a62"/><circle cx="365.4" cy="491.9" r="1.5" fill="#2c5a62"/><circle cx="446.9" cy="491.9" r="1.5" fill="#2c5a62"/><circle cx="365.4" cy="500.2" r="1.5" fill="#2c5a62"/><circle cx="446.9" cy="500.2" r="1.5" fill="#2c5a62"/><rect x="366.9" y="459.8" width="78.5" height="47.5" fill="#fff"/><rect x="99.0" y="514.2" width="84.5" height="53.3" rx="11" fill="#d9eff0"/><rect x="103.2" y="518.4000000000001" width="76.1" height="44.9" rx="8" fill="#fff"/><rect x="187.3" y="514.2" width="84.5" height="53.3" rx="11" fill="#fde6c7"/><rect x="191.5" y="518.4000000000001" width="76.1" height="44.9" rx="8" fill="#fff"/><rect x="275.6" y="514.2" width="84.5" height="53.3" rx="0" fill="#6a8a67"/><rect x="279.3" y="517.9000000000001" width="77.1" height="45.9" rx="0" fill="#fff"/><rect x="363.9" y="514.2" width="84.5" height="53.3" rx="0" fill="#1a5058"/><rect x="367.59999999999997" y="517.9000000000001" width="77.1" height="45.9" rx="0" fill="#fff"/><clipPath id="c11"><rect x="535.8" y="123" width="84.7" height="106.2" rx="0"/></clipPath><g clip-path="url(#c11)"><rect x="535.8" y="123" width="84.7" height="106.2" fill="#5a7354"/><circle cx="532.8" cy="121.1" r="3.7" fill="#b5d2a3"/><rect x="531.7" y="116.4" width="2.2" height="1.5" fill="#b5d2a3"/><circle cx="545.2" cy="120.1" r="3.7" fill="#efb9a3"/><rect x="544.1" y="115.5" width="2.2" height="1.5" fill="#efb9a3"/><circle cx="552.4" cy="120.5" r="3.7" fill="#b5d2a3"/><rect x="551.2" y="115.9" width="2.2" height="1.5" fill="#b5d2a3"/><circle cx="560.4" cy="119.3" r="3.1" fill="#c9dcb4"/><rect x="559.5" y="115.5" width="1.8" height="1.2" fill="#c9dcb4"/><circle cx="568.2" cy="121.2" r="3.2" fill="#f2b59c"/><rect x="567.2" y="117.2" width="1.9" height="1.3" fill="#f2b59c"/><circle cx="577.7" cy="122.5" r="4.0" fill="#f0a98a"/><rect x="576.5" y="117.6" width="2.4" height="1.6" fill="#f0a98a"/><circle cx="587.1" cy="122.9" r="4.1" fill="#f4c8b5"/><rect x="585.8" y="117.8" width="2.5" height="1.7" fill="#f4c8b5"/><circle cx="601.4" cy="120.4" r="4.0" fill="#a05a45"/><rect x="600.2" y="115.3" width="2.4" height="1.6" fill="#a05a45"/><circle cx="609.3" cy="117.6" r="3.0" fill="#f4c8b5"/><rect x="608.4" y="113.9" width="1.8" height="1.2" fill="#f4c8b5"/><circle cx="617.1" cy="120.7" r="3.4" fill="#f2b59c"/><rect x="616.1" y="116.4" width="2.1" height="1.4" fill="#f2b59c"/><circle cx="627.8" cy="117.8" r="3.0" fill="#f0a98a"/><rect x="626.9" y="114.0" width="1.8" height="1.2" fill="#f0a98a"/><circle cx="540.2" cy="130.4" r="3.3" fill="#a8cfdb"/><rect x="539.2" y="126.3" width="2.0" height="1.3" fill="#a8cfdb"/><path d="M537.5 130.4h5.3" stroke="#fff" stroke-opacity=".8" fill="none" stroke-width="0.73"/><circle cx="545.6" cy="127.6" r="3.5" fill="#a05a45"/><rect x="544.5" y="123.2" width="2.1" height="1.4" fill="#a05a45"/><circle cx="555.8" cy="130.4" r="2.8" fill="#f2b59c"/><rect x="555.0" y="126.9" width="1.7" height="1.1" fill="#f2b59c"/><circle cx="565.5" cy="127.7" r="3.9" fill="#f4c8b5"/><rect x="564.3" y="122.9" width="2.3" height="1.6" fill="#f4c8b5"/><circle cx="573.7" cy="126.0" r="3.2" fill="#f2b59c"/><rect x="572.8" y="122.0" width="1.9" height="1.3" fill="#f2b59c"/><circle cx="583.8" cy="129.1" r="2.8" fill="#efb9a3"/><rect x="583.0" y="125.6" width="1.7" height="1.1" fill="#efb9a3"/><circle cx="593.2" cy="128.1" r="3.8" fill="#efb9a3"/><rect x="592.0" y="123.4" width="2.3" height="1.5" fill="#efb9a3"/><circle cx="606.2" cy="128.2" r="3.6" fill="#b5d2a3"/><rect x="605.2" y="123.7" width="2.1" height="1.4" fill="#b5d2a3"/><circle cx="614.3" cy="130.7" r="2.8" fill="#a8cfdb"/><rect x="613.5" y="127.2" width="1.7" height="1.1" fill="#a8cfdb"/><circle cx="624.0" cy="126.6" r="3.9" fill="#a05a45"/><rect x="622.8" y="121.7" width="2.3" height="1.6" fill="#a05a45"/><path d="M620.8 126.6h6.3" stroke="#fff" stroke-opacity=".8" fill="none" stroke-width="0.86"/><circle cx="533.7" cy="139.3" r="4.2" fill="#a05a45"/><rect x="532.4" y="134.0" width="2.5" height="1.7" fill="#a05a45"/><circle cx="544.8" cy="138.7" r="3.7" fill="#a8cfdb"/><rect x="543.7" y="134.0" width="2.2" height="1.5" fill="#a8cfdb"/><circle cx="550.3" cy="136.7" r="3.4" fill="#f0a98a"/><rect x="549.2" y="132.4" width="2.1" height="1.4" fill="#f0a98a"/><circle cx="562.2" cy="136.2" r="3.8" fill="#efb9a3"/><rect x="561.1" y="131.4" width="2.3" height="1.5" fill="#efb9a3"/><circle cx="572.7" cy="135.3" r="4.1" fill="#a05a45"/><rect x="571.4" y="130.1" width="2.5" height="1.7" fill="#a05a45"/><circle cx="579.7" cy="138.2" r="3.8" fill="#a05a45"/><rect x="578.5" y="133.4" width="2.3" height="1.5" fill="#a05a45"/><circle cx="590.4" cy="137.6" r="2.9" fill="#a8cfdb"/><rect x="589.5" y="134.0" width="1.8" height="1.2" fill="#a8cfdb"/><circle cx="597.3" cy="136.2" r="4.2" fill="#a05a45"/><rect x="596.1" y="130.9" width="2.5" height="1.7" fill="#a05a45"/><circle cx="609.4" cy="139.0" r="3.1" fill="#f2b59c"/><rect x="608.5" y="135.1" width="1.9" height="1.3" fill="#f2b59c"/><circle cx="618.1" cy="138.8" r="3.9" fill="#c9dcb4"/><rect x="616.9" y="133.9" width="2.3" height="1.6" fill="#c9dcb4"/><circle cx="629.7" cy="137.3" r="3.3" fill="#b5d2a3"/><rect x="628.7" y="133.2" width="2.0" height="1.3" fill="#b5d2a3"/><path d="M627.0 137.3h5.3" stroke="#fff" stroke-opacity=".8" fill="none" stroke-width="0.73"/><circle cx="538.9" cy="147.0" r="3.9" fill="#f4c8b5"/><rect x="537.7" y="142.1" width="2.4" height="1.6" fill="#f4c8b5"/><circle cx="547.3" cy="146.3" r="3.3" fill="#f4c8b5"/><rect x="546.3" y="142.2" width="2.0" height="1.3" fill="#f4c8b5"/><circle cx="554.7" cy="143.4" r="3.9" fill="#f0a98a"/><rect x="553.6" y="138.5" width="2.3" height="1.6" fill="#f0a98a"/><circle cx="566.6" cy="142.6" r="3.5" fill="#8fb08a"/><rect x="565.5" y="138.2" width="2.1" height="1.4" fill="#8fb08a"/><circle cx="575.7" cy="142.3" r="3.3" fill="#f4c8b5"/><rect x="574.8" y="138.2" width="2.0" height="1.3" fill="#f4c8b5"/><circle cx="582.7" cy="142.4" r="3.2" fill="#8fb08a"/><rect x="581.7" y="138.4" width="1.9" height="1.3" fill="#8fb08a"/><circle cx="595.1" cy="145.5" r="3.4" fill="#b5d2a3"/><rect x="594.1" y="141.3" width="2.0" height="1.4" fill="#b5d2a3"/><path d="M592.4 145.5h5.4" stroke="#fff" stroke-opacity=".8" fill="none" stroke-width="0.75"/><circle cx="603.4" cy="144.4" r="3.0" fill="#f0a98a"/><rect x="602.5" y="140.6" width="1.8" height="1.2" fill="#f0a98a"/><circle cx="612.6" cy="146.9" r="2.9" fill="#f3dcae"/><rect x="611.8" y="143.3" width="1.7" height="1.2" fill="#f3dcae"/><path d="M610.3 146.9h4.6" stroke="#a9573c" stroke-opacity=".8" fill="none" stroke-width="0.64"/><circle cx="621.5" cy="143.5" r="3.0" fill="#f2b59c"/><rect x="620.6" y="139.7" width="1.8" height="1.2" fill="#f2b59c"/><circle cx="533.1" cy="150.9" r="4.1" fill="#ddd3cc"/><rect x="531.9" y="145.8" width="2.4" height="1.6" fill="#ddd3cc"/><circle cx="542.2" cy="153.5" r="4.0" fill="#f3dcae"/><rect x="541.0" y="148.5" width="2.4" height="1.6" fill="#f3dcae"/><circle cx="553.4" cy="150.3" r="3.9" fill="#f2b59c"/><rect x="552.2" y="145.5" width="2.3" height="1.6" fill="#f2b59c"/><circle cx="562.7" cy="152.3" r="3.7" fill="#f0a98a"/><rect x="561.5" y="147.6" width="2.2" height="1.5" fill="#f0a98a"/><path d="M559.7 152.3h6.0" stroke="#fff" stroke-opacity=".8" fill="none" stroke-width="0.82"/><circle cx="568.4" cy="153.3" r="3.2" fill="#8fb08a"/><rect x="567.4" y="149.3" width="1.9" height="1.3" fill="#8fb08a"/><path d="M565.8 153.3h5.1" stroke="#fff" stroke-opacity=".8" fill="none" stroke-width="0.71"/><circle cx="581.5" cy="155.1" r="3.7" fill="#b5d2a3"/><rect x="580.4" y="150.5" width="2.2" height="1.5" fill="#b5d2a3"/><path d="M578.6 155.1h5.9" stroke="#fff" stroke-opacity=".8" fill="none" stroke-width="0.81"/><circle cx="587.8" cy="153.1" r="3.1" fill="#f2b59c"/><rect x="586.9" y="149.2" width="1.9" height="1.2" fill="#f2b59c"/><circle cx="598.0" cy="152.4" r="3.7" fill="#a8cfdb"/><rect x="596.9" y="147.8" width="2.2" height="1.5" fill="#a8cfdb"/><circle cx="610.3" cy="155.1" r="3.2" fill="#b5d2a3"/><rect x="609.3" y="151.1" width="1.9" height="1.3" fill="#b5d2a3"/><circle cx="614.9" cy="153.8" r="3.9" fill="#f2b59c"/><rect x="613.8" y="148.9" width="2.4" height="1.6" fill="#f2b59c"/><circle cx="627.6" cy="151.6" r="3.3" fill="#f2b59c"/><rect x="626.6" y="147.4" width="2.0" height="1.3" fill="#f2b59c"/><circle cx="540.2" cy="162.8" r="3.0" fill="#f3dcae"/><rect x="539.3" y="159.1" width="1.8" height="1.2" fill="#f3dcae"/><circle cx="544.9" cy="159.8" r="4.1" fill="#f0a98a"/><rect x="543.7" y="154.7" width="2.4" height="1.6" fill="#f0a98a"/><circle cx="558.3" cy="160.3" r="3.8" fill="#a8cfdb"/><rect x="557.1" y="155.5" width="2.3" height="1.5" fill="#a8cfdb"/><circle cx="567.9" cy="160.0" r="4.0" fill="#8fb08a"/><rect x="566.7" y="155.0" width="2.4" height="1.6" fill="#8fb08a"/><circle cx="572.6" cy="160.0" r="2.8" fill="#b5d2a3"/><rect x="571.8" y="156.5" width="1.7" height="1.1" fill="#b5d2a3"/><circle cx="583.0" cy="162.8" r="4.1" fill="#b5d2a3"/><rect x="581.7" y="157.7" width="2.5" height="1.6" fill="#b5d2a3"/><circle cx="594.3" cy="158.4" r="4.1" fill="#ddd3cc"/><rect x="593.1" y="153.3" width="2.5" height="1.6" fill="#ddd3cc"/><circle cx="603.7" cy="160.8" r="3.5" fill="#f0a98a"/><rect x="602.6" y="156.4" width="2.1" height="1.4" fill="#f0a98a"/><path d="M600.9 160.8h5.6" stroke="#fff" stroke-opacity=".8" fill="none" stroke-width="0.78"/><circle cx="612.3" cy="161.0" r="3.2" fill="#ddd3cc"/><rect x="611.3" y="157.0" width="1.9" height="1.3" fill="#ddd3cc"/><circle cx="621.7" cy="160.6" r="3.5" fill="#8fb08a"/><rect x="620.6" y="156.2" width="2.1" height="1.4" fill="#8fb08a"/><circle cx="530.3" cy="167.3" r="3.9" fill="#ddd3cc"/><rect x="529.1" y="162.5" width="2.3" height="1.5" fill="#ddd3cc"/><circle cx="545.0" cy="170.3" r="3.4" fill="#f2b59c"/><rect x="543.9" y="166.1" width="2.0" height="1.4" fill="#f2b59c"/><circle cx="551.1" cy="166.8" r="4.1" fill="#ddd3cc"/><rect x="549.8" y="161.7" width="2.5" height="1.6" fill="#ddd3cc"/><path d="M547.8 166.8h6.6" stroke="#fff" stroke-opacity=".8" fill="none" stroke-width="0.90"/><circle cx="559.0" cy="166.9" r="2.8" fill="#f2b59c"/><rect x="558.1" y="163.4" width="1.7" height="1.1" fill="#f2b59c"/><circle cx="567.9" cy="170.3" r="3.6" fill="#8fb08a"/><rect x="566.9" y="165.8" width="2.1" height="1.4" fill="#8fb08a"/><circle cx="581.4" cy="171.8" r="2.8" fill="#f3dcae"/><rect x="580.5" y="168.3" width="1.7" height="1.1" fill="#f3dcae"/><circle cx="591.1" cy="170.0" r="3.4" fill="#ddd3cc"/><rect x="590.1" y="165.7" width="2.1" height="1.4" fill="#ddd3cc"/><circle cx="599.0" cy="168.2" r="3.1" fill="#f4c8b5"/><rect x="598.1" y="164.3" width="1.9" height="1.2" fill="#f4c8b5"/><circle cx="607.3" cy="166.8" r="3.9" fill="#f0a98a"/><rect x="606.1" y="161.9" width="2.4" height="1.6" fill="#f0a98a"/><circle cx="616.8" cy="168.1" r="4.1" fill="#c9dcb4"/><rect x="615.6" y="163.0" width="2.5" height="1.6" fill="#c9dcb4"/><path d="M613.5 168.1h6.6" stroke="#a9573c" stroke-opacity=".8" fill="none" stroke-width="0.90"/><circle cx="625.7" cy="167.5" r="2.9" fill="#f2b59c"/><rect x="624.8" y="163.9" width="1.8" height="1.2" fill="#f2b59c"/><circle cx="539.5" cy="178.9" r="3.2" fill="#f2b59c"/><rect x="538.5" y="174.8" width="1.9" height="1.3" fill="#f2b59c"/><circle cx="549.2" cy="179.2" r="3.3" fill="#c9dcb4"/><rect x="548.3" y="175.1" width="2.0" height="1.3" fill="#c9dcb4"/><circle cx="557.2" cy="175.0" r="3.3" fill="#a8cfdb"/><rect x="556.2" y="170.9" width="2.0" height="1.3" fill="#a8cfdb"/><circle cx="563.8" cy="177.7" r="4.1" fill="#8fb08a"/><rect x="562.5" y="172.5" width="2.5" height="1.7" fill="#8fb08a"/><circle cx="574.4" cy="180.2" r="2.9" fill="#c9dcb4"/><rect x="573.5" y="176.5" width="1.8" height="1.2" fill="#c9dcb4"/><circle cx="582.8" cy="177.7" r="3.6" fill="#c9dcb4"/><rect x="581.7" y="173.2" width="2.2" height="1.4" fill="#c9dcb4"/><circle cx="593.2" cy="176.7" r="4.1" fill="#ddd3cc"/><rect x="591.9" y="171.6" width="2.4" height="1.6" fill="#ddd3cc"/><circle cx="604.0" cy="175.0" r="3.7" fill="#f3dcae"/><rect x="602.9" y="170.4" width="2.2" height="1.5" fill="#f3dcae"/><circle cx="613.6" cy="178.1" r="4.0" fill="#b5d2a3"/><rect x="612.4" y="173.1" width="2.4" height="1.6" fill="#b5d2a3"/><circle cx="621.3" cy="178.3" r="3.3" fill="#a05a45"/><rect x="620.3" y="174.1" width="2.0" height="1.3" fill="#a05a45"/><circle cx="533.2" cy="187.5" r="3.5" fill="#a8cfdb"/><rect x="532.1" y="183.1" width="2.1" height="1.4" fill="#a8cfdb"/><circle cx="542.3" cy="183.3" r="3.2" fill="#efb9a3"/><rect x="541.3" y="179.3" width="1.9" height="1.3" fill="#efb9a3"/><circle cx="549.3" cy="186.7" r="3.0" fill="#a8cfdb"/><rect x="548.4" y="182.9" width="1.8" height="1.2" fill="#a8cfdb"/><circle cx="562.0" cy="186.1" r="3.5" fill="#a8cfdb"/><rect x="560.9" y="181.8" width="2.1" height="1.4" fill="#a8cfdb"/><circle cx="573.0" cy="185.0" r="3.4" fill="#ddd3cc"/><rect x="572.0" y="180.7" width="2.1" height="1.4" fill="#ddd3cc"/><circle cx="582.3" cy="183.9" r="3.6" fill="#8fb08a"/><rect x="581.2" y="179.4" width="2.2" height="1.4" fill="#8fb08a"/><circle cx="590.3" cy="186.8" r="4.0" fill="#ddd3cc"/><rect x="589.1" y="181.8" width="2.4" height="1.6" fill="#ddd3cc"/><circle cx="597.7" cy="182.9" r="4.1" fill="#a8cfdb"/><rect x="596.5" y="177.9" width="2.4" height="1.6" fill="#a8cfdb"/><circle cx="610.8" cy="187.9" r="3.0" fill="#a05a45"/><rect x="609.9" y="184.2" width="1.8" height="1.2" fill="#a05a45"/><circle cx="616.5" cy="184.2" r="3.4" fill="#f2b59c"/><rect x="615.5" y="180.1" width="2.0" height="1.3" fill="#f2b59c"/><path d="M613.8 184.2h5.4" stroke="#fff" stroke-opacity=".8" fill="none" stroke-width="0.74"/><circle cx="626.7" cy="185.8" r="3.1" fill="#f3dcae"/><rect x="625.8" y="181.9" width="1.9" height="1.2" fill="#f3dcae"/><path d="M624.2 185.8h5.0" stroke="#a9573c" stroke-opacity=".8" fill="none" stroke-width="0.68"/><circle cx="539.6" cy="193.1" r="3.5" fill="#c9dcb4"/><rect x="538.5" y="188.8" width="2.1" height="1.4" fill="#c9dcb4"/><path d="M536.8 193.1h5.5" stroke="#a9573c" stroke-opacity=".8" fill="none" stroke-width="0.76"/><circle cx="545.3" cy="195.7" r="3.3" fill="#a05a45"/><rect x="544.4" y="191.6" width="2.0" height="1.3" fill="#a05a45"/><circle cx="558.9" cy="193.9" r="3.3" fill="#f3dcae"/><rect x="557.9" y="189.8" width="2.0" height="1.3" fill="#f3dcae"/><path d="M556.3 193.9h5.3" stroke="#a9573c" stroke-opacity=".8" fill="none" stroke-width="0.72"/><circle cx="564.2" cy="195.7" r="2.9" fill="#f3dcae"/><rect x="563.4" y="192.1" width="1.7" height="1.2" fill="#f3dcae"/><circle cx="575.5" cy="196.1" r="2.9" fill="#c9dcb4"/><rect x="574.6" y="192.4" width="1.7" height="1.2" fill="#c9dcb4"/><circle cx="587.3" cy="194.2" r="4.0" fill="#f2b59c"/><rect x="586.1" y="189.2" width="2.4" height="1.6" fill="#f2b59c"/><circle cx="591.4" cy="193.7" r="3.3" fill="#f2b59c"/><rect x="590.4" y="189.7" width="2.0" height="1.3" fill="#f2b59c"/><path d="M588.8 193.7h5.2" stroke="#fff" stroke-opacity=".8" fill="none" stroke-width="0.72"/><circle cx="603.7" cy="196.1" r="3.4" fill="#a05a45"/><rect x="602.7" y="191.8" width="2.1" height="1.4" fill="#a05a45"/><circle cx="610.1" cy="193.8" r="3.4" fill="#b5d2a3"/><rect x="609.1" y="189.6" width="2.0" height="1.3" fill="#b5d2a3"/><path d="M607.4 193.8h5.4" stroke="#fff" stroke-opacity=".8" fill="none" stroke-width="0.74"/><circle cx="624.0" cy="193.9" r="3.7" fill="#a8cfdb"/><rect x="622.9" y="189.4" width="2.2" height="1.5" fill="#a8cfdb"/><circle cx="532.5" cy="203.6" r="3.8" fill="#a05a45"/><rect x="531.3" y="198.8" width="2.3" height="1.5" fill="#a05a45"/><path d="M529.4 203.6h6.2" stroke="#fff" stroke-opacity=".8" fill="none" stroke-width="0.85"/><circle cx="543.4" cy="199.4" r="3.2" fill="#ddd3cc"/><rect x="542.4" y="195.4" width="1.9" height="1.3" fill="#ddd3cc"/><circle cx="550.9" cy="202.8" r="4.0" fill="#f4c8b5"/><rect x="549.7" y="197.9" width="2.4" height="1.6" fill="#f4c8b5"/><circle cx="559.2" cy="202.5" r="2.9" fill="#a05a45"/><rect x="558.3" y="198.9" width="1.8" height="1.2" fill="#a05a45"/><circle cx="568.8" cy="203.8" r="4.0" fill="#f3dcae"/><rect x="567.6" y="198.8" width="2.4" height="1.6" fill="#f3dcae"/><circle cx="577.3" cy="200.0" r="3.4" fill="#efb9a3"/><rect x="576.2" y="195.7" width="2.1" height="1.4" fill="#efb9a3"/><circle cx="590.8" cy="203.8" r="3.9" fill="#a8cfdb"/><rect x="589.6" y="199.0" width="2.3" height="1.5" fill="#a8cfdb"/><circle cx="600.3" cy="200.3" r="4.1" fill="#c9dcb4"/><rect x="599.0" y="195.1" width="2.5" height="1.7" fill="#c9dcb4"/><circle cx="607.0" cy="202.6" r="3.3" fill="#ddd3cc"/><rect x="606.0" y="198.5" width="2.0" height="1.3" fill="#ddd3cc"/><circle cx="618.0" cy="202.2" r="3.5" fill="#a05a45"/><rect x="616.9" y="197.8" width="2.1" height="1.4" fill="#a05a45"/><circle cx="625.8" cy="204.1" r="3.2" fill="#f2b59c"/><rect x="624.9" y="200.0" width="1.9" height="1.3" fill="#f2b59c"/><circle cx="536.2" cy="210.4" r="3.9" fill="#f3dcae"/><rect x="535.0" y="205.5" width="2.3" height="1.6" fill="#f3dcae"/><circle cx="544.8" cy="212.7" r="3.6" fill="#8fb08a"/><rect x="543.7" y="208.2" width="2.2" height="1.5" fill="#8fb08a"/><circle cx="558.3" cy="211.1" r="4.2" fill="#f2b59c"/><rect x="557.0" y="205.9" width="2.5" height="1.7" fill="#f2b59c"/><circle cx="568.2" cy="209.1" r="2.8" fill="#ddd3cc"/><rect x="567.4" y="205.6" width="1.7" height="1.1" fill="#ddd3cc"/><circle cx="575.2" cy="208.5" r="3.1" fill="#f4c8b5"/><rect x="574.2" y="204.6" width="1.8" height="1.2" fill="#f4c8b5"/><circle cx="585.6" cy="210.1" r="3.9" fill="#b5d2a3"/><rect x="584.5" y="205.2" width="2.4" height="1.6" fill="#b5d2a3"/><circle cx="595.1" cy="210.0" r="3.9" fill="#8fb08a"/><rect x="593.9" y="205.1" width="2.3" height="1.6" fill="#8fb08a"/><circle cx="601.7" cy="212.5" r="2.9" fill="#f0a98a"/><rect x="600.9" y="208.8" width="1.8" height="1.2" fill="#f0a98a"/><circle cx="612.7" cy="209.8" r="3.0" fill="#f3dcae"/><rect x="611.8" y="206.1" width="1.8" height="1.2" fill="#f3dcae"/><circle cx="620.7" cy="208.8" r="2.9" fill="#efb9a3"/><rect x="619.8" y="205.2" width="1.7" height="1.1" fill="#efb9a3"/><circle cx="534.0" cy="218.4" r="3.4" fill="#f2b59c"/><rect x="533.0" y="214.2" width="2.0" height="1.4" fill="#f2b59c"/><circle cx="540.5" cy="220.3" r="3.6" fill="#b5d2a3"/><rect x="539.4" y="215.8" width="2.2" height="1.4" fill="#b5d2a3"/><circle cx="549.8" cy="218.6" r="3.0" fill="#ddd3cc"/><rect x="548.9" y="214.8" width="1.8" height="1.2" fill="#ddd3cc"/><circle cx="562.1" cy="215.7" r="3.4" fill="#efb9a3"/><rect x="561.1" y="211.4" width="2.1" height="1.4" fill="#efb9a3"/><circle cx="568.5" cy="220.6" r="4.0" fill="#efb9a3"/><rect x="567.3" y="215.6" width="2.4" height="1.6" fill="#efb9a3"/><circle cx="581.1" cy="218.6" r="3.0" fill="#efb9a3"/><rect x="580.2" y="214.9" width="1.8" height="1.2" fill="#efb9a3"/><circle cx="592.0" cy="220.5" r="3.5" fill="#c9dcb4"/><rect x="591.0" y="216.2" width="2.1" height="1.4" fill="#c9dcb4"/><circle cx="600.8" cy="217.0" r="2.9" fill="#b5d2a3"/><rect x="599.9" y="213.4" width="1.7" height="1.1" fill="#b5d2a3"/><circle cx="610.5" cy="218.6" r="3.6" fill="#f2b59c"/><rect x="609.4" y="214.1" width="2.2" height="1.4" fill="#f2b59c"/><circle cx="615.0" cy="220.2" r="2.9" fill="#f3dcae"/><rect x="614.1" y="216.5" width="1.8" height="1.2" fill="#f3dcae"/><circle cx="628.5" cy="218.6" r="3.7" fill="#f0a98a"/><rect x="627.4" y="214.0" width="2.2" height="1.5" fill="#f0a98a"/><circle cx="534.9" cy="227.8" r="3.0" fill="#a8cfdb"/><rect x="534.0" y="224.1" width="1.8" height="1.2" fill="#a8cfdb"/><circle cx="544.8" cy="227.3" r="3.8" fill="#a05a45"/><rect x="543.6" y="222.6" width="2.3" height="1.5" fill="#a05a45"/><circle cx="556.5" cy="228.1" r="2.9" fill="#b5d2a3"/><rect x="555.7" y="224.6" width="1.7" height="1.1" fill="#b5d2a3"/><circle cx="563.2" cy="225.6" r="4.2" fill="#b5d2a3"/><rect x="562.0" y="220.4" width="2.5" height="1.7" fill="#b5d2a3"/><path d="M559.9 225.6h6.7" stroke="#fff" stroke-opacity=".8" fill="none" stroke-width="0.91"/><circle cx="572.5" cy="228.0" r="3.3" fill="#a8cfdb"/><rect x="571.5" y="223.8" width="2.0" height="1.3" fill="#a8cfdb"/><circle cx="582.5" cy="227.4" r="3.0" fill="#c9dcb4"/><rect x="581.6" y="223.6" width="1.8" height="1.2" fill="#c9dcb4"/><circle cx="591.8" cy="227.6" r="4.0" fill="#f2b59c"/><rect x="590.6" y="222.7" width="2.4" height="1.6" fill="#f2b59c"/><circle cx="602.2" cy="225.7" r="2.9" fill="#ddd3cc"/><rect x="601.4" y="222.1" width="1.7" height="1.2" fill="#ddd3cc"/><circle cx="614.0" cy="228.7" r="3.1" fill="#efb9a3"/><rect x="613.0" y="224.8" width="1.9" height="1.3" fill="#efb9a3"/><circle cx="619.5" cy="224.2" r="2.8" fill="#f3dcae"/><rect x="618.7" y="220.7" width="1.7" height="1.1" fill="#f3dcae"/><circle cx="533.0" cy="234.9" r="4.0" fill="#f2b59c"/><rect x="531.8" y="229.9" width="2.4" height="1.6" fill="#f2b59c"/><circle cx="543.9" cy="234.0" r="2.8" fill="#b5d2a3"/><rect x="543.0" y="230.5" width="1.7" height="1.1" fill="#b5d2a3"/><circle cx="549.9" cy="237.4" r="4.0" fill="#efb9a3"/><rect x="548.7" y="232.4" width="2.4" height="1.6" fill="#efb9a3"/><circle cx="560.0" cy="236.0" r="2.8" fill="#f3dcae"/><rect x="559.2" y="232.4" width="1.7" height="1.1" fill="#f3dcae"/><circle cx="570.0" cy="233.6" r="3.8" fill="#b5d2a3"/><rect x="568.8" y="228.9" width="2.3" height="1.5" fill="#b5d2a3"/><circle cx="581.7" cy="234.2" r="2.9" fill="#ddd3cc"/><rect x="580.8" y="230.6" width="1.7" height="1.1" fill="#ddd3cc"/><circle cx="586.6" cy="234.5" r="3.3" fill="#a8cfdb"/><rect x="585.6" y="230.4" width="2.0" height="1.3" fill="#a8cfdb"/><circle cx="596.1" cy="233.8" r="3.1" fill="#f3dcae"/><rect x="595.1" y="229.9" width="1.9" height="1.2" fill="#f3dcae"/><path d="M593.6 233.8h5.0" stroke="#a9573c" stroke-opacity=".8" fill="none" stroke-width="0.68"/><circle cx="606.1" cy="237.1" r="3.8" fill="#c9dcb4"/><rect x="605.0" y="232.3" width="2.3" height="1.5" fill="#c9dcb4"/><circle cx="618.9" cy="233.1" r="2.9" fill="#f0a98a"/><rect x="618.1" y="229.5" width="1.7" height="1.2" fill="#f0a98a"/><circle cx="628.2" cy="232.0" r="3.3" fill="#f4c8b5"/><rect x="627.2" y="227.9" width="2.0" height="1.3" fill="#f4c8b5"/></g><clipPath id="c12"><rect x="624.5999999999999" y="123" width="84.7" height="106.2" rx="0"/></clipPath><g clip-path="url(#c12)"><rect x="624.5999999999999" y="123" width="84.7" height="106.2" fill="#a9d4df"/><circle cx="625.7" cy="123.0" r="2.8" fill="#345f68"/><circle cx="642.0" cy="123.0" r="2.8" fill="#345f68"/><circle cx="658.3" cy="123.0" r="2.8" fill="#345f68"/><circle cx="674.6" cy="123.0" r="2.8" fill="#345f68"/><circle cx="690.9" cy="123.0" r="2.8" fill="#345f68"/><circle cx="707.2" cy="123.0" r="2.8" fill="#345f68"/><circle cx="633.8" cy="131.2" r="2.8" fill="#345f68"/><circle cx="650.1" cy="131.2" r="2.8" fill="#345f68"/><circle cx="666.4" cy="131.2" r="2.8" fill="#345f68"/><circle cx="682.7" cy="131.2" r="2.8" fill="#345f68"/><circle cx="699.0" cy="131.2" r="2.8" fill="#345f68"/><circle cx="625.7" cy="139.4" r="2.8" fill="#345f68"/><circle cx="642.0" cy="139.4" r="2.8" fill="#345f68"/><circle cx="658.3" cy="139.4" r="2.8" fill="#345f68"/><circle cx="674.6" cy="139.4" r="2.8" fill="#345f68"/><circle cx="690.9" cy="139.4" r="2.8" fill="#345f68"/><circle cx="707.2" cy="139.4" r="2.8" fill="#345f68"/><circle cx="633.8" cy="147.6" r="2.8" fill="#345f68"/><circle cx="650.1" cy="147.6" r="2.8" fill="#345f68"/><circle cx="666.4" cy="147.6" r="2.8" fill="#345f68"/><circle cx="682.7" cy="147.6" r="2.8" fill="#345f68"/><circle cx="699.0" cy="147.6" r="2.8" fill="#345f68"/><circle cx="625.7" cy="155.8" r="2.8" fill="#345f68"/><circle cx="642.0" cy="155.8" r="2.8" fill="#345f68"/><circle cx="658.3" cy="155.8" r="2.8" fill="#345f68"/><circle cx="674.6" cy="155.8" r="2.8" fill="#345f68"/><circle cx="690.9" cy="155.8" r="2.8" fill="#345f68"/><circle cx="707.2" cy="155.8" r="2.8" fill="#345f68"/><circle cx="633.8" cy="164.0" r="2.8" fill="#345f68"/><circle cx="650.1" cy="164.0" r="2.8" fill="#345f68"/><circle cx="666.4" cy="164.0" r="2.8" fill="#345f68"/><circle cx="682.7" cy="164.0" r="2.8" fill="#345f68"/><circle cx="699.0" cy="164.0" r="2.8" fill="#345f68"/><circle cx="625.7" cy="172.2" r="2.8" fill="#345f68"/><circle cx="642.0" cy="172.2" r="2.8" fill="#345f68"/><circle cx="658.3" cy="172.2" r="2.8" fill="#345f68"/><circle cx="674.6" cy="172.2" r="2.8" fill="#345f68"/><circle cx="690.9" cy="172.2" r="2.8" fill="#345f68"/><circle cx="707.2" cy="172.2" r="2.8" fill="#345f68"/><circle cx="633.8" cy="180.4" r="2.8" fill="#345f68"/><circle cx="650.1" cy="180.4" r="2.8" fill="#345f68"/><circle cx="666.4" cy="180.4" r="2.8" fill="#345f68"/><circle cx="682.7" cy="180.4" r="2.8" fill="#345f68"/><circle cx="699.0" cy="180.4" r="2.8" fill="#345f68"/><circle cx="625.7" cy="188.6" r="2.8" fill="#345f68"/><circle cx="642.0" cy="188.6" r="2.8" fill="#345f68"/><circle cx="658.3" cy="188.6" r="2.8" fill="#345f68"/><circle cx="674.6" cy="188.6" r="2.8" fill="#345f68"/><circle cx="690.9" cy="188.6" r="2.8" fill="#345f68"/><circle cx="707.2" cy="188.6" r="2.8" fill="#345f68"/><circle cx="633.8" cy="196.8" r="2.8" fill="#345f68"/><circle cx="650.1" cy="196.8" r="2.8" fill="#345f68"/><circle cx="666.4" cy="196.8" r="2.8" fill="#345f68"/><circle cx="682.7" cy="196.8" r="2.8" fill="#345f68"/><circle cx="699.0" cy="196.8" r="2.8" fill="#345f68"/><circle cx="625.7" cy="205.0" r="2.8" fill="#345f68"/><circle cx="642.0" cy="205.0" r="2.8" fill="#345f68"/><circle cx="658.3" cy="205.0" r="2.8" fill="#345f68"/><circle cx="674.6" cy="205.0" r="2.8" fill="#345f68"/><circle cx="690.9" cy="205.0" r="2.8" fill="#345f68"/><circle cx="707.2" cy="205.0" r="2.8" fill="#345f68"/><circle cx="633.8" cy="213.2" r="2.8" fill="#345f68"/><circle cx="650.1" cy="213.2" r="2.8" fill="#345f68"/><circle cx="666.4" cy="213.2" r="2.8" fill="#345f68"/><circle cx="682.7" cy="213.2" r="2.8" fill="#345f68"/><circle cx="699.0" cy="213.2" r="2.8" fill="#345f68"/><circle cx="625.7" cy="221.4" r="2.8" fill="#345f68"/><circle cx="642.0" cy="221.4" r="2.8" fill="#345f68"/><circle cx="658.3" cy="221.4" r="2.8" fill="#345f68"/><circle cx="674.6" cy="221.4" r="2.8" fill="#345f68"/><circle cx="690.9" cy="221.4" r="2.8" fill="#345f68"/><circle cx="707.2" cy="221.4" r="2.8" fill="#345f68"/><circle cx="633.8" cy="229.6" r="2.8" fill="#345f68"/><circle cx="650.1" cy="229.6" r="2.8" fill="#345f68"/><circle cx="666.4" cy="229.6" r="2.8" fill="#345f68"/><circle cx="682.7" cy="229.6" r="2.8" fill="#345f68"/><circle cx="699.0" cy="229.6" r="2.8" fill="#345f68"/></g><clipPath id="c13"><rect x="713.4" y="123" width="84.7" height="106.2" rx="0"/></clipPath><g clip-path="url(#c13)"><rect x="713.4" y="123" width="84.7" height="106.2" fill="#2f5a68"/><circle cx="794.6" cy="137.9" r="0.9" fill="#e9a38a" fill-opacity=".7"/><circle cx="765.3" cy="170.5" r="0.9" fill="#f5dcaa" fill-opacity=".7"/><circle cx="723.6" cy="192.2" r="0.9" fill="#a9d3e0" fill-opacity=".7"/><circle cx="780.5" cy="131.5" r="0.9" fill="#a9d3e0" fill-opacity=".7"/><circle cx="794.7" cy="156.9" r="0.9" fill="#f5dcaa" fill-opacity=".7"/><circle cx="728.6" cy="181.6" r="0.9" fill="#f5dcaa" fill-opacity=".7"/><circle cx="791.7" cy="198.2" r="0.9" fill="#e9a38a" fill-opacity=".7"/><circle cx="762.3" cy="125.3" r="0.9" fill="#a9d3e0" fill-opacity=".7"/><circle cx="739.7" cy="143.2" r="0.9" fill="#e9a38a" fill-opacity=".7"/><circle cx="762.8" cy="222.6" r="0.9" fill="#f5dcaa" fill-opacity=".7"/><circle cx="718.6" cy="157.7" r="0.9" fill="#a9d3e0" fill-opacity=".7"/><circle cx="735.3" cy="224.6" r="0.9" fill="#a9d3e0" fill-opacity=".7"/><circle cx="789.7" cy="215.5" r="0.9" fill="#f5dcaa" fill-opacity=".7"/><circle cx="757.0" cy="152.7" r="0.9" fill="#a9d3e0" fill-opacity=".7"/><circle cx="769.9" cy="142.7" r="0.9" fill="#e9a38a" fill-opacity=".7"/><circle cx="742.4" cy="218.7" r="0.9" fill="#a9d3e0" fill-opacity=".7"/><circle cx="791.8" cy="176.8" r="0.9" fill="#f5dcaa" fill-opacity=".7"/><circle cx="788.1" cy="165.2" r="0.9" fill="#e9a38a" fill-opacity=".7"/><circle cx="739.4" cy="162.7" r="0.9" fill="#f5dcaa" fill-opacity=".7"/><circle cx="715.5" cy="184.1" r="0.9" fill="#f5dcaa" fill-opacity=".7"/><circle cx="759.4" cy="169.0" r="0.9" fill="#f5dcaa" fill-opacity=".7"/><circle cx="789.6" cy="168.4" r="0.9" fill="#e9a38a" fill-opacity=".7"/><circle cx="797.8" cy="160.8" r="0.9" fill="#a9d3e0" fill-opacity=".7"/><circle cx="779.6" cy="129.2" r="0.9" fill="#e9a38a" fill-opacity=".7"/><circle cx="756.8" cy="165.5" r="0.9" fill="#e9a38a" fill-opacity=".7"/><circle cx="752.3" cy="143.5" r="0.9" fill="#e9a38a" fill-opacity=".7"/><circle cx="759.7" cy="160.1" r="0.9" fill="#a9d3e0" fill-opacity=".7"/><circle cx="790.5" cy="189.9" r="0.9" fill="#a9d3e0" fill-opacity=".7"/><circle cx="716.5" cy="179.9" r="0.9" fill="#f5dcaa" fill-opacity=".7"/><circle cx="776.0" cy="192.6" r="0.9" fill="#e9a38a" fill-opacity=".7"/><circle cx="717.8" cy="166.6" r="0.9" fill="#e9a38a" fill-opacity=".7"/><circle cx="791.4" cy="171.9" r="0.9" fill="#e9a38a" fill-opacity=".7"/><circle cx="755.6" cy="178.6" r="0.9" fill="#f5dcaa" fill-opacity=".7"/><circle cx="737.5" cy="195.6" r="0.9" fill="#a9d3e0" fill-opacity=".7"/><circle cx="753.7" cy="130.0" r="0.9" fill="#f5dcaa" fill-opacity=".7"/><circle cx="743.4" cy="206.3" r="0.9" fill="#f5dcaa" fill-opacity=".7"/><circle cx="735.3" cy="135.7" r="0.9" fill="#e9a38a" fill-opacity=".7"/><circle cx="755.8" cy="190.4" r="0.9" fill="#a9d3e0" fill-opacity=".7"/><circle cx="721.6" cy="189.8" r="0.9" fill="#f5dcaa" fill-opacity=".7"/><circle cx="750.2" cy="151.6" r="0.9" fill="#e9a38a" fill-opacity=".7"/><circle cx="719.9" cy="143.2" r="0.9" fill="#f5dcaa" fill-opacity=".7"/><circle cx="723.4" cy="146.0" r="0.9" fill="#a9d3e0" fill-opacity=".7"/><circle cx="754.6" cy="130.2" r="0.9" fill="#e9a38a" fill-opacity=".7"/><circle cx="736.8" cy="133.3" r="0.9" fill="#a9d3e0" fill-opacity=".7"/><circle cx="765.8" cy="165.8" r="0.9" fill="#e9a38a" fill-opacity=".7"/><circle cx="775.6" cy="221.2" r="0.9" fill="#e9a38a" fill-opacity=".7"/><circle cx="716.6" cy="163.1" r="0.9" fill="#f5dcaa" fill-opacity=".7"/><circle cx="716.2" cy="144.6" r="0.9" fill="#a9d3e0" fill-opacity=".7"/><circle cx="767.2" cy="128.2" r="0.9" fill="#f5dcaa" fill-opacity=".7"/><circle cx="774.2" cy="172.3" r="0.9" fill="#e9a38a" fill-opacity=".7"/><circle cx="788.7" cy="135.0" r="0.9" fill="#e9a38a" fill-opacity=".7"/><circle cx="792.2" cy="183.1" r="0.9" fill="#e9a38a" fill-opacity=".7"/><circle cx="788.7" cy="191.6" r="0.9" fill="#e9a38a" fill-opacity=".7"/><circle cx="715.9" cy="139.8" r="0.9" fill="#a9d3e0" fill-opacity=".7"/><circle cx="717.0" cy="174.7" r="0.9" fill="#e9a38a" fill-opacity=".7"/><circle cx="736.9" cy="204.6" r="0.9" fill="#e9a38a" fill-opacity=".7"/><circle cx="766.9" cy="227.7" r="0.9" fill="#f5dcaa" fill-opacity=".7"/><circle cx="733.2" cy="179.8" r="0.9" fill="#e9a38a" fill-opacity=".7"/><circle cx="743.5" cy="150.5" r="0.9" fill="#f5dcaa" fill-opacity=".7"/><circle cx="714.2" cy="163.3" r="0.9" fill="#f5dcaa" fill-opacity=".7"/><circle cx="722.5" cy="212.9" r="0.9" fill="#f5dcaa" fill-opacity=".7"/><circle cx="760.1" cy="161.5" r="0.9" fill="#f5dcaa" fill-opacity=".7"/><circle cx="735.7" cy="150.5" r="0.9" fill="#f5dcaa" fill-opacity=".7"/><circle cx="726.9" cy="212.1" r="0.9" fill="#f5dcaa" fill-opacity=".7"/><circle cx="755.4" cy="176.1" r="0.9" fill="#e9a38a" fill-opacity=".7"/><circle cx="795.9" cy="143.2" r="0.9" fill="#a9d3e0" fill-opacity=".7"/><circle cx="742.5" cy="216.0" r="0.9" fill="#e9a38a" fill-opacity=".7"/><circle cx="746.2" cy="192.6" r="0.9" fill="#e9a38a" fill-opacity=".7"/><circle cx="773.3" cy="132.1" r="0.9" fill="#a9d3e0" fill-opacity=".7"/><circle cx="742.1" cy="128.8" r="0.9" fill="#f5dcaa" fill-opacity=".7"/><circle cx="795.5" cy="139.2" r="0.9" fill="#f5dcaa" fill-opacity=".7"/><circle cx="744.1" cy="224.2" r="0.9" fill="#e9a38a" fill-opacity=".7"/><circle cx="758.1" cy="204.5" r="0.9" fill="#e9a38a" fill-opacity=".7"/><circle cx="723.0" cy="176.8" r="0.9" fill="#e9a38a" fill-opacity=".7"/><circle cx="710.7" cy="120.6" r="8.5" fill="#7fa679"/><circle cx="710.7" cy="120.6" r="5.3" fill="none" stroke="#dbe8c8" stroke-width="1.19"/><circle cx="710.7" cy="120.6" r="2.1" fill="#dbe8c8"/><rect x="708.3" y="110.2" width="4.8" height="3.0" fill="#b57b46"/><circle cx="735.3" cy="112.8" r="9.4" fill="#c9c0bc"/><circle cx="731.5" cy="109.9" r="1.7" fill="#fff"/><circle cx="738.6" cy="109.5" r="1.7" fill="#fff"/><circle cx="735.3" cy="114.6" r="1.7" fill="#fff"/><circle cx="732.0" cy="117.5" r="1.7" fill="#fff"/><circle cx="739.1" cy="117.0" r="1.7" fill="#fff"/><rect x="732.7" y="101.3" width="5.3" height="3.3" fill="#b57b46"/><circle cx="758.1" cy="114.9" r="10.8" fill="#f5dcaa"/><rect x="755.1" y="101.7" width="6.0" height="3.8" fill="#b57b46"/><circle cx="773.0" cy="118.5" r="11.5" fill="#8e4a34"/><path d="M763.2 113.3l3.2 -2.3l3.2 2.3l3.2 -2.3l3.2 2.3l3.2 -2.3l3.2 2.3" stroke="#fff" fill="none" stroke-width="1.38"/><path d="M763.2 119.1l3.2 -2.3l3.2 2.3l3.2 -2.3l3.2 2.3l3.2 -2.3l3.2 2.3" stroke="#fff" fill="none" stroke-width="1.38"/><path d="M763.2 124.3l3.2 -2.3l3.2 2.3l3.2 -2.3l3.2 2.3l3.2 -2.3l3.2 2.3" stroke="#fff" fill="none" stroke-width="1.38"/><rect x="769.8" y="104.5" width="6.5" height="4.0" fill="#b57b46"/><circle cx="802.7" cy="118.2" r="9.5" fill="#f2c4b0"/><rect x="800.0" y="106.6" width="5.3" height="3.3" fill="#b57b46"/><circle cx="714.4" cy="130.0" r="12.1" fill="#f2c4b0"/><rect x="711.0" y="115.2" width="6.8" height="4.2" fill="#b57b46"/><circle cx="747.0" cy="130.8" r="12.0" fill="#c9c0bc"/><circle cx="742.2" cy="127.2" r="2.2" fill="#fff"/><circle cx="751.2" cy="126.6" r="2.2" fill="#fff"/><circle cx="747.0" cy="133.2" r="2.2" fill="#fff"/><circle cx="742.8" cy="136.8" r="2.2" fill="#fff"/><circle cx="751.8" cy="136.2" r="2.2" fill="#fff"/><rect x="743.7" y="116.1" width="6.7" height="4.2" fill="#b57b46"/><circle cx="769.8" cy="131.4" r="9.3" fill="#a3553b"/><path d="M761.8 127.2l2.6 -1.9l2.6 1.9l2.6 -1.9l2.6 1.9l2.6 -1.9l2.6 1.9" stroke="#fff" fill="none" stroke-width="1.12"/><path d="M761.8 131.9l2.6 -1.9l2.6 1.9l2.6 -1.9l2.6 1.9l2.6 -1.9l2.6 1.9" stroke="#fff" fill="none" stroke-width="1.12"/><path d="M761.8 136.1l2.6 -1.9l2.6 1.9l2.6 -1.9l2.6 1.9l2.6 -1.9l2.6 1.9" stroke="#fff" fill="none" stroke-width="1.12"/><rect x="767.2" y="120.0" width="5.2" height="3.3" fill="#b57b46"/><circle cx="782.0" cy="134.8" r="9.1" fill="#f5d6a0"/><path d="M774.7 127.5l5.5 14.6" stroke="#fff" stroke-opacity=".85" stroke-width="1.28"/><path d="M779.3 127.5l5.5 14.6" stroke="#fff" stroke-opacity=".85" stroke-width="1.28"/><path d="M783.9 127.5l5.5 14.6" stroke="#fff" stroke-opacity=".85" stroke-width="1.28"/><rect x="779.5" y="123.6" width="5.1" height="3.2" fill="#b57b46"/><circle cx="816.3" cy="134.4" r="8.3" fill="#f1b08e"/><rect x="814.0" y="124.3" width="4.6" height="2.9" fill="#b57b46"/><circle cx="700.9" cy="160.6" r="11.4" fill="#f1b08e"/><rect x="697.7" y="146.7" width="6.4" height="4.0" fill="#b57b46"/><circle cx="728.7" cy="152.8" r="9.2" fill="#c48b4f"/><rect x="719.6" y="149.6" width="18.3" height="6.4" fill="#f6eadb"/><rect x="726.2" y="141.6" width="5.1" height="3.2" fill="#b57b46"/><circle cx="747.2" cy="155.9" r="11.6" fill="#cfe0b9"/><rect x="743.9" y="141.7" width="6.5" height="4.1" fill="#b57b46"/><circle cx="769.6" cy="153.9" r="9.8" fill="#a9d3e0"/><path d="M761.8 146.1l5.9 15.6" stroke="#fff" stroke-opacity=".85" stroke-width="1.37"/><path d="M766.6 146.1l5.9 15.6" stroke="#fff" stroke-opacity=".85" stroke-width="1.37"/><path d="M771.5 146.1l5.9 15.6" stroke="#fff" stroke-opacity=".85" stroke-width="1.37"/><rect x="766.8" y="142.0" width="5.5" height="3.4" fill="#b57b46"/><circle cx="800.3" cy="149.9" r="11.1" fill="#a9d3e0"/><path d="M791.4 141.0l6.6 17.7" stroke="#fff" stroke-opacity=".85" stroke-width="1.55"/><path d="M797.0 141.0l6.6 17.7" stroke="#fff" stroke-opacity=".85" stroke-width="1.55"/><path d="M802.5 141.0l6.6 17.7" stroke="#fff" stroke-opacity=".85" stroke-width="1.55"/><rect x="797.2" y="136.4" width="6.2" height="3.9" fill="#b57b46"/><circle cx="714.0" cy="178.7" r="12.2" fill="#7fa679"/><circle cx="714.0" cy="178.7" r="7.5" fill="none" stroke="#dbe8c8" stroke-width="1.70"/><circle cx="714.0" cy="178.7" r="3.0" fill="#dbe8c8"/><rect x="710.6" y="163.9" width="6.8" height="4.3" fill="#b57b46"/><circle cx="736.2" cy="175.5" r="11.5" fill="#f5d6a0"/><path d="M727.1 166.3l6.9 18.4" stroke="#fff" stroke-opacity=".85" stroke-width="1.61"/><path d="M732.8 166.3l6.9 18.4" stroke="#fff" stroke-opacity=".85" stroke-width="1.61"/><path d="M738.5 166.3l6.9 18.4" stroke="#fff" stroke-opacity=".85" stroke-width="1.61"/><rect x="733.0" y="161.5" width="6.4" height="4.0" fill="#b57b46"/><circle cx="763.6" cy="178.0" r="10.8" fill="#8e4a34"/><path d="M754.4 173.1l3.0 -2.2l3.0 2.2l3.0 -2.2l3.0 2.2l3.0 -2.2l3.0 2.2" stroke="#fff" fill="none" stroke-width="1.30"/><path d="M754.4 178.5l3.0 -2.2l3.0 2.2l3.0 -2.2l3.0 2.2l3.0 -2.2l3.0 2.2" stroke="#fff" fill="none" stroke-width="1.30"/><path d="M754.4 183.4l3.0 -2.2l3.0 2.2l3.0 -2.2l3.0 2.2l3.0 -2.2l3.0 2.2" stroke="#fff" fill="none" stroke-width="1.30"/><rect x="760.6" y="164.8" width="6.1" height="3.8" fill="#b57b46"/><circle cx="788.2" cy="173.4" r="9.1" fill="#a9d3e0"/><path d="M780.9 166.1l5.5 14.6" stroke="#fff" stroke-opacity=".85" stroke-width="1.28"/><path d="M785.4 166.1l5.5 14.6" stroke="#fff" stroke-opacity=".85" stroke-width="1.28"/><path d="M790.0 166.1l5.5 14.6" stroke="#fff" stroke-opacity=".85" stroke-width="1.28"/><rect x="785.6" y="162.3" width="5.1" height="3.2" fill="#b57b46"/><circle cx="813.3" cy="175.4" r="11.2" fill="#f1b08e"/><path d="M803.8 170.4l3.1 -2.2l3.1 2.2l3.1 -2.2l3.1 2.2l3.1 -2.2l3.1 2.2" stroke="#fff" fill="none" stroke-width="1.34"/><path d="M803.8 176.0l3.1 -2.2l3.1 2.2l3.1 -2.2l3.1 2.2l3.1 -2.2l3.1 2.2" stroke="#fff" fill="none" stroke-width="1.34"/><path d="M803.8 181.0l3.1 -2.2l3.1 2.2l3.1 -2.2l3.1 2.2l3.1 -2.2l3.1 2.2" stroke="#fff" fill="none" stroke-width="1.34"/><rect x="810.2" y="161.8" width="6.3" height="3.9" fill="#b57b46"/><circle cx="712.3" cy="196.9" r="11.7" fill="#f1b08e"/><rect x="709.0" y="182.7" width="6.5" height="4.1" fill="#b57b46"/><circle cx="733.4" cy="192.4" r="10.4" fill="#f2c4b0"/><rect x="730.5" y="179.7" width="5.8" height="3.6" fill="#b57b46"/><circle cx="753.9" cy="192.6" r="10.5" fill="#c9c0bc"/><circle cx="749.7" cy="189.4" r="1.9" fill="#fff"/><circle cx="757.6" cy="188.9" r="1.9" fill="#fff"/><circle cx="753.9" cy="194.7" r="1.9" fill="#fff"/><circle cx="750.2" cy="197.8" r="1.9" fill="#fff"/><circle cx="758.1" cy="197.3" r="1.9" fill="#fff"/><rect x="751.0" y="179.7" width="5.9" height="3.7" fill="#b57b46"/><circle cx="775.0" cy="200.4" r="12.4" fill="#7fa679"/><circle cx="775.0" cy="200.4" r="7.7" fill="none" stroke="#dbe8c8" stroke-width="1.73"/><circle cx="775.0" cy="200.4" r="3.1" fill="#dbe8c8"/><rect x="771.5" y="185.3" width="6.9" height="4.3" fill="#b57b46"/><circle cx="799.6" cy="192.4" r="9.9" fill="#c48b4f"/><rect x="789.7" y="188.9" width="19.8" height="6.9" fill="#f6eadb"/><rect x="796.8" y="180.3" width="5.5" height="3.5" fill="#b57b46"/><circle cx="724.4" cy="211.2" r="10.5" fill="#f5dcaa"/><rect x="721.5" y="198.4" width="5.9" height="3.7" fill="#b57b46"/><circle cx="743.1" cy="210.8" r="11.6" fill="#f1b08e"/><rect x="739.8" y="196.6" width="6.5" height="4.1" fill="#b57b46"/><circle cx="762.6" cy="210.7" r="10.3" fill="#f2c4b0"/><rect x="759.7" y="198.1" width="5.8" height="3.6" fill="#b57b46"/><circle cx="780.2" cy="215.3" r="11.6" fill="#c48b4f"/><rect x="768.6" y="211.3" width="23.2" height="8.1" fill="#f6eadb"/><rect x="777.0" y="201.2" width="6.5" height="4.1" fill="#b57b46"/><circle cx="809.8" cy="211.5" r="10.7" fill="#7fa679"/><circle cx="809.8" cy="211.5" r="6.6" fill="none" stroke="#dbe8c8" stroke-width="1.50"/><circle cx="809.8" cy="211.5" r="2.7" fill="#dbe8c8"/><rect x="806.8" y="198.5" width="6.0" height="3.7" fill="#b57b46"/><circle cx="703.2" cy="230.9" r="8.8" fill="#7fa679"/><circle cx="703.2" cy="230.9" r="5.5" fill="none" stroke="#dbe8c8" stroke-width="1.24"/><circle cx="703.2" cy="230.9" r="2.2" fill="#dbe8c8"/><rect x="700.7" y="220.1" width="5.0" height="3.1" fill="#b57b46"/><circle cx="732.2" cy="238.5" r="11.1" fill="#cfe0b9"/><rect x="729.1" y="225.0" width="6.2" height="3.9" fill="#b57b46"/><circle cx="750.1" cy="240.1" r="9.5" fill="#c48b4f"/><rect x="740.6" y="236.8" width="19.0" height="6.6" fill="#f6eadb"/><rect x="747.4" y="228.5" width="5.3" height="3.3" fill="#b57b46"/><circle cx="778.9" cy="238.1" r="10.8" fill="#c9c0bc"/><circle cx="774.6" cy="234.8" r="1.9" fill="#fff"/><circle cx="782.6" cy="234.3" r="1.9" fill="#fff"/><circle cx="778.9" cy="240.2" r="1.9" fill="#fff"/><circle cx="775.1" cy="243.4" r="1.9" fill="#fff"/><circle cx="783.2" cy="242.9" r="1.9" fill="#fff"/><rect x="775.9" y="224.9" width="6.0" height="3.8" fill="#b57b46"/><circle cx="792.6" cy="240.7" r="10.4" fill="#f1b08e"/><path d="M783.7 236.0l2.9 -2.1l2.9 2.1l2.9 -2.1l2.9 2.1l2.9 -2.1l2.9 2.1" stroke="#fff" fill="none" stroke-width="1.25"/><path d="M783.7 241.2l2.9 -2.1l2.9 2.1l2.9 -2.1l2.9 2.1l2.9 -2.1l2.9 2.1" stroke="#fff" fill="none" stroke-width="1.25"/><path d="M783.7 245.9l2.9 -2.1l2.9 2.1l2.9 -2.1l2.9 2.1l2.9 -2.1l2.9 2.1" stroke="#fff" fill="none" stroke-width="1.25"/><rect x="789.6" y="227.9" width="5.9" height="3.7" fill="#b57b46"/></g><clipPath id="c14"><rect x="802.1999999999999" y="123" width="84.7" height="106.2" rx="0"/></clipPath><g clip-path="url(#c14)"><rect x="802.1999999999999" y="123" width="84.7" height="106.2" fill="#6a7d5d"/><circle cx="814.3" cy="135.5" r="1.7" fill="#98aa84" stroke="#c8d5b2" stroke-width="1"/><circle cx="825.7" cy="127.5" r="1.7" fill="#98aa84" stroke="#c8d5b2" stroke-width="1"/><circle cx="834.6" cy="133.2" r="1.7" fill="#98aa84" stroke="#c8d5b2" stroke-width="1"/><circle cx="857.1" cy="134.6" r="1.7" fill="#98aa84" stroke="#c8d5b2" stroke-width="1"/><circle cx="871.5" cy="134.7" r="1.7" fill="#98aa84" stroke="#c8d5b2" stroke-width="1"/><circle cx="806.9" cy="151.0" r="1.7" fill="#98aa84" stroke="#c8d5b2" stroke-width="1"/><circle cx="829.2" cy="145.5" r="1.7" fill="#98aa84" stroke="#c8d5b2" stroke-width="1"/><circle cx="842.3" cy="149.3" r="1.7" fill="#98aa84" stroke="#c8d5b2" stroke-width="1"/><circle cx="853.2" cy="147.5" r="1.7" fill="#98aa84" stroke="#c8d5b2" stroke-width="1"/><circle cx="877.7" cy="143.4" r="1.7" fill="#98aa84" stroke="#c8d5b2" stroke-width="1"/><circle cx="814.4" cy="165.2" r="1.7" fill="#98aa84" stroke="#c8d5b2" stroke-width="1"/><circle cx="830.8" cy="160.2" r="1.7" fill="#98aa84" stroke="#c8d5b2" stroke-width="1"/><circle cx="835.9" cy="166.8" r="1.7" fill="#98aa84" stroke="#c8d5b2" stroke-width="1"/><circle cx="861.9" cy="161.7" r="1.7" fill="#98aa84" stroke="#c8d5b2" stroke-width="1"/><circle cx="867.6" cy="158.2" r="1.7" fill="#98aa84" stroke="#c8d5b2" stroke-width="1"/><circle cx="812.0" cy="175.4" r="1.7" fill="#98aa84" stroke="#c8d5b2" stroke-width="1"/><circle cx="832.3" cy="179.6" r="1.7" fill="#98aa84" stroke="#c8d5b2" stroke-width="1"/><circle cx="837.5" cy="180.5" r="1.7" fill="#98aa84" stroke="#c8d5b2" stroke-width="1"/><circle cx="855.5" cy="184.5" r="1.7" fill="#98aa84" stroke="#c8d5b2" stroke-width="1"/><circle cx="879.2" cy="178.5" r="1.7" fill="#98aa84" stroke="#c8d5b2" stroke-width="1"/><circle cx="812.2" cy="196.9" r="1.7" fill="#98aa84" stroke="#c8d5b2" stroke-width="1"/><circle cx="830.3" cy="200.9" r="1.7" fill="#98aa84" stroke="#c8d5b2" stroke-width="1"/><circle cx="835.0" cy="192.2" r="1.7" fill="#98aa84" stroke="#c8d5b2" stroke-width="1"/><circle cx="859.0" cy="191.3" r="1.7" fill="#98aa84" stroke="#c8d5b2" stroke-width="1"/><circle cx="874.6" cy="188.3" r="1.7" fill="#98aa84" stroke="#c8d5b2" stroke-width="1"/><circle cx="815.5" cy="210.3" r="1.7" fill="#98aa84" stroke="#c8d5b2" stroke-width="1"/><circle cx="820.5" cy="212.3" r="1.7" fill="#98aa84" stroke="#c8d5b2" stroke-width="1"/><circle cx="839.0" cy="205.6" r="1.7" fill="#98aa84" stroke="#c8d5b2" stroke-width="1"/><circle cx="857.3" cy="204.8" r="1.7" fill="#98aa84" stroke="#c8d5b2" stroke-width="1"/><circle cx="869.2" cy="215.1" r="1.7" fill="#98aa84" stroke="#c8d5b2" stroke-width="1"/><circle cx="812.9" cy="218.8" r="1.7" fill="#98aa84" stroke="#c8d5b2" stroke-width="1"/><circle cx="829.9" cy="218.9" r="1.7" fill="#98aa84" stroke="#c8d5b2" stroke-width="1"/><circle cx="839.3" cy="231.5" r="1.7" fill="#98aa84" stroke="#c8d5b2" stroke-width="1"/><circle cx="859.2" cy="223.0" r="1.7" fill="#98aa84" stroke="#c8d5b2" stroke-width="1"/><circle cx="871.6" cy="224.2" r="1.7" fill="#98aa84" stroke="#c8d5b2" stroke-width="1"/></g><rect x="535.8" y="232.5" width="84.7" height="106.2" rx="0" fill="#6b8b6a"/><rect x="539.0" y="235.7" width="78.3" height="99.8" rx="0" fill="#fff"/><rect x="624.5999999999999" y="232.5" width="84.7" height="106.2" rx="0" fill="#1d525a"/><rect x="627.8" y="235.7" width="78.3" height="99.8" rx="0" fill="#fff"/><rect x="713.4" y="232.5" width="84.7" height="106.2" rx="0" fill="#fbe5c4"/><rect x="716.6" y="235.7" width="78.3" height="99.8" rx="0" fill="#fff"/><rect x="802.1999999999999" y="232.5" width="84.7" height="106.2" rx="0" fill="#dbeff0"/><rect x="805.4" y="235.7" width="78.3" height="99.8" rx="0" fill="#fff"/><clipPath id="c15"><rect x="535.8" y="345.8" width="84.7" height="53.2" rx="4"/></clipPath><g clip-path="url(#c15)"><rect x="535.8" y="345.8" width="84.7" height="53.2" fill="#2f5c66"/><circle cx="541.0" cy="350.1" r="1.45" fill="#9fc0c0"/><circle cx="548.9" cy="355.1" r="1.45" fill="#9fc0c0"/><circle cx="558.8" cy="351.4" r="1.45" fill="#9fc0c0"/><circle cx="579.0" cy="347.2" r="1.45" fill="#9fc0c0"/><circle cx="586.7" cy="352.6" r="1.45" fill="#9fc0c0"/><circle cx="592.7" cy="350.2" r="1.45" fill="#9fc0c0"/><circle cx="610.6" cy="350.9" r="1.45" fill="#9fc0c0"/><circle cx="622.0" cy="347.9" r="1.45" fill="#9fc0c0"/><circle cx="538.8" cy="358.7" r="1.45" fill="#9fc0c0"/><circle cx="552.6" cy="366.8" r="1.45" fill="#9fc0c0"/><circle cx="564.7" cy="365.3" r="1.45" fill="#9fc0c0"/><circle cx="573.8" cy="365.1" r="1.45" fill="#9fc0c0"/><circle cx="582.1" cy="360.5" r="1.45" fill="#9fc0c0"/><circle cx="599.1" cy="364.9" r="1.45" fill="#9fc0c0"/><circle cx="607.7" cy="358.4" r="1.45" fill="#9fc0c0"/><circle cx="617.4" cy="359.7" r="1.45" fill="#9fc0c0"/><circle cx="539.2" cy="376.9" r="1.45" fill="#9fc0c0"/><circle cx="549.6" cy="377.7" r="1.45" fill="#9fc0c0"/><circle cx="567.6" cy="369.3" r="1.45" fill="#9fc0c0"/><circle cx="573.7" cy="373.7" r="1.45" fill="#9fc0c0"/><circle cx="581.3" cy="373.0" r="1.45" fill="#9fc0c0"/><circle cx="601.4" cy="369.9" r="1.45" fill="#9fc0c0"/><circle cx="609.5" cy="370.0" r="1.45" fill="#9fc0c0"/><circle cx="620.5" cy="377.7" r="1.45" fill="#9fc0c0"/><circle cx="538.4" cy="380.0" r="1.45" fill="#9fc0c0"/><circle cx="548.4" cy="385.4" r="1.45" fill="#9fc0c0"/><circle cx="558.9" cy="380.8" r="1.45" fill="#9fc0c0"/><circle cx="574.9" cy="389.2" r="1.45" fill="#9fc0c0"/><circle cx="585.3" cy="383.9" r="1.45" fill="#9fc0c0"/><circle cx="598.7" cy="380.9" r="1.45" fill="#9fc0c0"/><circle cx="609.3" cy="381.7" r="1.45" fill="#9fc0c0"/><circle cx="620.8" cy="389.6" r="1.45" fill="#9fc0c0"/><circle cx="536.9" cy="396.7" r="1.45" fill="#9fc0c0"/><circle cx="553.7" cy="392.6" r="1.45" fill="#9fc0c0"/><circle cx="561.4" cy="401.1" r="1.45" fill="#9fc0c0"/><circle cx="580.0" cy="392.3" r="1.45" fill="#9fc0c0"/><circle cx="588.2" cy="400.7" r="1.45" fill="#9fc0c0"/><circle cx="594.7" cy="397.3" r="1.45" fill="#9fc0c0"/><circle cx="603.9" cy="394.8" r="1.45" fill="#9fc0c0"/><circle cx="621.5" cy="397.1" r="1.45" fill="#9fc0c0"/></g><clipPath id="c16"><rect x="624.5999999999999" y="345.8" width="84.7" height="53.2" rx="4"/></clipPath><g clip-path="url(#c16)"><rect x="624.5999999999999" y="345.8" width="84.7" height="53.2" fill="#f8caa2"/><circle cx="625.6" cy="351.8" r="0.9" fill="#a9d3e0" fill-opacity=".7"/><circle cx="636.5" cy="348.1" r="0.9" fill="#e9a38a" fill-opacity=".7"/><circle cx="669.9" cy="383.7" r="0.9" fill="#e9a38a" fill-opacity=".7"/><circle cx="637.1" cy="385.2" r="0.9" fill="#f5dcaa" fill-opacity=".7"/><circle cx="629.7" cy="358.1" r="0.9" fill="#f5dcaa" fill-opacity=".7"/><circle cx="662.5" cy="367.7" r="0.9" fill="#f5dcaa" fill-opacity=".7"/><circle cx="632.5" cy="346.9" r="0.9" fill="#a9d3e0" fill-opacity=".7"/><circle cx="653.5" cy="356.8" r="0.9" fill="#a9d3e0" fill-opacity=".7"/><circle cx="655.5" cy="396.6" r="0.9" fill="#e9a38a" fill-opacity=".7"/><circle cx="685.9" cy="367.9" r="0.9" fill="#f5dcaa" fill-opacity=".7"/><circle cx="671.0" cy="396.5" r="0.9" fill="#e9a38a" fill-opacity=".7"/><circle cx="654.7" cy="356.6" r="0.9" fill="#a9d3e0" fill-opacity=".7"/><circle cx="627.2" cy="384.9" r="0.9" fill="#a9d3e0" fill-opacity=".7"/><circle cx="679.8" cy="357.4" r="0.9" fill="#a9d3e0" fill-opacity=".7"/><circle cx="686.4" cy="356.1" r="0.9" fill="#f5dcaa" fill-opacity=".7"/><circle cx="694.0" cy="371.4" r="0.9" fill="#a9d3e0" fill-opacity=".7"/><circle cx="653.1" cy="363.6" r="0.9" fill="#a9d3e0" fill-opacity=".7"/><circle cx="665.4" cy="380.4" r="0.9" fill="#a9d3e0" fill-opacity=".7"/><circle cx="706.0" cy="397.7" r="0.9" fill="#e9a38a" fill-opacity=".7"/><circle cx="691.5" cy="362.1" r="0.9" fill="#e9a38a" fill-opacity=".7"/><circle cx="672.0" cy="395.6" r="0.9" fill="#f5dcaa" fill-opacity=".7"/><circle cx="649.6" cy="355.0" r="0.9" fill="#e9a38a" fill-opacity=".7"/><circle cx="702.6" cy="377.8" r="0.9" fill="#f5dcaa" fill-opacity=".7"/><circle cx="705.7" cy="381.4" r="0.9" fill="#a9d3e0" fill-opacity=".7"/><circle cx="701.7" cy="380.3" r="0.9" fill="#e9a38a" fill-opacity=".7"/><circle cx="634.3" cy="356.6" r="0.9" fill="#a9d3e0" fill-opacity=".7"/><circle cx="662.3" cy="387.8" r="0.9" fill="#f5dcaa" fill-opacity=".7"/><circle cx="685.1" cy="360.0" r="0.9" fill="#f5dcaa" fill-opacity=".7"/><circle cx="634.7" cy="356.1" r="0.9" fill="#a9d3e0" fill-opacity=".7"/><circle cx="638.4" cy="398.5" r="0.9" fill="#e9a38a" fill-opacity=".7"/><circle cx="664.9" cy="372.3" r="0.9" fill="#f5dcaa" fill-opacity=".7"/><circle cx="648.1" cy="365.6" r="0.9" fill="#f5dcaa" fill-opacity=".7"/><circle cx="666.1" cy="377.2" r="0.9" fill="#e9a38a" fill-opacity=".7"/><circle cx="665.7" cy="388.2" r="0.9" fill="#f5dcaa" fill-opacity=".7"/><circle cx="683.3" cy="397.6" r="0.9" fill="#e9a38a" fill-opacity=".7"/><circle cx="646.2" cy="386.5" r="0.9" fill="#a9d3e0" fill-opacity=".7"/><circle cx="654.1" cy="346.4" r="0.9" fill="#a9d3e0" fill-opacity=".7"/><circle cx="618.6" cy="337.8" r="11.6" fill="#c48b4f"/><rect x="607.0" y="333.8" width="23.1" height="8.1" fill="#f6eadb"/><rect x="615.4" y="323.7" width="6.5" height="4.0" fill="#b57b46"/><circle cx="636.0" cy="343.9" r="7.8" fill="#f1b08e"/><path d="M629.8 337.6l4.7 12.4" stroke="#fff" stroke-opacity=".85" stroke-width="1.09"/><path d="M633.7 337.6l4.7 12.4" stroke="#fff" stroke-opacity=".85" stroke-width="1.09"/><path d="M637.6 337.6l4.7 12.4" stroke="#fff" stroke-opacity=".85" stroke-width="1.09"/><rect x="633.8" y="334.4" width="4.3" height="2.7" fill="#b57b46"/><circle cx="671.8" cy="343.9" r="10.3" fill="#cfe0b9"/><rect x="668.9" y="331.3" width="5.8" height="3.6" fill="#b57b46"/><circle cx="690.2" cy="338.8" r="10.4" fill="#cfe0b9"/><rect x="687.3" y="326.1" width="5.8" height="3.6" fill="#b57b46"/><circle cx="709.5" cy="334.2" r="10.0" fill="#cfe0b9"/><rect x="706.7" y="322.0" width="5.6" height="3.5" fill="#b57b46"/><circle cx="626.9" cy="357.6" r="9.7" fill="#c9c0bc"/><circle cx="623.0" cy="354.7" r="1.7" fill="#fff"/><circle cx="630.3" cy="354.2" r="1.7" fill="#fff"/><circle cx="626.9" cy="359.6" r="1.7" fill="#fff"/><circle cx="623.5" cy="362.5" r="1.7" fill="#fff"/><circle cx="630.8" cy="362.0" r="1.7" fill="#fff"/><rect x="624.2" y="345.8" width="5.4" height="3.4" fill="#b57b46"/><circle cx="656.9" cy="365.9" r="10.3" fill="#c48b4f"/><rect x="646.6" y="362.2" width="20.7" height="7.2" fill="#f6eadb"/><rect x="654.0" y="353.2" width="5.8" height="3.6" fill="#b57b46"/><circle cx="670.8" cy="361.9" r="10.5" fill="#f1b08e"/><path d="M662.4 353.5l6.3 16.8" stroke="#fff" stroke-opacity=".85" stroke-width="1.47"/><path d="M667.7 353.5l6.3 16.8" stroke="#fff" stroke-opacity=".85" stroke-width="1.47"/><path d="M672.9 353.5l6.3 16.8" stroke="#fff" stroke-opacity=".85" stroke-width="1.47"/><rect x="667.9" y="349.1" width="5.9" height="3.7" fill="#b57b46"/><circle cx="697.7" cy="365.0" r="8.4" fill="#f1b08e"/><rect x="695.4" y="354.8" width="4.7" height="2.9" fill="#b57b46"/><circle cx="731.4" cy="356.2" r="11.3" fill="#8e4a34"/><path d="M721.8 351.1l3.2 -2.3l3.2 2.3l3.2 -2.3l3.2 2.3l3.2 -2.3l3.2 2.3" stroke="#fff" fill="none" stroke-width="1.36"/><path d="M721.8 356.7l3.2 -2.3l3.2 2.3l3.2 -2.3l3.2 2.3l3.2 -2.3l3.2 2.3" stroke="#fff" fill="none" stroke-width="1.36"/><path d="M721.8 361.8l3.2 -2.3l3.2 2.3l3.2 -2.3l3.2 2.3l3.2 -2.3l3.2 2.3" stroke="#fff" fill="none" stroke-width="1.36"/><rect x="728.3" y="342.3" width="6.4" height="4.0" fill="#b57b46"/><circle cx="617.0" cy="385.1" r="8.7" fill="#f1b08e"/><rect x="614.6" y="374.5" width="4.9" height="3.0" fill="#b57b46"/><circle cx="640.5" cy="383.3" r="8.4" fill="#a3553b"/><path d="M633.3 379.5l2.4 -1.7l2.4 1.7l2.4 -1.7l2.4 1.7l2.4 -1.7l2.4 1.7" stroke="#fff" fill="none" stroke-width="1.01"/><path d="M633.3 383.7l2.4 -1.7l2.4 1.7l2.4 -1.7l2.4 1.7l2.4 -1.7l2.4 1.7" stroke="#fff" fill="none" stroke-width="1.01"/><path d="M633.3 387.5l2.4 -1.7l2.4 1.7l2.4 -1.7l2.4 1.7l2.4 -1.7l2.4 1.7" stroke="#fff" fill="none" stroke-width="1.01"/><rect x="638.1" y="373.0" width="4.7" height="2.9" fill="#b57b46"/><circle cx="663.7" cy="376.0" r="8.4" fill="#c9c0bc"/><circle cx="660.4" cy="373.5" r="1.5" fill="#fff"/><circle cx="666.7" cy="373.1" r="1.5" fill="#fff"/><circle cx="663.7" cy="377.7" r="1.5" fill="#fff"/><circle cx="660.8" cy="380.2" r="1.5" fill="#fff"/><circle cx="667.1" cy="379.8" r="1.5" fill="#fff"/><rect x="661.4" y="365.7" width="4.7" height="2.9" fill="#b57b46"/><circle cx="686.5" cy="387.0" r="8.0" fill="#f1b08e"/><path d="M680.1 380.6l4.8 12.8" stroke="#fff" stroke-opacity=".85" stroke-width="1.12"/><path d="M684.1 380.6l4.8 12.8" stroke="#fff" stroke-opacity=".85" stroke-width="1.12"/><path d="M688.1 380.6l4.8 12.8" stroke="#fff" stroke-opacity=".85" stroke-width="1.12"/><rect x="684.2" y="377.2" width="4.5" height="2.8" fill="#b57b46"/><circle cx="720.2" cy="385.9" r="10.4" fill="#a9d3e0"/><path d="M711.9 377.6l6.2 16.6" stroke="#fff" stroke-opacity=".85" stroke-width="1.45"/><path d="M717.0 377.6l6.2 16.6" stroke="#fff" stroke-opacity=".85" stroke-width="1.45"/><path d="M722.2 377.6l6.2 16.6" stroke="#fff" stroke-opacity=".85" stroke-width="1.45"/><rect x="717.3" y="373.3" width="5.8" height="3.6" fill="#b57b46"/><circle cx="635.7" cy="398.0" r="8.3" fill="#8e4a34"/><path d="M628.6 394.3l2.3 -1.7l2.3 1.7l2.3 -1.7l2.3 1.7l2.3 -1.7l2.3 1.7" stroke="#fff" fill="none" stroke-width="1.00"/><path d="M628.6 398.4l2.3 -1.7l2.3 1.7l2.3 -1.7l2.3 1.7l2.3 -1.7l2.3 1.7" stroke="#fff" fill="none" stroke-width="1.00"/><path d="M628.6 402.2l2.3 -1.7l2.3 1.7l2.3 -1.7l2.3 1.7l2.3 -1.7l2.3 1.7" stroke="#fff" fill="none" stroke-width="1.00"/><rect x="633.3" y="387.9" width="4.6" height="2.9" fill="#b57b46"/><circle cx="653.1" cy="398.3" r="9.5" fill="#8e4a34"/><path d="M645.1 394.1l2.7 -1.9l2.7 1.9l2.7 -1.9l2.7 1.9l2.7 -1.9l2.7 1.9" stroke="#fff" fill="none" stroke-width="1.14"/><path d="M645.1 398.8l2.7 -1.9l2.7 1.9l2.7 -1.9l2.7 1.9l2.7 -1.9l2.7 1.9" stroke="#fff" fill="none" stroke-width="1.14"/><path d="M645.1 403.1l2.7 -1.9l2.7 1.9l2.7 -1.9l2.7 1.9l2.7 -1.9l2.7 1.9" stroke="#fff" fill="none" stroke-width="1.14"/><rect x="650.5" y="386.8" width="5.3" height="3.3" fill="#b57b46"/><circle cx="674.2" cy="398.0" r="8.7" fill="#f5d6a0"/><path d="M667.2 391.0l5.2 13.9" stroke="#fff" stroke-opacity=".85" stroke-width="1.22"/><path d="M671.6 391.0l5.2 13.9" stroke="#fff" stroke-opacity=".85" stroke-width="1.22"/><path d="M675.9 391.0l5.2 13.9" stroke="#fff" stroke-opacity=".85" stroke-width="1.22"/><rect x="671.8" y="387.3" width="4.9" height="3.0" fill="#b57b46"/><circle cx="698.6" cy="406.9" r="11.5" fill="#f5d6a0"/><path d="M689.5 397.7l6.9 18.3" stroke="#fff" stroke-opacity=".85" stroke-width="1.61"/><path d="M695.2 397.7l6.9 18.3" stroke="#fff" stroke-opacity=".85" stroke-width="1.61"/><path d="M700.9 397.7l6.9 18.3" stroke="#fff" stroke-opacity=".85" stroke-width="1.61"/><rect x="695.4" y="392.9" width="6.4" height="4.0" fill="#b57b46"/><circle cx="720.3" cy="403.2" r="10.7" fill="#7fa679"/><circle cx="720.3" cy="403.2" r="6.6" fill="none" stroke="#dbe8c8" stroke-width="1.49"/><circle cx="720.3" cy="403.2" r="2.7" fill="#dbe8c8"/><rect x="717.3" y="390.1" width="6.0" height="3.7" fill="#b57b46"/><circle cx="619.9" cy="425.1" r="7.6" fill="#cfe0b9"/><rect x="617.7" y="415.8" width="4.3" height="2.7" fill="#b57b46"/><circle cx="647.8" cy="424.6" r="9.7" fill="#f5dcaa"/><rect x="645.0" y="412.8" width="5.4" height="3.4" fill="#b57b46"/><circle cx="669.6" cy="420.7" r="8.4" fill="#a9d3e0"/><path d="M662.9 413.9l5.1 13.5" stroke="#fff" stroke-opacity=".85" stroke-width="1.18"/><path d="M667.1 413.9l5.1 13.5" stroke="#fff" stroke-opacity=".85" stroke-width="1.18"/><path d="M671.3 413.9l5.1 13.5" stroke="#fff" stroke-opacity=".85" stroke-width="1.18"/><rect x="667.2" y="410.4" width="4.7" height="2.9" fill="#b57b46"/><circle cx="682.9" cy="423.1" r="11.4" fill="#f1b08e"/><path d="M673.8 414.0l6.9 18.3" stroke="#fff" stroke-opacity=".85" stroke-width="1.60"/><path d="M679.5 414.0l6.9 18.3" stroke="#fff" stroke-opacity=".85" stroke-width="1.60"/><path d="M685.2 414.0l6.9 18.3" stroke="#fff" stroke-opacity=".85" stroke-width="1.60"/><rect x="679.7" y="409.2" width="6.4" height="4.0" fill="#b57b46"/><circle cx="718.4" cy="420.8" r="11.2" fill="#f2c4b0"/><rect x="715.3" y="407.1" width="6.3" height="3.9" fill="#b57b46"/></g><clipPath id="c17"><rect x="713.4" y="345.8" width="84.7" height="53.2" rx="0"/></clipPath><g clip-path="url(#c17)"><rect x="713.4" y="345.8" width="84.7" height="53.2" fill="#f9c99b"/><circle cx="717.6" cy="348.0" r="3.2" fill="#c08a57"/><circle cx="734.3" cy="348.0" r="3.2" fill="#c08a57"/><circle cx="751.0" cy="348.0" r="3.2" fill="#c08a57"/><circle cx="767.7" cy="348.0" r="3.2" fill="#c08a57"/><circle cx="784.4" cy="348.0" r="3.2" fill="#c08a57"/><circle cx="801.1" cy="348.0" r="3.2" fill="#c08a57"/><circle cx="725.9" cy="356.2" r="3.2" fill="#c08a57"/><circle cx="742.6" cy="356.2" r="3.2" fill="#c08a57"/><circle cx="759.4" cy="356.2" r="3.2" fill="#c08a57"/><circle cx="776.1" cy="356.2" r="3.2" fill="#c08a57"/><circle cx="792.8" cy="356.2" r="3.2" fill="#c08a57"/><circle cx="717.6" cy="364.5" r="3.2" fill="#c08a57"/><circle cx="734.3" cy="364.5" r="3.2" fill="#c08a57"/><circle cx="751.0" cy="364.5" r="3.2" fill="#c08a57"/><circle cx="767.7" cy="364.5" r="3.2" fill="#c08a57"/><circle cx="784.4" cy="364.5" r="3.2" fill="#c08a57"/><circle cx="801.1" cy="364.5" r="3.2" fill="#c08a57"/><circle cx="725.9" cy="372.8" r="3.2" fill="#c08a57"/><circle cx="742.6" cy="372.8" r="3.2" fill="#c08a57"/><circle cx="759.4" cy="372.8" r="3.2" fill="#c08a57"/><circle cx="776.1" cy="372.8" r="3.2" fill="#c08a57"/><circle cx="792.8" cy="372.8" r="3.2" fill="#c08a57"/><circle cx="717.6" cy="381.0" r="3.2" fill="#c08a57"/><circle cx="734.3" cy="381.0" r="3.2" fill="#c08a57"/><circle cx="751.0" cy="381.0" r="3.2" fill="#c08a57"/><circle cx="767.7" cy="381.0" r="3.2" fill="#c08a57"/><circle cx="784.4" cy="381.0" r="3.2" fill="#c08a57"/><circle cx="801.1" cy="381.0" r="3.2" fill="#c08a57"/><circle cx="725.9" cy="389.2" r="3.2" fill="#c08a57"/><circle cx="742.6" cy="389.2" r="3.2" fill="#c08a57"/><circle cx="759.4" cy="389.2" r="3.2" fill="#c08a57"/><circle cx="776.1" cy="389.2" r="3.2" fill="#c08a57"/><circle cx="792.8" cy="389.2" r="3.2" fill="#c08a57"/><circle cx="717.6" cy="397.5" r="3.2" fill="#c08a57"/><circle cx="734.3" cy="397.5" r="3.2" fill="#c08a57"/><circle cx="751.0" cy="397.5" r="3.2" fill="#c08a57"/><circle cx="767.7" cy="397.5" r="3.2" fill="#c08a57"/><circle cx="784.4" cy="397.5" r="3.2" fill="#c08a57"/><circle cx="801.1" cy="397.5" r="3.2" fill="#c08a57"/></g><clipPath id="c18"><rect x="802.1999999999999" y="345.8" width="84.7" height="53.2" rx="0"/></clipPath><g clip-path="url(#c18)"><rect x="802.1999999999999" y="345.8" width="84.7" height="53.2" fill="#fdfbf8"/><circle cx="834.5" cy="358.1" r="0.9" fill="#e9a38a" fill-opacity=".7"/><circle cx="878.6" cy="366.3" r="0.9" fill="#f5dcaa" fill-opacity=".7"/><circle cx="826.2" cy="360.5" r="0.9" fill="#f5dcaa" fill-opacity=".7"/><circle cx="866.8" cy="346.3" r="0.9" fill="#e9a38a" fill-opacity=".7"/><circle cx="858.2" cy="390.5" r="0.9" fill="#a9d3e0" fill-opacity=".7"/><circle cx="882.6" cy="398.3" r="0.9" fill="#f5dcaa" fill-opacity=".7"/><circle cx="829.2" cy="359.5" r="0.9" fill="#f5dcaa" fill-opacity=".7"/><circle cx="854.8" cy="349.0" r="0.9" fill="#f5dcaa" fill-opacity=".7"/><circle cx="805.0" cy="391.9" r="0.9" fill="#f5dcaa" fill-opacity=".7"/><circle cx="820.5" cy="384.4" r="0.9" fill="#f5dcaa" fill-opacity=".7"/><circle cx="842.4" cy="375.3" r="0.9" fill="#e9a38a" fill-opacity=".7"/><circle cx="812.7" cy="394.4" r="0.9" fill="#f5dcaa" fill-opacity=".7"/><circle cx="878.5" cy="355.3" r="0.9" fill="#a9d3e0" fill-opacity=".7"/><circle cx="829.1" cy="378.8" r="0.9" fill="#f5dcaa" fill-opacity=".7"/><circle cx="851.1" cy="368.9" r="0.9" fill="#e9a38a" fill-opacity=".7"/><circle cx="827.7" cy="353.6" r="0.9" fill="#f5dcaa" fill-opacity=".7"/><circle cx="810.1" cy="346.9" r="0.9" fill="#f5dcaa" fill-opacity=".7"/><circle cx="844.0" cy="366.8" r="0.9" fill="#e9a38a" fill-opacity=".7"/><circle cx="809.5" cy="349.9" r="0.9" fill="#f5dcaa" fill-opacity=".7"/><circle cx="836.2" cy="374.1" r="0.9" fill="#a9d3e0" fill-opacity=".7"/><circle cx="847.9" cy="392.6" r="0.9" fill="#f5dcaa" fill-opacity=".7"/><circle cx="841.5" cy="355.2" r="0.9" fill="#e9a38a" fill-opacity=".7"/><circle cx="862.9" cy="384.1" r="0.9" fill="#f5dcaa" fill-opacity=".7"/><circle cx="876.3" cy="385.8" r="0.9" fill="#e9a38a" fill-opacity=".7"/><circle cx="885.8" cy="383.3" r="0.9" fill="#a9d3e0" fill-opacity=".7"/><circle cx="857.7" cy="385.7" r="0.9" fill="#f5dcaa" fill-opacity=".7"/><circle cx="847.0" cy="377.8" r="0.9" fill="#e9a38a" fill-opacity=".7"/><circle cx="883.7" cy="358.7" r="0.9" fill="#a9d3e0" fill-opacity=".7"/><circle cx="833.0" cy="370.3" r="0.9" fill="#f5dcaa" fill-opacity=".7"/><circle cx="837.0" cy="369.7" r="0.9" fill="#f5dcaa" fill-opacity=".7"/><circle cx="825.6" cy="357.1" r="0.9" fill="#f5dcaa" fill-opacity=".7"/><circle cx="823.3" cy="365.9" r="0.9" fill="#f5dcaa" fill-opacity=".7"/><circle cx="829.8" cy="395.0" r="0.9" fill="#a9d3e0" fill-opacity=".7"/><circle cx="868.9" cy="361.5" r="0.9" fill="#a9d3e0" fill-opacity=".7"/><circle cx="864.2" cy="357.2" r="0.9" fill="#e9a38a" fill-opacity=".7"/><circle cx="820.3" cy="357.8" r="0.9" fill="#a9d3e0" fill-opacity=".7"/><circle cx="858.7" cy="349.2" r="0.9" fill="#e9a38a" fill-opacity=".7"/><circle cx="795.7" cy="340.4" r="9.5" fill="#7fa679"/><circle cx="795.7" cy="340.4" r="5.9" fill="none" stroke="#dbe8c8" stroke-width="1.34"/><circle cx="795.7" cy="340.4" r="2.4" fill="#dbe8c8"/><rect x="793.0" y="328.7" width="5.3" height="3.3" fill="#b57b46"/><circle cx="815.1" cy="341.1" r="8.0" fill="#f5d6a0"/><path d="M808.7 334.7l4.8 12.9" stroke="#fff" stroke-opacity=".85" stroke-width="1.13"/><path d="M812.7 334.7l4.8 12.9" stroke="#fff" stroke-opacity=".85" stroke-width="1.13"/><path d="M816.7 334.7l4.8 12.9" stroke="#fff" stroke-opacity=".85" stroke-width="1.13"/><rect x="812.8" y="331.3" width="4.5" height="2.8" fill="#b57b46"/><circle cx="846.5" cy="334.2" r="10.7" fill="#a3553b"/><path d="M837.4 329.4l3.0 -2.1l3.0 2.1l3.0 -2.1l3.0 2.1l3.0 -2.1l3.0 2.1" stroke="#fff" fill="none" stroke-width="1.28"/><path d="M837.4 334.7l3.0 -2.1l3.0 2.1l3.0 -2.1l3.0 2.1l3.0 -2.1l3.0 2.1" stroke="#fff" fill="none" stroke-width="1.28"/><path d="M837.4 339.5l3.0 -2.1l3.0 2.1l3.0 -2.1l3.0 2.1l3.0 -2.1l3.0 2.1" stroke="#fff" fill="none" stroke-width="1.28"/><rect x="843.5" y="321.2" width="6.0" height="3.7" fill="#b57b46"/><circle cx="872.7" cy="343.2" r="7.7" fill="#c48b4f"/><rect x="865.0" y="340.5" width="15.4" height="5.4" fill="#f6eadb"/><rect x="870.5" y="333.9" width="4.3" height="2.7" fill="#b57b46"/><circle cx="893.0" cy="338.8" r="10.2" fill="#c48b4f"/><rect x="882.8" y="335.2" width="20.4" height="7.1" fill="#f6eadb"/><rect x="890.1" y="326.4" width="5.7" height="3.6" fill="#b57b46"/><circle cx="805.7" cy="366.3" r="11.4" fill="#f1b08e"/><path d="M796.0 361.1l3.2 -2.3l3.2 2.3l3.2 -2.3l3.2 2.3l3.2 -2.3l3.2 2.3" stroke="#fff" fill="none" stroke-width="1.37"/><path d="M796.0 366.9l3.2 -2.3l3.2 2.3l3.2 -2.3l3.2 2.3l3.2 -2.3l3.2 2.3" stroke="#fff" fill="none" stroke-width="1.37"/><path d="M796.0 372.0l3.2 -2.3l3.2 2.3l3.2 -2.3l3.2 2.3l3.2 -2.3l3.2 2.3" stroke="#fff" fill="none" stroke-width="1.37"/><rect x="802.5" y="352.3" width="6.4" height="4.0" fill="#b57b46"/><circle cx="833.4" cy="362.3" r="8.4" fill="#a3553b"/><path d="M826.2 358.5l2.4 -1.7l2.4 1.7l2.4 -1.7l2.4 1.7l2.4 -1.7l2.4 1.7" stroke="#fff" fill="none" stroke-width="1.01"/><path d="M826.2 362.7l2.4 -1.7l2.4 1.7l2.4 -1.7l2.4 1.7l2.4 -1.7l2.4 1.7" stroke="#fff" fill="none" stroke-width="1.01"/><path d="M826.2 366.5l2.4 -1.7l2.4 1.7l2.4 -1.7l2.4 1.7l2.4 -1.7l2.4 1.7" stroke="#fff" fill="none" stroke-width="1.01"/><rect x="831.0" y="352.0" width="4.7" height="2.9" fill="#b57b46"/><circle cx="851.9" cy="356.0" r="9.1" fill="#f1b08e"/><path d="M844.6 348.7l5.5 14.5" stroke="#fff" stroke-opacity=".85" stroke-width="1.27"/><path d="M849.2 348.7l5.5 14.5" stroke="#fff" stroke-opacity=".85" stroke-width="1.27"/><path d="M853.7 348.7l5.5 14.5" stroke="#fff" stroke-opacity=".85" stroke-width="1.27"/><rect x="849.3" y="344.9" width="5.1" height="3.2" fill="#b57b46"/><circle cx="884.3" cy="356.3" r="9.9" fill="#cfe0b9"/><rect x="881.5" y="344.2" width="5.6" height="3.5" fill="#b57b46"/><circle cx="907.3" cy="362.2" r="8.5" fill="#cfe0b9"/><rect x="904.9" y="351.8" width="4.8" height="3.0" fill="#b57b46"/><circle cx="796.4" cy="376.5" r="8.3" fill="#a9d3e0"/><path d="M789.7 369.9l5.0 13.3" stroke="#fff" stroke-opacity=".85" stroke-width="1.16"/><path d="M793.9 369.9l5.0 13.3" stroke="#fff" stroke-opacity=".85" stroke-width="1.16"/><path d="M798.0 369.9l5.0 13.3" stroke="#fff" stroke-opacity=".85" stroke-width="1.16"/><rect x="794.0" y="366.4" width="4.6" height="2.9" fill="#b57b46"/><circle cx="812.8" cy="380.3" r="11.3" fill="#8e4a34"/><path d="M803.2 375.2l3.2 -2.3l3.2 2.3l3.2 -2.3l3.2 2.3l3.2 -2.3l3.2 2.3" stroke="#fff" fill="none" stroke-width="1.36"/><path d="M803.2 380.9l3.2 -2.3l3.2 2.3l3.2 -2.3l3.2 2.3l3.2 -2.3l3.2 2.3" stroke="#fff" fill="none" stroke-width="1.36"/><path d="M803.2 386.0l3.2 -2.3l3.2 2.3l3.2 -2.3l3.2 2.3l3.2 -2.3l3.2 2.3" stroke="#fff" fill="none" stroke-width="1.36"/><rect x="809.7" y="366.4" width="6.4" height="4.0" fill="#b57b46"/><circle cx="844.6" cy="387.5" r="10.9" fill="#f2c4b0"/><rect x="841.6" y="374.3" width="6.1" height="3.8" fill="#b57b46"/><circle cx="870.7" cy="382.2" r="9.2" fill="#a9d3e0"/><path d="M863.3 374.9l5.5 14.8" stroke="#fff" stroke-opacity=".85" stroke-width="1.29"/><path d="M867.9 374.9l5.5 14.8" stroke="#fff" stroke-opacity=".85" stroke-width="1.29"/><path d="M872.5 374.9l5.5 14.8" stroke="#fff" stroke-opacity=".85" stroke-width="1.29"/><rect x="868.1" y="371.0" width="5.2" height="3.2" fill="#b57b46"/><circle cx="897.0" cy="381.5" r="9.3" fill="#8e4a34"/><path d="M889.1 377.3l2.6 -1.9l2.6 1.9l2.6 -1.9l2.6 1.9l2.6 -1.9l2.6 1.9" stroke="#fff" fill="none" stroke-width="1.11"/><path d="M889.1 382.0l2.6 -1.9l2.6 1.9l2.6 -1.9l2.6 1.9l2.6 -1.9l2.6 1.9" stroke="#fff" fill="none" stroke-width="1.11"/><path d="M889.1 386.2l2.6 -1.9l2.6 1.9l2.6 -1.9l2.6 1.9l2.6 -1.9l2.6 1.9" stroke="#fff" fill="none" stroke-width="1.11"/><rect x="894.4" y="370.2" width="5.2" height="3.2" fill="#b57b46"/><circle cx="802.2" cy="402.9" r="9.2" fill="#f1b08e"/><path d="M794.4 398.8l2.6 -1.8l2.6 1.8l2.6 -1.8l2.6 1.8l2.6 -1.8l2.6 1.8" stroke="#fff" fill="none" stroke-width="1.10"/><path d="M794.4 403.4l2.6 -1.8l2.6 1.8l2.6 -1.8l2.6 1.8l2.6 -1.8l2.6 1.8" stroke="#fff" fill="none" stroke-width="1.10"/><path d="M794.4 407.5l2.6 -1.8l2.6 1.8l2.6 -1.8l2.6 1.8l2.6 -1.8l2.6 1.8" stroke="#fff" fill="none" stroke-width="1.10"/><rect x="799.6" y="391.7" width="5.1" height="3.2" fill="#b57b46"/><circle cx="832.3" cy="399.4" r="8.5" fill="#f2c4b0"/><rect x="829.9" y="389.1" width="4.8" height="3.0" fill="#b57b46"/><circle cx="855.8" cy="401.6" r="8.6" fill="#c48b4f"/><rect x="847.3" y="398.6" width="17.1" height="6.0" fill="#f6eadb"/><rect x="853.4" y="391.2" width="4.8" height="3.0" fill="#b57b46"/><circle cx="872.4" cy="398.8" r="9.6" fill="#c48b4f"/><rect x="862.8" y="395.4" width="19.2" height="6.7" fill="#f6eadb"/><rect x="869.7" y="387.0" width="5.4" height="3.4" fill="#b57b46"/><circle cx="902.8" cy="402.2" r="10.5" fill="#a9d3e0"/><path d="M894.5 393.8l6.3 16.7" stroke="#fff" stroke-opacity=".85" stroke-width="1.47"/><path d="M899.7 393.8l6.3 16.7" stroke="#fff" stroke-opacity=".85" stroke-width="1.47"/><path d="M904.9 393.8l6.3 16.7" stroke="#fff" stroke-opacity=".85" stroke-width="1.47"/><rect x="899.9" y="389.4" width="5.9" height="3.7" fill="#b57b46"/><circle cx="790.4" cy="421.9" r="10.6" fill="#f1b08e"/><path d="M781.9 413.4l6.4 17.0" stroke="#fff" stroke-opacity=".85" stroke-width="1.48"/><path d="M787.2 413.4l6.4 17.0" stroke="#fff" stroke-opacity=".85" stroke-width="1.48"/><path d="M792.5 413.4l6.4 17.0" stroke="#fff" stroke-opacity=".85" stroke-width="1.48"/><rect x="787.4" y="409.0" width="5.9" height="3.7" fill="#b57b46"/><circle cx="822.1" cy="416.4" r="9.1" fill="#7fa679"/><circle cx="822.1" cy="416.4" r="5.7" fill="none" stroke="#dbe8c8" stroke-width="1.28"/><circle cx="822.1" cy="416.4" r="2.3" fill="#dbe8c8"/><rect x="819.5" y="405.3" width="5.1" height="3.2" fill="#b57b46"/><circle cx="843.6" cy="427.8" r="8.8" fill="#f5d6a0"/><path d="M836.6 420.7l5.3 14.2" stroke="#fff" stroke-opacity=".85" stroke-width="1.24"/><path d="M841.0 420.7l5.3 14.2" stroke="#fff" stroke-opacity=".85" stroke-width="1.24"/><path d="M845.4 420.7l5.3 14.2" stroke="#fff" stroke-opacity=".85" stroke-width="1.24"/><rect x="841.2" y="417.0" width="5.0" height="3.1" fill="#b57b46"/><circle cx="865.2" cy="426.4" r="7.9" fill="#c9c0bc"/><circle cx="862.0" cy="424.0" r="1.4" fill="#fff"/><circle cx="867.9" cy="423.6" r="1.4" fill="#fff"/><circle cx="865.2" cy="427.9" r="1.4" fill="#fff"/><circle cx="862.4" cy="430.3" r="1.4" fill="#fff"/><circle cx="868.3" cy="429.9" r="1.4" fill="#fff"/><rect x="862.9" y="416.7" width="4.4" height="2.8" fill="#b57b46"/><circle cx="889.4" cy="417.2" r="9.4" fill="#f1b08e"/><rect x="886.8" y="405.8" width="5.3" height="3.3" fill="#b57b46"/></g><rect x="535.8" y="403.7" width="84.7" height="53.3" rx="2" fill="#fde6c7"/><rect x="624.5999999999999" y="403.7" width="84.7" height="53.3" rx="2" fill="#d7eef0"/><rect x="713.4" y="403.7" width="84.7" height="53.3" fill="#18535b"/><rect x="802.1999999999999" y="403.7" width="84.7" height="53.3" fill="#6a8a67"/><clipPath id="c19"><rect x="535.8" y="462.3" width="84.7" height="53.7" rx="2"/></clipPath><g clip-path="url(#c19)"><rect x="535.8" y="462.3" width="84.7" height="53.7" fill="#b4cfa5"/><circle cx="525.4" cy="463.8" r="3.0" fill="#5f7e5c"/><circle cx="541.8" cy="463.8" r="3.0" fill="#5f7e5c"/><circle cx="558.2" cy="463.8" r="3.0" fill="#5f7e5c"/><circle cx="574.6" cy="463.8" r="3.0" fill="#5f7e5c"/><circle cx="591.0" cy="463.8" r="3.0" fill="#5f7e5c"/><circle cx="607.4" cy="463.8" r="3.0" fill="#5f7e5c"/><circle cx="533.6" cy="472.0" r="3.0" fill="#5f7e5c"/><circle cx="550.0" cy="472.0" r="3.0" fill="#5f7e5c"/><circle cx="566.4" cy="472.0" r="3.0" fill="#5f7e5c"/><circle cx="582.8" cy="472.0" r="3.0" fill="#5f7e5c"/><circle cx="599.2" cy="472.0" r="3.0" fill="#5f7e5c"/><circle cx="615.6" cy="472.0" r="3.0" fill="#5f7e5c"/><circle cx="525.4" cy="480.2" r="3.0" fill="#5f7e5c"/><circle cx="541.8" cy="480.2" r="3.0" fill="#5f7e5c"/><circle cx="558.2" cy="480.2" r="3.0" fill="#5f7e5c"/><circle cx="574.6" cy="480.2" r="3.0" fill="#5f7e5c"/><circle cx="591.0" cy="480.2" r="3.0" fill="#5f7e5c"/><circle cx="607.4" cy="480.2" r="3.0" fill="#5f7e5c"/><circle cx="533.6" cy="488.4" r="3.0" fill="#5f7e5c"/><circle cx="550.0" cy="488.4" r="3.0" fill="#5f7e5c"/><circle cx="566.4" cy="488.4" r="3.0" fill="#5f7e5c"/><circle cx="582.8" cy="488.4" r="3.0" fill="#5f7e5c"/><circle cx="599.2" cy="488.4" r="3.0" fill="#5f7e5c"/><circle cx="615.6" cy="488.4" r="3.0" fill="#5f7e5c"/><circle cx="525.4" cy="496.6" r="3.0" fill="#5f7e5c"/><circle cx="541.8" cy="496.6" r="3.0" fill="#5f7e5c"/><circle cx="558.2" cy="496.6" r="3.0" fill="#5f7e5c"/><circle cx="574.6" cy="496.6" r="3.0" fill="#5f7e5c"/><circle cx="591.0" cy="496.6" r="3.0" fill="#5f7e5c"/><circle cx="607.4" cy="496.6" r="3.0" fill="#5f7e5c"/><circle cx="533.6" cy="504.8" r="3.0" fill="#5f7e5c"/><circle cx="550.0" cy="504.8" r="3.0" fill="#5f7e5c"/><circle cx="566.4" cy="504.8" r="3.0" fill="#5f7e5c"/><circle cx="582.8" cy="504.8" r="3.0" fill="#5f7e5c"/><circle cx="599.2" cy="504.8" r="3.0" fill="#5f7e5c"/><circle cx="615.6" cy="504.8" r="3.0" fill="#5f7e5c"/><circle cx="525.4" cy="513.0" r="3.0" fill="#5f7e5c"/><circle cx="541.8" cy="513.0" r="3.0" fill="#5f7e5c"/><circle cx="558.2" cy="513.0" r="3.0" fill="#5f7e5c"/><circle cx="574.6" cy="513.0" r="3.0" fill="#5f7e5c"/><circle cx="591.0" cy="513.0" r="3.0" fill="#5f7e5c"/><circle cx="607.4" cy="513.0" r="3.0" fill="#5f7e5c"/></g><rect x="540.8" y="467.3" width="74.7" height="43.7" rx="6" fill="#fff"/><rect x="624.5999999999999" y="462.3" width="84.7" height="53.7" rx="2" fill="#b57b46"/><rect x="628.8" y="466.5" width="76.3" height="45.300000000000004" rx="6" fill="#fff"/><clipPath id="c20"><rect x="713.4" y="462.3" width="84.7" height="53.7" rx="0"/></clipPath><g clip-path="url(#c20)"><rect x="713.4" y="462.3" width="84.7" height="53.7" fill="#6d8a68"/><circle cx="734.0" cy="489.3" r="0.9" fill="#e9a38a" fill-opacity=".7"/><circle cx="734.2" cy="515.7" r="0.9" fill="#f5dcaa" fill-opacity=".7"/><circle cx="735.1" cy="508.9" r="0.9" fill="#f5dcaa" fill-opacity=".7"/><circle cx="795.4" cy="501.6" r="0.9" fill="#f5dcaa" fill-opacity=".7"/><circle cx="757.7" cy="480.7" r="0.9" fill="#f5dcaa" fill-opacity=".7"/><circle cx="743.9" cy="515.8" r="0.9" fill="#a9d3e0" fill-opacity=".7"/><circle cx="772.5" cy="462.7" r="0.9" fill="#e9a38a" fill-opacity=".7"/><circle cx="715.8" cy="476.2" r="0.9" fill="#a9d3e0" fill-opacity=".7"/><circle cx="770.7" cy="513.0" r="0.9" fill="#a9d3e0" fill-opacity=".7"/><circle cx="765.6" cy="482.0" r="0.9" fill="#f5dcaa" fill-opacity=".7"/><circle cx="729.8" cy="503.1" r="0.9" fill="#a9d3e0" fill-opacity=".7"/><circle cx="794.4" cy="471.3" r="0.9" fill="#e9a38a" fill-opacity=".7"/><circle cx="790.2" cy="515.3" r="0.9" fill="#f5dcaa" fill-opacity=".7"/><circle cx="782.8" cy="494.1" r="0.9" fill="#e9a38a" fill-opacity=".7"/><circle cx="759.9" cy="513.1" r="0.9" fill="#e9a38a" fill-opacity=".7"/><circle cx="771.3" cy="512.4" r="0.9" fill="#e9a38a" fill-opacity=".7"/><circle cx="796.2" cy="482.2" r="0.9" fill="#a9d3e0" fill-opacity=".7"/><circle cx="790.0" cy="491.8" r="0.9" fill="#e9a38a" fill-opacity=".7"/><circle cx="763.3" cy="515.5" r="0.9" fill="#a9d3e0" fill-opacity=".7"/><circle cx="723.4" cy="503.3" r="0.9" fill="#f5dcaa" fill-opacity=".7"/><circle cx="714.3" cy="485.6" r="0.9" fill="#f5dcaa" fill-opacity=".7"/><circle cx="780.0" cy="515.8" r="0.9" fill="#f5dcaa" fill-opacity=".7"/><circle cx="767.9" cy="491.3" r="0.9" fill="#f5dcaa" fill-opacity=".7"/><circle cx="781.9" cy="478.8" r="0.9" fill="#f5dcaa" fill-opacity=".7"/><circle cx="783.7" cy="507.4" r="0.9" fill="#e9a38a" fill-opacity=".7"/><circle cx="741.1" cy="490.7" r="0.9" fill="#f5dcaa" fill-opacity=".7"/><circle cx="786.5" cy="484.2" r="0.9" fill="#a9d3e0" fill-opacity=".7"/><circle cx="732.5" cy="501.4" r="0.9" fill="#f5dcaa" fill-opacity=".7"/><circle cx="754.4" cy="505.8" r="0.9" fill="#f5dcaa" fill-opacity=".7"/><circle cx="717.9" cy="487.3" r="0.9" fill="#f5dcaa" fill-opacity=".7"/><circle cx="769.9" cy="486.1" r="0.9" fill="#e9a38a" fill-opacity=".7"/><circle cx="760.1" cy="509.9" r="0.9" fill="#a9d3e0" fill-opacity=".7"/><circle cx="734.8" cy="504.2" r="0.9" fill="#f5dcaa" fill-opacity=".7"/><circle cx="767.6" cy="485.0" r="0.9" fill="#e9a38a" fill-opacity=".7"/><circle cx="722.9" cy="487.2" r="0.9" fill="#f5dcaa" fill-opacity=".7"/><circle cx="714.4" cy="497.8" r="0.9" fill="#f5dcaa" fill-opacity=".7"/><circle cx="749.1" cy="466.5" r="0.9" fill="#f5dcaa" fill-opacity=".7"/><circle cx="708.3" cy="461.9" r="6.2" fill="#f5d6a0"/><path d="M703.4 457.0l3.7 9.9" stroke="#fff" stroke-opacity=".85" stroke-width="0.86"/><path d="M706.5 457.0l3.7 9.9" stroke="#fff" stroke-opacity=".85" stroke-width="0.86"/><path d="M709.5 457.0l3.7 9.9" stroke="#fff" stroke-opacity=".85" stroke-width="0.86"/><rect x="706.6" y="454.4" width="3.5" height="2.2" fill="#b57b46"/><circle cx="724.8" cy="456.0" r="7.2" fill="#f1b08e"/><rect x="722.7" y="447.2" width="4.0" height="2.5" fill="#b57b46"/><circle cx="745.2" cy="462.2" r="7.6" fill="#f1b08e"/><path d="M738.7 458.8l2.1 -1.5l2.1 1.5l2.1 -1.5l2.1 1.5l2.1 -1.5l2.1 1.5" stroke="#fff" fill="none" stroke-width="0.91"/><path d="M738.7 462.5l2.1 -1.5l2.1 1.5l2.1 -1.5l2.1 1.5l2.1 -1.5l2.1 1.5" stroke="#fff" fill="none" stroke-width="0.91"/><path d="M738.7 466.0l2.1 -1.5l2.1 1.5l2.1 -1.5l2.1 1.5l2.1 -1.5l2.1 1.5" stroke="#fff" fill="none" stroke-width="0.91"/><rect x="743.1" y="452.9" width="4.2" height="2.7" fill="#b57b46"/><circle cx="758.1" cy="455.4" r="7.0" fill="#c9c0bc"/><circle cx="755.3" cy="453.3" r="1.3" fill="#fff"/><circle cx="760.6" cy="452.9" r="1.3" fill="#fff"/><circle cx="758.1" cy="456.8" r="1.3" fill="#fff"/><circle cx="755.7" cy="458.9" r="1.3" fill="#fff"/><circle cx="760.9" cy="458.5" r="1.3" fill="#fff"/><rect x="756.2" y="446.8" width="3.9" height="2.4" fill="#b57b46"/><circle cx="776.8" cy="456.3" r="7.5" fill="#c9c0bc"/><circle cx="773.8" cy="454.0" r="1.3" fill="#fff"/><circle cx="779.5" cy="453.7" r="1.3" fill="#fff"/><circle cx="776.8" cy="457.8" r="1.3" fill="#fff"/><circle cx="774.2" cy="460.0" r="1.3" fill="#fff"/><circle cx="779.8" cy="459.6" r="1.3" fill="#fff"/><rect x="774.7" y="447.1" width="4.2" height="2.6" fill="#b57b46"/><circle cx="793.1" cy="453.4" r="8.0" fill="#8e4a34"/><path d="M786.2 449.8l2.3 -1.6l2.3 1.6l2.3 -1.6l2.3 1.6l2.3 -1.6l2.3 1.6" stroke="#fff" fill="none" stroke-width="0.97"/><path d="M786.2 453.8l2.3 -1.6l2.3 1.6l2.3 -1.6l2.3 1.6l2.3 -1.6l2.3 1.6" stroke="#fff" fill="none" stroke-width="0.97"/><path d="M786.2 457.4l2.3 -1.6l2.3 1.6l2.3 -1.6l2.3 1.6l2.3 -1.6l2.3 1.6" stroke="#fff" fill="none" stroke-width="0.97"/><rect x="790.8" y="443.6" width="4.5" height="2.8" fill="#b57b46"/><circle cx="813.4" cy="454.8" r="6.5" fill="#f5dcaa"/><rect x="811.6" y="446.9" width="3.6" height="2.3" fill="#b57b46"/><circle cx="720.1" cy="472.3" r="5.4" fill="#c9c0bc"/><circle cx="717.9" cy="470.7" r="1.0" fill="#fff"/><circle cx="722.0" cy="470.4" r="1.0" fill="#fff"/><circle cx="720.1" cy="473.4" r="1.0" fill="#fff"/><circle cx="718.2" cy="475.0" r="1.0" fill="#fff"/><circle cx="722.3" cy="474.7" r="1.0" fill="#fff"/><rect x="718.6" y="465.6" width="3.1" height="1.9" fill="#b57b46"/><circle cx="736.4" cy="466.9" r="8.1" fill="#7fa679"/><circle cx="736.4" cy="466.9" r="5.0" fill="none" stroke="#dbe8c8" stroke-width="1.13"/><circle cx="736.4" cy="466.9" r="2.0" fill="#dbe8c8"/><rect x="734.1" y="457.1" width="4.5" height="2.8" fill="#b57b46"/><circle cx="751.8" cy="474.3" r="7.9" fill="#f1b08e"/><rect x="749.6" y="464.7" width="4.4" height="2.8" fill="#b57b46"/><circle cx="766.3" cy="476.2" r="5.6" fill="#f5d6a0"/><path d="M761.8 471.7l3.3 8.9" stroke="#fff" stroke-opacity=".85" stroke-width="0.78"/><path d="M764.6 471.7l3.3 8.9" stroke="#fff" stroke-opacity=".85" stroke-width="0.78"/><path d="M767.4 471.7l3.3 8.9" stroke="#fff" stroke-opacity=".85" stroke-width="0.78"/><rect x="764.7" y="469.4" width="3.1" height="2.0" fill="#b57b46"/><circle cx="785.7" cy="466.9" r="7.3" fill="#8e4a34"/><path d="M779.5 463.6l2.0 -1.5l2.0 1.5l2.0 -1.5l2.0 1.5l2.0 -1.5l2.0 1.5" stroke="#fff" fill="none" stroke-width="0.87"/><path d="M779.5 467.3l2.0 -1.5l2.0 1.5l2.0 -1.5l2.0 1.5l2.0 -1.5l2.0 1.5" stroke="#fff" fill="none" stroke-width="0.87"/><path d="M779.5 470.5l2.0 -1.5l2.0 1.5l2.0 -1.5l2.0 1.5l2.0 -1.5l2.0 1.5" stroke="#fff" fill="none" stroke-width="0.87"/><rect x="783.7" y="458.1" width="4.1" height="2.5" fill="#b57b46"/><circle cx="804.2" cy="474.9" r="5.7" fill="#f1b08e"/><path d="M799.3 472.3l1.6 -1.1l1.6 1.1l1.6 -1.1l1.6 1.1l1.6 -1.1l1.6 1.1" stroke="#fff" fill="none" stroke-width="0.68"/><path d="M799.3 475.2l1.6 -1.1l1.6 1.1l1.6 -1.1l1.6 1.1l1.6 -1.1l1.6 1.1" stroke="#fff" fill="none" stroke-width="0.68"/><path d="M799.3 477.7l1.6 -1.1l1.6 1.1l1.6 -1.1l1.6 1.1l1.6 -1.1l1.6 1.1" stroke="#fff" fill="none" stroke-width="0.68"/><rect x="802.6" y="468.0" width="3.2" height="2.0" fill="#b57b46"/><circle cx="708.6" cy="489.1" r="7.7" fill="#f5d6a0"/><path d="M702.4 482.9l4.6 12.4" stroke="#fff" stroke-opacity=".85" stroke-width="1.08"/><path d="M706.3 482.9l4.6 12.4" stroke="#fff" stroke-opacity=".85" stroke-width="1.08"/><path d="M710.2 482.9l4.6 12.4" stroke="#fff" stroke-opacity=".85" stroke-width="1.08"/><rect x="706.4" y="479.7" width="4.3" height="2.7" fill="#b57b46"/><circle cx="721.6" cy="490.1" r="6.9" fill="#8e4a34"/><path d="M715.7 487.0l1.9 -1.4l1.9 1.4l1.9 -1.4l1.9 1.4l1.9 -1.4l1.9 1.4" stroke="#fff" fill="none" stroke-width="0.83"/><path d="M715.7 490.4l1.9 -1.4l1.9 1.4l1.9 -1.4l1.9 1.4l1.9 -1.4l1.9 1.4" stroke="#fff" fill="none" stroke-width="0.83"/><path d="M715.7 493.5l1.9 -1.4l1.9 1.4l1.9 -1.4l1.9 1.4l1.9 -1.4l1.9 1.4" stroke="#fff" fill="none" stroke-width="0.83"/><rect x="719.6" y="481.7" width="3.9" height="2.4" fill="#b57b46"/><circle cx="742.2" cy="482.2" r="6.7" fill="#8e4a34"/><path d="M736.5 479.2l1.9 -1.3l1.9 1.3l1.9 -1.3l1.9 1.3l1.9 -1.3l1.9 1.3" stroke="#fff" fill="none" stroke-width="0.80"/><path d="M736.5 482.6l1.9 -1.3l1.9 1.3l1.9 -1.3l1.9 1.3l1.9 -1.3l1.9 1.3" stroke="#fff" fill="none" stroke-width="0.80"/><path d="M736.5 485.6l1.9 -1.3l1.9 1.3l1.9 -1.3l1.9 1.3l1.9 -1.3l1.9 1.3" stroke="#fff" fill="none" stroke-width="0.80"/><rect x="740.3" y="474.1" width="3.7" height="2.3" fill="#b57b46"/><circle cx="759.8" cy="482.1" r="6.2" fill="#7fa679"/><circle cx="759.8" cy="482.1" r="3.8" fill="none" stroke="#dbe8c8" stroke-width="0.87"/><circle cx="759.8" cy="482.1" r="1.5" fill="#dbe8c8"/><rect x="758.1" y="474.6" width="3.5" height="2.2" fill="#b57b46"/><circle cx="777.0" cy="490.4" r="7.2" fill="#f1b08e"/><rect x="774.9" y="481.6" width="4.0" height="2.5" fill="#b57b46"/><circle cx="798.2" cy="490.0" r="6.4" fill="#f1b08e"/><path d="M793.1 484.9l3.8 10.2" stroke="#fff" stroke-opacity=".85" stroke-width="0.89"/><path d="M796.3 484.9l3.8 10.2" stroke="#fff" stroke-opacity=".85" stroke-width="0.89"/><path d="M799.5 484.9l3.8 10.2" stroke="#fff" stroke-opacity=".85" stroke-width="0.89"/><rect x="796.4" y="482.3" width="3.6" height="2.2" fill="#b57b46"/><circle cx="806.1" cy="482.4" r="8.1" fill="#f1b08e"/><path d="M799.6 475.9l4.9 13.0" stroke="#fff" stroke-opacity=".85" stroke-width="1.14"/><path d="M803.6 475.9l4.9 13.0" stroke="#fff" stroke-opacity=".85" stroke-width="1.14"/><path d="M807.7 475.9l4.9 13.0" stroke="#fff" stroke-opacity=".85" stroke-width="1.14"/><rect x="803.8" y="472.5" width="4.5" height="2.8" fill="#b57b46"/><circle cx="719.9" cy="498.4" r="6.0" fill="#c48b4f"/><rect x="713.9" y="496.3" width="12.0" height="4.2" fill="#f6eadb"/><rect x="718.2" y="491.1" width="3.4" height="2.1" fill="#b57b46"/><circle cx="737.8" cy="502.2" r="7.8" fill="#f5d6a0"/><path d="M731.6 495.9l4.7 12.5" stroke="#fff" stroke-opacity=".85" stroke-width="1.09"/><path d="M735.5 495.9l4.7 12.5" stroke="#fff" stroke-opacity=".85" stroke-width="1.09"/><path d="M739.4 495.9l4.7 12.5" stroke="#fff" stroke-opacity=".85" stroke-width="1.09"/><rect x="735.7" y="492.7" width="4.4" height="2.7" fill="#b57b46"/><circle cx="745.9" cy="498.4" r="6.3" fill="#f5dcaa"/><rect x="744.1" y="490.7" width="3.5" height="2.2" fill="#b57b46"/><circle cx="763.5" cy="501.8" r="7.6" fill="#f2c4b0"/><rect x="761.4" y="492.6" width="4.3" height="2.7" fill="#b57b46"/><circle cx="781.1" cy="498.4" r="6.7" fill="#c9c0bc"/><circle cx="778.4" cy="496.4" r="1.2" fill="#fff"/><circle cx="783.4" cy="496.0" r="1.2" fill="#fff"/><circle cx="781.1" cy="499.7" r="1.2" fill="#fff"/><circle cx="778.7" cy="501.7" r="1.2" fill="#fff"/><circle cx="783.7" cy="501.4" r="1.2" fill="#fff"/><rect x="779.2" y="490.2" width="3.8" height="2.3" fill="#b57b46"/><circle cx="797.5" cy="504.2" r="7.3" fill="#cfe0b9"/><rect x="795.5" y="495.3" width="4.1" height="2.6" fill="#b57b46"/><circle cx="706.1" cy="517.7" r="7.7" fill="#c9c0bc"/><circle cx="703.1" cy="515.4" r="1.4" fill="#fff"/><circle cx="708.8" cy="515.0" r="1.4" fill="#fff"/><circle cx="706.1" cy="519.3" r="1.4" fill="#fff"/><circle cx="703.4" cy="521.6" r="1.4" fill="#fff"/><circle cx="709.2" cy="521.2" r="1.4" fill="#fff"/><rect x="704.0" y="508.3" width="4.3" height="2.7" fill="#b57b46"/><circle cx="727.1" cy="511.9" r="5.8" fill="#a3553b"/><path d="M722.2 509.3l1.6 -1.2l1.6 1.2l1.6 -1.2l1.6 1.2l1.6 -1.2l1.6 1.2" stroke="#fff" fill="none" stroke-width="0.70"/><path d="M722.2 512.2l1.6 -1.2l1.6 1.2l1.6 -1.2l1.6 1.2l1.6 -1.2l1.6 1.2" stroke="#fff" fill="none" stroke-width="0.70"/><path d="M722.2 514.8l1.6 -1.2l1.6 1.2l1.6 -1.2l1.6 1.2l1.6 -1.2l1.6 1.2" stroke="#fff" fill="none" stroke-width="0.70"/><rect x="725.5" y="504.8" width="3.3" height="2.0" fill="#b57b46"/><circle cx="742.2" cy="511.9" r="6.9" fill="#f1b08e"/><path d="M736.3 508.8l1.9 -1.4l1.9 1.4l1.9 -1.4l1.9 1.4l1.9 -1.4l1.9 1.4" stroke="#fff" fill="none" stroke-width="0.83"/><path d="M736.3 512.2l1.9 -1.4l1.9 1.4l1.9 -1.4l1.9 1.4l1.9 -1.4l1.9 1.4" stroke="#fff" fill="none" stroke-width="0.83"/><path d="M736.3 515.3l1.9 -1.4l1.9 1.4l1.9 -1.4l1.9 1.4l1.9 -1.4l1.9 1.4" stroke="#fff" fill="none" stroke-width="0.83"/><rect x="740.2" y="503.5" width="3.9" height="2.4" fill="#b57b46"/><circle cx="757.6" cy="513.2" r="8.0" fill="#f1b08e"/><path d="M751.2 506.8l4.8 12.8" stroke="#fff" stroke-opacity=".85" stroke-width="1.12"/><path d="M755.2 506.8l4.8 12.8" stroke="#fff" stroke-opacity=".85" stroke-width="1.12"/><path d="M759.2 506.8l4.8 12.8" stroke="#fff" stroke-opacity=".85" stroke-width="1.12"/><rect x="755.3" y="503.5" width="4.5" height="2.8" fill="#b57b46"/><circle cx="781.1" cy="520.7" r="6.5" fill="#a3553b"/><path d="M775.5 517.8l1.8 -1.3l1.8 1.3l1.8 -1.3l1.8 1.3l1.8 -1.3l1.8 1.3" stroke="#fff" fill="none" stroke-width="0.79"/><path d="M775.5 521.1l1.8 -1.3l1.8 1.3l1.8 -1.3l1.8 1.3l1.8 -1.3l1.8 1.3" stroke="#fff" fill="none" stroke-width="0.79"/><path d="M775.5 524.0l1.8 -1.3l1.8 1.3l1.8 -1.3l1.8 1.3l1.8 -1.3l1.8 1.3" stroke="#fff" fill="none" stroke-width="0.79"/><rect x="779.2" y="512.8" width="3.7" height="2.3" fill="#b57b46"/><circle cx="796.8" cy="518.2" r="5.4" fill="#f1b08e"/><path d="M792.1 515.8l1.5 -1.1l1.5 1.1l1.5 -1.1l1.5 1.1l1.5 -1.1l1.5 1.1" stroke="#fff" fill="none" stroke-width="0.65"/><path d="M792.1 518.5l1.5 -1.1l1.5 1.1l1.5 -1.1l1.5 1.1l1.5 -1.1l1.5 1.1" stroke="#fff" fill="none" stroke-width="0.65"/><path d="M792.1 520.9l1.5 -1.1l1.5 1.1l1.5 -1.1l1.5 1.1l1.5 -1.1l1.5 1.1" stroke="#fff" fill="none" stroke-width="0.65"/><rect x="795.2" y="511.6" width="3.0" height="1.9" fill="#b57b46"/><circle cx="810.4" cy="513.0" r="6.8" fill="#7fa679"/><circle cx="810.4" cy="513.0" r="4.2" fill="none" stroke="#dbe8c8" stroke-width="0.95"/><circle cx="810.4" cy="513.0" r="1.7" fill="#dbe8c8"/><rect x="808.5" y="504.7" width="3.8" height="2.4" fill="#b57b46"/><circle cx="719.4" cy="533.7" r="6.2" fill="#f2c4b0"/><rect x="717.7" y="526.1" width="3.5" height="2.2" fill="#b57b46"/><circle cx="729.0" cy="530.1" r="6.2" fill="#f1b08e"/><path d="M724.0 525.1l3.7 10.0" stroke="#fff" stroke-opacity=".85" stroke-width="0.87"/><path d="M727.1 525.1l3.7 10.0" stroke="#fff" stroke-opacity=".85" stroke-width="0.87"/><path d="M730.2 525.1l3.7 10.0" stroke="#fff" stroke-opacity=".85" stroke-width="0.87"/><rect x="727.2" y="522.5" width="3.5" height="2.2" fill="#b57b46"/><circle cx="749.1" cy="529.2" r="7.2" fill="#f5d6a0"/><path d="M743.3 523.4l4.3 11.5" stroke="#fff" stroke-opacity=".85" stroke-width="1.01"/><path d="M746.9 523.4l4.3 11.5" stroke="#fff" stroke-opacity=".85" stroke-width="1.01"/><path d="M750.5 523.4l4.3 11.5" stroke="#fff" stroke-opacity=".85" stroke-width="1.01"/><rect x="747.1" y="520.4" width="4.0" height="2.5" fill="#b57b46"/><circle cx="763.3" cy="528.4" r="7.5" fill="#8e4a34"/><path d="M756.9 525.0l2.1 -1.5l2.1 1.5l2.1 -1.5l2.1 1.5l2.1 -1.5l2.1 1.5" stroke="#fff" fill="none" stroke-width="0.90"/><path d="M756.9 528.8l2.1 -1.5l2.1 1.5l2.1 -1.5l2.1 1.5l2.1 -1.5l2.1 1.5" stroke="#fff" fill="none" stroke-width="0.90"/><path d="M756.9 532.2l2.1 -1.5l2.1 1.5l2.1 -1.5l2.1 1.5l2.1 -1.5l2.1 1.5" stroke="#fff" fill="none" stroke-width="0.90"/><rect x="761.2" y="519.2" width="4.2" height="2.6" fill="#b57b46"/><circle cx="788.3" cy="534.4" r="8.0" fill="#f1b08e"/><path d="M781.9 527.9l4.8 12.9" stroke="#fff" stroke-opacity=".85" stroke-width="1.13"/><path d="M785.9 527.9l4.8 12.9" stroke="#fff" stroke-opacity=".85" stroke-width="1.13"/><path d="M789.9 527.9l4.8 12.9" stroke="#fff" stroke-opacity=".85" stroke-width="1.13"/><rect x="786.1" y="524.6" width="4.5" height="2.8" fill="#b57b46"/><circle cx="806.2" cy="534.0" r="7.8" fill="#f1b08e"/><path d="M800.0 527.8l4.7 12.4" stroke="#fff" stroke-opacity=".85" stroke-width="1.09"/><path d="M803.9 527.8l4.7 12.4" stroke="#fff" stroke-opacity=".85" stroke-width="1.09"/><path d="M807.8 527.8l4.7 12.4" stroke="#fff" stroke-opacity=".85" stroke-width="1.09"/><rect x="804.1" y="524.6" width="4.3" height="2.7" fill="#b57b46"/></g><rect x="717.1999999999999" y="466.1" width="77.10000000000001" height="46.1" fill="#fff"/><clipPath id="c21"><rect x="802.1999999999999" y="462.3" width="84.7" height="53.7" rx="0"/></clipPath><g clip-path="url(#c21)"><rect x="802.1999999999999" y="462.3" width="84.7" height="53.7" fill="#b2d8e2"/><circle cx="795.3" cy="463.8" r="2.3" fill="#2f5f68"/><circle cx="808.2" cy="463.8" r="2.3" fill="#2f5f68"/><circle cx="821.1" cy="463.8" r="2.3" fill="#2f5f68"/><circle cx="834.0" cy="463.8" r="2.3" fill="#2f5f68"/><circle cx="846.9" cy="463.8" r="2.3" fill="#2f5f68"/><circle cx="859.8" cy="463.8" r="2.3" fill="#2f5f68"/><circle cx="872.7" cy="463.8" r="2.3" fill="#2f5f68"/><circle cx="885.6" cy="463.8" r="2.3" fill="#2f5f68"/><circle cx="801.8" cy="470.2" r="2.3" fill="#2f5f68"/><circle cx="814.6" cy="470.2" r="2.3" fill="#2f5f68"/><circle cx="827.5" cy="470.2" r="2.3" fill="#2f5f68"/><circle cx="840.4" cy="470.2" r="2.3" fill="#2f5f68"/><circle cx="853.3" cy="470.2" r="2.3" fill="#2f5f68"/><circle cx="866.2" cy="470.2" r="2.3" fill="#2f5f68"/><circle cx="879.1" cy="470.2" r="2.3" fill="#2f5f68"/><circle cx="795.3" cy="476.7" r="2.3" fill="#2f5f68"/><circle cx="808.2" cy="476.7" r="2.3" fill="#2f5f68"/><circle cx="821.1" cy="476.7" r="2.3" fill="#2f5f68"/><circle cx="834.0" cy="476.7" r="2.3" fill="#2f5f68"/><circle cx="846.9" cy="476.7" r="2.3" fill="#2f5f68"/><circle cx="859.8" cy="476.7" r="2.3" fill="#2f5f68"/><circle cx="872.7" cy="476.7" r="2.3" fill="#2f5f68"/><circle cx="885.6" cy="476.7" r="2.3" fill="#2f5f68"/><circle cx="801.8" cy="483.1" r="2.3" fill="#2f5f68"/><circle cx="814.6" cy="483.1" r="2.3" fill="#2f5f68"/><circle cx="827.5" cy="483.1" r="2.3" fill="#2f5f68"/><circle cx="840.4" cy="483.1" r="2.3" fill="#2f5f68"/><circle cx="853.3" cy="483.1" r="2.3" fill="#2f5f68"/><circle cx="866.2" cy="483.1" r="2.3" fill="#2f5f68"/><circle cx="879.1" cy="483.1" r="2.3" fill="#2f5f68"/><circle cx="795.3" cy="489.6" r="2.3" fill="#2f5f68"/><circle cx="808.2" cy="489.6" r="2.3" fill="#2f5f68"/><circle cx="821.1" cy="489.6" r="2.3" fill="#2f5f68"/><circle cx="834.0" cy="489.6" r="2.3" fill="#2f5f68"/><circle cx="846.9" cy="489.6" r="2.3" fill="#2f5f68"/><circle cx="859.8" cy="489.6" r="2.3" fill="#2f5f68"/><circle cx="872.7" cy="489.6" r="2.3" fill="#2f5f68"/><circle cx="885.6" cy="489.6" r="2.3" fill="#2f5f68"/><circle cx="801.8" cy="496.0" r="2.3" fill="#2f5f68"/><circle cx="814.6" cy="496.0" r="2.3" fill="#2f5f68"/><circle cx="827.5" cy="496.0" r="2.3" fill="#2f5f68"/><circle cx="840.4" cy="496.0" r="2.3" fill="#2f5f68"/><circle cx="853.3" cy="496.0" r="2.3" fill="#2f5f68"/><circle cx="866.2" cy="496.0" r="2.3" fill="#2f5f68"/><circle cx="879.1" cy="496.0" r="2.3" fill="#2f5f68"/><circle cx="795.3" cy="502.5" r="2.3" fill="#2f5f68"/><circle cx="808.2" cy="502.5" r="2.3" fill="#2f5f68"/><circle cx="821.1" cy="502.5" r="2.3" fill="#2f5f68"/><circle cx="834.0" cy="502.5" r="2.3" fill="#2f5f68"/><circle cx="846.9" cy="502.5" r="2.3" fill="#2f5f68"/><circle cx="859.8" cy="502.5" r="2.3" fill="#2f5f68"/><circle cx="872.7" cy="502.5" r="2.3" fill="#2f5f68"/><circle cx="885.6" cy="502.5" r="2.3" fill="#2f5f68"/><circle cx="801.8" cy="508.9" r="2.3" fill="#2f5f68"/><circle cx="814.6" cy="508.9" r="2.3" fill="#2f5f68"/><circle cx="827.5" cy="508.9" r="2.3" fill="#2f5f68"/><circle cx="840.4" cy="508.9" r="2.3" fill="#2f5f68"/><circle cx="853.3" cy="508.9" r="2.3" fill="#2f5f68"/><circle cx="866.2" cy="508.9" r="2.3" fill="#2f5f68"/><circle cx="879.1" cy="508.9" r="2.3" fill="#2f5f68"/><circle cx="795.3" cy="515.4" r="2.3" fill="#2f5f68"/><circle cx="808.2" cy="515.4" r="2.3" fill="#2f5f68"/><circle cx="821.1" cy="515.4" r="2.3" fill="#2f5f68"/><circle cx="834.0" cy="515.4" r="2.3" fill="#2f5f68"/><circle cx="846.9" cy="515.4" r="2.3" fill="#2f5f68"/><circle cx="859.8" cy="515.4" r="2.3" fill="#2f5f68"/><circle cx="872.7" cy="515.4" r="2.3" fill="#2f5f68"/><circle cx="885.6" cy="515.4" r="2.3" fill="#2f5f68"/></g><rect x="805.9999999999999" y="466.1" width="77.10000000000001" height="46.1" fill="#fff"/><rect x="535.8" y="519.8" width="84.7" height="53" rx="2" fill="#d9eff0"/><rect x="540.0" y="524.0" width="76.3" height="44.6" rx="8" fill="#fff"/><rect x="624.5999999999999" y="519.8" width="84.7" height="53" rx="2" fill="#fde6c7"/><rect x="628.8" y="524.0" width="76.3" height="44.6" rx="8" fill="#fff"/><rect x="713.4" y="519.8" width="84.7" height="53" rx="0" fill="#6a8a67"/><rect x="717.1" y="523.5" width="77.3" height="45.6" rx="0" fill="#fff"/><rect x="802.1999999999999" y="519.8" width="84.7" height="53" rx="0" fill="#1a5058"/><rect x="805.9" y="523.5" width="77.3" height="45.6" rx="0" fill="#fff"/><rect x="534.5" y="122.5" width="352.5" height="450.5" fill="none" stroke="#8a8a8a" stroke-width="1"/><rect x="531.0" y="119.0" width="7" height="7" fill="#fff" stroke="#9a9a9a" stroke-width="1"/><rect x="883.5" y="119.0" width="7" height="7" fill="#fff" stroke="#9a9a9a" stroke-width="1"/><rect x="531.0" y="569.5" width="7" height="7" fill="#fff" stroke="#9a9a9a" stroke-width="1"/><rect x="883.5" y="569.5" width="7" height="7" fill="#fff" stroke="#9a9a9a" stroke-width="1"/></svg>
<div class="a" style="left:41px;top:62px;width:959px;height:14.3px;background:#f3f3f3"></div><div class="a" style="left:41px;top:62px;width:15.3px;height:546px;background:#f3f3f3"></div><svg class="a" style="left:0;top:0" width="1200" height="618"><path d="M56.30 62V76.3M63.35 73.3V76.3M70.39 72V76.3M77.44 73.3V76.3M84.48 70.3V76.3M91.53 73.3V76.3M98.58 72V76.3M105.62 73.3V76.3M112.67 62V76.3M119.72 73.3V76.3M126.76 72V76.3M133.81 73.3V76.3M140.85 70.3V76.3M147.90 73.3V76.3M154.95 72V76.3M161.99 73.3V76.3M169.04 62V76.3M176.09 73.3V76.3M183.13 72V76.3M190.18 73.3V76.3M197.22 70.3V76.3M204.27 73.3V76.3M211.32 72V76.3M218.36 73.3V76.3M225.41 62V76.3M232.46 73.3V76.3M239.50 72V76.3M246.55 73.3V76.3M253.59 70.3V76.3M260.64 73.3V76.3M267.69 72V76.3M274.73 73.3V76.3M281.78 62V76.3M288.83 73.3V76.3M295.87 72V76.3M302.92 73.3V76.3M309.96 70.3V76.3M317.01 73.3V76.3M324.06 72V76.3M331.10 73.3V76.3M338.15 62V76.3M345.20 73.3V76.3M352.24 72V76.3M359.29 73.3V76.3M366.33 70.3V76.3M373.38 73.3V76.3M380.43 72V76.3M387.47 73.3V76.3M394.52 62V76.3M401.57 73.3V76.3M408.61 72V76.3M415.66 73.3V76.3M422.70 70.3V76.3M429.75 73.3V76.3M436.80 72V76.3M443.84 73.3V76.3M450.89 62V76.3M457.94 73.3V76.3M464.98 72V76.3M472.03 73.3V76.3M479.07 70.3V76.3M486.12 73.3V76.3M493.17 72V76.3M500.21 73.3V76.3M507.26 62V76.3M514.31 73.3V76.3M521.35 72V76.3M528.40 73.3V76.3M535.44 70.3V76.3M542.49 73.3V76.3M549.54 72V76.3M556.58 73.3V76.3M563.63 62V76.3M570.68 73.3V76.3M577.72 72V76.3M584.77 73.3V76.3M591.81 70.3V76.3M598.86 73.3V76.3M605.91 72V76.3M612.95 73.3V76.3M620.00 62V76.3M627.05 73.3V76.3M634.09 72V76.3M641.14 73.3V76.3M648.18 70.3V76.3M655.23 73.3V76.3M662.28 72V76.3M669.32 73.3V76.3M676.37 62V76.3M683.42 73.3V76.3M690.46 72V76.3M697.51 73.3V76.3M704.55 70.3V76.3M711.60 73.3V76.3M718.65 72V76.3M725.69 73.3V76.3M732.74 62V76.3M739.79 73.3V76.3M746.83 72V76.3M753.88 73.3V76.3M760.92 70.3V76.3M767.97 73.3V76.3M775.02 72V76.3M782.06 73.3V76.3M789.11 62V76.3M796.16 73.3V76.3M803.20 72V76.3M810.25 73.3V76.3M817.29 70.3V76.3M824.34 73.3V76.3M831.39 72V76.3M838.43 73.3V76.3M845.48 62V76.3M852.53 73.3V76.3M859.57 72V76.3M866.62 73.3V76.3M873.66 70.3V76.3M880.71 73.3V76.3M887.76 72V76.3M894.80 73.3V76.3M901.85 62V76.3M908.90 73.3V76.3M915.94 72V76.3M922.99 73.3V76.3M930.03 70.3V76.3M937.08 73.3V76.3M944.13 72V76.3M951.17 73.3V76.3M958.22 62V76.3M965.27 73.3V76.3M972.31 72V76.3M979.36 73.3V76.3M986.40 70.3V76.3M993.45 73.3V76.3M41 76.30H56.3M53 83.35H56.3M51.5 90.40H56.3M53 97.45H56.3M49.5 104.50H56.3M53 111.54H56.3M51.5 118.59H56.3M53 125.64H56.3M41 132.69H56.3M53 139.74H56.3M51.5 146.79H56.3M53 153.84H56.3M49.5 160.88H56.3M53 167.93H56.3M51.5 174.98H56.3M53 182.03H56.3M41 189.08H56.3M53 196.13H56.3M51.5 203.18H56.3M53 210.23H56.3M49.5 217.27H56.3M53 224.32H56.3M51.5 231.37H56.3M53 238.42H56.3M41 245.47H56.3M53 252.52H56.3M51.5 259.57H56.3M53 266.62H56.3M49.5 273.67H56.3M53 280.71H56.3M51.5 287.76H56.3M53 294.81H56.3M41 301.86H56.3M53 308.91H56.3M51.5 315.96H56.3M53 323.01H56.3M49.5 330.06H56.3M53 337.10H56.3M51.5 344.15H56.3M53 351.20H56.3M41 358.25H56.3M53 365.30H56.3M51.5 372.35H56.3M53 379.40H56.3M49.5 386.44H56.3M53 393.49H56.3M51.5 400.54H56.3M53 407.59H56.3M41 414.64H56.3M53 421.69H56.3M51.5 428.74H56.3M53 435.79H56.3M49.5 442.84H56.3M53 449.88H56.3M51.5 456.93H56.3M53 463.98H56.3M41 471.03H56.3M53 478.08H56.3M51.5 485.13H56.3M53 492.18H56.3M49.5 499.23H56.3M53 506.27H56.3M51.5 513.32H56.3M53 520.37H56.3M41 527.42H56.3M53 534.47H56.3M51.5 541.52H56.3M53 548.57H56.3M49.5 555.62H56.3M53 562.66H56.3M51.5 569.71H56.3M53 576.76H56.3M41 583.81H56.3M53 590.86H56.3M51.5 597.91H56.3M53 604.96H56.3" stroke="#cbcbcb" stroke-width="1" fill="none"/><path d="M41 76.3H999.5M56.3 62V608" stroke="#c8c8c8" stroke-width="1"/><path d="M41.5 62V608" stroke="#bdbdbd" stroke-width="1"/></svg><div class="a t" style="left:58.8px;top:63.36px;font-size:8px;color:#555;font-weight:400;transform:scaleX(0.92);transform-origin:0 0;">0</div><div class="a t" style="left:115.16999999999999px;top:63.36px;font-size:8px;color:#555;font-weight:400;transform:scaleX(0.92);transform-origin:0 0;">1</div><div class="a t" style="left:171.54px;top:63.36px;font-size:8px;color:#555;font-weight:400;transform:scaleX(0.92);transform-origin:0 0;">2</div><div class="a t" style="left:227.90999999999997px;top:63.36px;font-size:8px;color:#555;font-weight:400;transform:scaleX(0.92);transform-origin:0 0;">3</div><div class="a t" style="left:284.28px;top:63.36px;font-size:8px;color:#555;font-weight:400;transform:scaleX(0.92);transform-origin:0 0;">4</div><div class="a t" style="left:340.65px;top:63.36px;font-size:8px;color:#555;font-weight:400;transform:scaleX(0.92);transform-origin:0 0;">5</div><div class="a t" style="left:397.02px;top:63.36px;font-size:8px;color:#555;font-weight:400;transform:scaleX(0.92);transform-origin:0 0;">6</div><div class="a t" style="left:453.39px;top:63.36px;font-size:8px;color:#555;font-weight:400;transform:scaleX(0.92);transform-origin:0 0;">7</div><div class="a t" style="left:509.76px;top:63.36px;font-size:8px;color:#555;font-weight:400;transform:scaleX(0.92);transform-origin:0 0;">8</div><div class="a t" style="left:566.13px;top:63.36px;font-size:8px;color:#555;font-weight:400;transform:scaleX(0.92);transform-origin:0 0;">9</div><div class="a t" style="left:622.4999999999999px;top:63.36px;font-size:8px;color:#555;font-weight:400;transform:scaleX(0.92);transform-origin:0 0;">10</div><div class="a t" style="left:678.8699999999999px;top:63.36px;font-size:8px;color:#555;font-weight:400;transform:scaleX(0.92);transform-origin:0 0;">11</div><div class="a t" style="left:735.2399999999999px;top:63.36px;font-size:8px;color:#555;font-weight:400;transform:scaleX(0.92);transform-origin:0 0;">12</div><div class="a t" style="left:791.6099999999999px;top:63.36px;font-size:8px;color:#555;font-weight:400;transform:scaleX(0.92);transform-origin:0 0;">13</div><div class="a t" style="left:847.9799999999999px;top:63.36px;font-size:8px;color:#555;font-weight:400;transform:scaleX(0.92);transform-origin:0 0;">14</div><div class="a t" style="left:904.3499999999999px;top:63.36px;font-size:8px;color:#555;font-weight:400;transform:scaleX(0.92);transform-origin:0 0;">15</div><div class="a t" style="left:960.7199999999999px;top:63.36px;font-size:8px;color:#555;font-weight:400;transform:scaleX(0.92);transform-origin:0 0;">16</div><div class="a t" style="left:43.5px;top:74.8px;font-size:8px;color:#555;transform:rotate(-90deg) translate(-100%,0);transform-origin:0 0;width:8px">0</div><div class="a t" style="left:43.5px;top:131.2px;font-size:8px;color:#555;transform:rotate(-90deg) translate(-100%,0);transform-origin:0 0;width:8px">1</div><div class="a t" style="left:43.5px;top:187.6px;font-size:8px;color:#555;transform:rotate(-90deg) translate(-100%,0);transform-origin:0 0;width:8px">2</div><div class="a t" style="left:43.5px;top:244.0px;font-size:8px;color:#555;transform:rotate(-90deg) translate(-100%,0);transform-origin:0 0;width:8px">3</div><div class="a t" style="left:43.5px;top:300.4px;font-size:8px;color:#555;transform:rotate(-90deg) translate(-100%,0);transform-origin:0 0;width:8px">4</div><div class="a t" style="left:43.5px;top:356.8px;font-size:8px;color:#555;transform:rotate(-90deg) translate(-100%,0);transform-origin:0 0;width:8px">5</div><div class="a t" style="left:43.5px;top:413.1px;font-size:8px;color:#555;transform:rotate(-90deg) translate(-100%,0);transform-origin:0 0;width:8px">6</div><div class="a t" style="left:43.5px;top:469.5px;font-size:8px;color:#555;transform:rotate(-90deg) translate(-100%,0);transform-origin:0 0;width:8px">7</div><div class="a t" style="left:43.5px;top:525.9px;font-size:8px;color:#555;transform:rotate(-90deg) translate(-100%,0);transform-origin:0 0;width:8px">8</div><div class="a t" style="left:43.5px;top:582.3px;font-size:8px;color:#555;transform:rotate(-90deg) translate(-100%,0);transform-origin:0 0;width:8px">9</div><div class="a" style="left:999.5px;top:62px;width:10px;height:556px;background:#f1f1f1"></div><div class="a" style="left:1000px;top:72px;width:8.5px;height:20px;background:#bfbfbf"></div><svg class="a" style="left:1001px;top:64px" width="8" height="6" viewBox="0 0 8 6"><path d="M4 1.5L6.5 4.5h-5z" fill="#777"/></svg><svg class="a" style="left:1001px;top:598px" width="8" height="6" viewBox="0 0 8 6"><path d="M4 4.5L6.5 1.5h-5z" fill="#555"/></svg><div class="a" style="left:41px;top:608.2px;width:958.5px;height:10px;background:#f1f1f1"></div><div class="a" style="left:52.5px;top:610px;width:62.5px;height:6.7px;background:#c1c1c1"></div><svg class="a" style="left:44px;top:609px" width="6" height="8" viewBox="0 0 6 8"><path d="M1.5 4L4.5 1.5v5z" fill="#555"/></svg><svg class="a" style="left:990px;top:609px" width="6" height="8" viewBox="0 0 6 8"><path d="M4.5 4L1.5 1.5v5z" fill="#555"/></svg><div class="a" style="left:999.5px;top:608.2px;width:10px;height:10px;background:#dcdcdc"></div>
<div class="a" style="left:0;top:0;width:1200px;height:30px;background:#3d4144"></div><div class="a" style="left:12px;top:10px;width:15px;height:1.6px;background:#e8e8e8"></div><div class="a" style="left:12px;top:14.2px;width:15px;height:1.6px;background:#e8e8e8"></div><div class="a" style="left:12px;top:18.4px;width:15px;height:1.6px;background:#e8e8e8"></div><div class="a t" style="left:42px;top:9.44px;font-size:11.6px;color:#f2f2f2;font-weight:400;transform:scaleX(0.86);transform-origin:0 0;-webkit-text-stroke:0.3px #f2f2f2;">Canvas</div><div class="a t" style="left:374px;top:9.21px;font-size:11.8px;color:#f2f2f2;font-weight:400;transform:scaleX(0.884);transform-origin:0 0;-webkit-text-stroke:0.3px #f2f2f2;">Mim-Jenkinson-Craft-with-Sarah-Christmas-Stickers*</div><svg class="a" style="left:920px;top:8px" width="15" height="15" viewBox="0 0 15 15"><path d="M1.5 11.5h12M3.2 11.2V7.5a4.3 4.3 0 0 1 8.6 0v3.7M5.8 13.3h3.4" stroke="#eee" stroke-width="1.2" fill="none"/></svg><div class="a" style="left:923.2px;top:2.5px;width:10px;height:10px;border-radius:50%;background:#e4541f"></div><div class="a t" style="left:925.0px;top:4.92px;font-size:5.8px;color:#fff;font-weight:700;transform:scaleX(0.9);transform-origin:0 0;">14</div><div class="a t" style="left:942px;top:9.39px;font-size:12px;color:#f2f2f2;font-weight:400;transform:scaleX(0.845);transform-origin:0 0;-webkit-text-stroke:0.3px #f2f2f2;">My Stuff</div><div class="a t" style="left:988px;top:9.39px;font-size:12px;color:#f2f2f2;font-weight:400;transform:scaleX(0.8);transform-origin:0 0;-webkit-text-stroke:0.3px #f2f2f2;">Save</div><div class="a" style="left:1026.5px;top:10.5px;width:1px;height:9px;background:#b0b0b0"></div><div class="a t" style="left:1043px;top:9.39px;font-size:12px;color:#f2f2f2;font-weight:400;transform:scaleX(0.82);transform-origin:0 0;-webkit-text-stroke:0.3px #f2f2f2;">Maker</div><svg class="a" style="left:1077px;top:10px" width="11" height="8" viewBox="0 0 11 8"><path d="M1 2l4.5 4.5L10 2" stroke="#eee" stroke-width="1.3" fill="none"/></svg><div class="a" style="left:1109px;top:4.5px;width:83.5px;height:20.5px;border-radius:10.5px;background:#0f7a58"></div><div class="a t" style="left:1138px;top:11.31px;font-size:7.6px;color:#8ad4b2;font-weight:700;transform:scaleX(0.92);transform-origin:0 0;">Make It</div><div class="a" style="left:41px;top:30px;width:971px;height:31.5px;background:#fff;border-bottom:1px solid #cfcfcf"></div><svg class="a" style="left:51px;top:42px" width="16" height="12" viewBox="0 0 16 12"><path d="M4.5 1.5L1.8 4.2l2.7 2.7M2 4.2h7a3.2 3.2 0 0 1 0 6.4H5" stroke="#333" stroke-width="1.3" fill="none"/></svg><svg class="a" style="left:75px;top:42px" width="16" height="12" viewBox="0 0 16 12"><path d="M11.5 1.5l2.7 2.7-2.7 2.7M14 4.2H7a3.2 3.2 0 0 0 0 6.4h4" stroke="#c9c9c9" stroke-width="1.3" fill="none"/></svg><div class="a" style="left:99px;top:35px;width:1px;height:21.5px;background:#e3e3e3"></div><div class="a" style="left:186.5px;top:35px;width:1px;height:21.5px;background:#e3e3e3"></div><div class="a" style="left:259px;top:35px;width:1px;height:21.5px;background:#e3e3e3"></div><div class="a" style="left:354.5px;top:35px;width:1px;height:21.5px;background:#e3e3e3"></div><div class="a" style="left:390.5px;top:35px;width:1px;height:21.5px;background:#e3e3e3"></div><div class="a" style="left:429.5px;top:35px;width:1px;height:21.5px;background:#e3e3e3"></div><div class="a" style="left:546px;top:35px;width:1px;height:21.5px;background:#e3e3e3"></div><div class="a" style="left:615.5px;top:35px;width:1px;height:21.5px;background:#e3e3e3"></div><div class="a t" style="left:109.3px;top:35.48px;font-size:7px;color:#c6c6c6;font-weight:400;transform:scaleX(0.93);transform-origin:0 0;">Operation</div><div class="a" style="left:109px;top:45px;width:53.5px;height:11px;border:1px solid #ececec;border-radius:1.5px"></div><div class="a t" style="left:112.5px;top:47.86px;font-size:6.3px;color:#cfcfcf;font-weight:400;transform:scaleX(0.92);transform-origin:0 0;">Print Then Cut ▾</div><svg class="a" style="left:166px;top:44.5px" width="12" height="12" viewBox="0 0 12 12"><path d="M2 11L11 2" stroke="#f2b9a0" stroke-width="1.2"/></svg><div class="a t" style="left:196.8px;top:35.48px;font-size:7px;color:#4a4a4a;font-weight:400;transform:scaleX(0.94);transform-origin:0 0;-webkit-text-stroke:0.15px #4a4a4a;">Select All</div><svg class="a" style="left:204px;top:44.5px" width="13" height="12" viewBox="0 0 13 12"><rect x="1.5" y="1.5" width="9.5" height="9.5" rx="4" fill="none" stroke="#333" stroke-width="1.2" stroke-dasharray="1.6 1.3"/><circle cx="5" cy="5" r=".8" fill="#333"/><circle cx="8" cy="5" r=".8" fill="#333"/><circle cx="5" cy="8" r=".8" fill="#333"/><path d="M7.5 7.2l2.5 2.5" stroke="#333" stroke-width="1"/></svg><div class="a t" style="left:236px;top:35.48px;font-size:7px;color:#4a4a4a;font-weight:400;transform:scaleX(0.93);transform-origin:0 0;-webkit-text-stroke:0.15px #4a4a4a;">Edit</div><svg class="a" style="left:233px;top:44px" width="18" height="13" viewBox="0 0 18 13"><path d="M2 11.5l1-3.3 6.5-6.5 2.3 2.3-6.5 6.5z" fill="none" stroke="#333" stroke-width="1.1"/><path d="M14 6.5l1.8 0-.9 1.3z" fill="#333" stroke="#333" stroke-width=".8"/></svg><div class="a t" style="left:270px;top:35.48px;font-size:7px;color:#c6c6c6;font-weight:400;transform:scaleX(0.93);transform-origin:0 0;">Align</div><svg class="a" style="left:268px;top:45px" width="20" height="11" viewBox="0 0 20 11"><path d="M2.5 1v9" stroke="#ccc" stroke-width="1"/><rect x="4" y="3.5" width="7" height="4" fill="none" stroke="#ccc" stroke-width="1"/><path d="M14 5h3.4l-1.7 2.3z" fill="#ccc"/></svg><div class="a t" style="left:295.5px;top:35.48px;font-size:7px;color:#4a4a4a;font-weight:400;transform:scaleX(0.94);transform-origin:0 0;-webkit-text-stroke:0.15px #4a4a4a;">Arrange</div><svg class="a" style="left:296px;top:44.5px" width="20" height="12" viewBox="0 0 20 12"><rect x="1" y="1" width="6" height="6" fill="none" stroke="#333" stroke-width="1.1"/><rect x="5" y="5" width="6" height="6" fill="#fff" stroke="#333" stroke-width="1.1"/><path d="M13.5 6h3.4l-1.7 2.3z" fill="#333"/></svg><div class="a t" style="left:330.7px;top:35.48px;font-size:7px;color:#4a4a4a;font-weight:400;transform:scaleX(0.97);transform-origin:0 0;-webkit-text-stroke:0.15px #4a4a4a;">Flip</div><svg class="a" style="left:329px;top:44.5px" width="18" height="12" viewBox="0 0 18 12"><path d="M6.5 1L1.5 11h5zM8.5 1l5 10h-5z" fill="none" stroke="#333" stroke-width="1.1"/><path d="M15 6h3.4l-1.7 2.3z" fill="#333"/></svg><div class="a t" style="left:363.7px;top:35.48px;font-size:7px;color:#4a4a4a;font-weight:400;transform:scaleX(0.97);transform-origin:0 0;-webkit-text-stroke:0.15px #4a4a4a;">Offset</div><svg class="a" style="left:364px;top:44px" width="18" height="13" viewBox="0 0 18 13"><path d="M6.5 2.5l3.3 2.3-1.2 3.9H4.4L3.2 4.8z" fill="none" stroke="#333" stroke-width="1.1"/><path d="M6.5 0.6l5 3.5-1.9 6H3.4l-1.9-6z" fill="none" stroke="#333" stroke-width=".9" stroke-dasharray="1.2 1"/><path d="M14 6h3.4l-1.7 2.3z" fill="#333"/></svg><div class="a t" style="left:402px;top:35.48px;font-size:7px;color:#c6c6c6;font-weight:400;transform:scaleX(0.96);transform-origin:0 0;">Warp</div><svg class="a" style="left:400px;top:45px" width="22" height="11" viewBox="0 0 22 11"><path d="M1.5 2v8M12.5 2v8M1.5 3.5q5.5 -2 11 0M1.5 8.5q5.5 2 11 0M5 3v6M9 3v6" fill="none" stroke="#ccc" stroke-width="1"/><path d="M16 5h3.4l-1.7 2.3z" fill="#ccc"/></svg><div class="a t" style="left:439.3px;top:35.48px;font-size:7px;color:#4a4a4a;font-weight:400;transform:scaleX(0.91);transform-origin:0 0;-webkit-text-stroke:0.15px #4a4a4a;">Size</div><svg class="a" style="left:484px;top:34px" width="20" height="12" viewBox="0 0 20 12"><path d="M1 8.5V6.5h4M19 8.5V6.5h-4" fill="none" stroke="#bbb" stroke-width=".8"/><rect x="6.5" y="5.5" width="7" height="5.5" rx="1" fill="none" stroke="#333" stroke-width="1.1"/><path d="M8 5.5V3.8a2 2 0 0 1 4 0v1.7" fill="none" stroke="#333" stroke-width="1.1"/><circle cx="10" cy="8.2" r=".8" fill="#333"/></svg><div class="a t" style="left:439.5px;top:47.54px;font-size:6.5px;color:#555;font-weight:400;transform:scaleX(0.95);transform-origin:0 0;">W</div><div class="a" style="left:448.3px;top:45px;width:35.2px;height:11.5px;border:1px solid #e6e6e6;border-radius:1.5px"></div><div class="a t" style="left:451.7px;top:47.06px;font-size:8px;color:#4a4a4a;font-weight:400;transform:scaleX(0.93);transform-origin:0 0;">6.247</div><svg class="a" style="left:477.0px;top:46.5px" width="5" height="9" viewBox="0 0 5 9"><path d="M2.5 0.8L4.5 3.6H0.5z M2.5 8.2L4.5 5.4H0.5z" fill="#333"/></svg><div class="a t" style="left:493.3px;top:47.54px;font-size:6.5px;color:#555;font-weight:400;transform:scaleX(0.95);transform-origin:0 0;">H</div><div class="a" style="left:500.6px;top:45px;width:35.7px;height:11.5px;border:1px solid #e6e6e6;border-radius:1.5px"></div><div class="a t" style="left:504.0px;top:47.06px;font-size:8px;color:#4a4a4a;font-weight:400;transform:scaleX(0.93);transform-origin:0 0;">8.006</div><svg class="a" style="left:529.8000000000001px;top:46.5px" width="5" height="9" viewBox="0 0 5 9"><path d="M2.5 0.8L4.5 3.6H0.5z M2.5 8.2L4.5 5.4H0.5z" fill="#333"/></svg><div class="a t" style="left:555.6px;top:35.48px;font-size:7px;color:#4a4a4a;font-weight:400;transform:scaleX(0.92);transform-origin:0 0;-webkit-text-stroke:0.15px #4a4a4a;">Rotate</div><svg class="a" style="left:555px;top:44.5px" width="13" height="12" viewBox="0 0 13 12"><path d="M2 5.2a4.5 4.5 0 0 1 8.2-2M11 6.8a4.5 4.5 0 0 1-8.2 2" fill="none" stroke="#333" stroke-width="1.2"/><path d="M10.5 0.5v3h-3M2.5 11.5v-3h3" fill="none" stroke="#333" stroke-width="1.1"/></svg><div class="a" style="left:571px;top:45px;width:35.4px;height:11.5px;border:1px solid #e6e6e6;border-radius:1.5px"></div><div class="a t" style="left:574.4px;top:47.06px;font-size:8px;color:#4a4a4a;font-weight:400;transform:scaleX(0.93);transform-origin:0 0;">0</div><svg class="a" style="left:599.9px;top:46.5px" width="5" height="9" viewBox="0 0 5 9"><path d="M2.5 0.8L4.5 3.6H0.5z M2.5 8.2L4.5 5.4H0.5z" fill="#333"/></svg><div class="a t" style="left:625.6px;top:35.48px;font-size:7px;color:#4a4a4a;font-weight:400;transform:scaleX(0.94);transform-origin:0 0;-webkit-text-stroke:0.15px #4a4a4a;">Position</div><div class="a t" style="left:625.6px;top:47.54px;font-size:6.5px;color:#555;font-weight:400;transform:scaleX(0.95);transform-origin:0 0;">X</div><div class="a" style="left:633px;top:45px;width:34.8px;height:11.5px;border:1px solid #e6e6e6;border-radius:1.5px"></div><div class="a t" style="left:636.4px;top:47.06px;font-size:8px;color:#4a4a4a;font-weight:400;transform:scaleX(0.93);transform-origin:0 0;">8.506</div><svg class="a" style="left:661.3px;top:46.5px" width="5" height="9" viewBox="0 0 5 9"><path d="M2.5 0.8L4.5 3.6H0.5z M2.5 8.2L4.5 5.4H0.5z" fill="#333"/></svg><div class="a t" style="left:675px;top:47.54px;font-size:6.5px;color:#555;font-weight:400;transform:scaleX(0.95);transform-origin:0 0;">Y</div><div class="a" style="left:681.5px;top:45px;width:35.8px;height:11.5px;border:1px solid #e6e6e6;border-radius:1.5px"></div><div class="a t" style="left:684.9px;top:47.06px;font-size:8px;color:#4a4a4a;font-weight:400;transform:scaleX(0.93);transform-origin:0 0;">0.822</div><svg class="a" style="left:710.8px;top:46.5px" width="5" height="9" viewBox="0 0 5 9"><path d="M2.5 0.8L4.5 3.6H0.5z M2.5 8.2L4.5 5.4H0.5z" fill="#333"/></svg><div class="a" style="left:0;top:30px;width:41px;height:588px;background:linear-gradient(#d6d6d6,#cdcdcd)"></div><svg class="a" style="left:13px;top:37.7px" width="14" height="14" viewBox="0 0 14 14"><circle cx="7" cy="7" r="5.3" fill="none" stroke="#333" stroke-width="1.2"/><path d="M7 4v6M4 7h6" stroke="#333" stroke-width="1.2"/></svg><div class="a t" style="left:-39.8px;width:120px;text-align:center;top:57.51px;font-size:6.7px;color:#454545;font-weight:400;transform:scaleX(0.97);">New</div><svg class="a" style="left:13px;top:81.8px" width="14" height="14" viewBox="0 0 14 14"><path d="M4.5 2.5L2 4v3h2v5.5h6V7h2V4L9.5 2.5Q7 4.5 4.5 2.5z" fill="none" stroke="#333" stroke-width="1.1"/><circle cx="6" cy="7" r=".5" fill="#333"/><circle cx="8" cy="7" r=".5" fill="#333"/></svg><div class="a t" style="left:-39.8px;width:120px;text-align:center;top:101.21px;font-size:6.7px;color:#454545;font-weight:400;transform:scaleX(0.97);">Templates</div><svg class="a" style="left:13px;top:125px" width="14" height="14" viewBox="0 0 14 14"><rect x="3" y="2" width="8" height="10.5" rx="1" fill="none" stroke="#333" stroke-width="1.1"/><circle cx="7" cy="6.5" r="1.8" fill="none" stroke="#333" stroke-width="1"/><path d="M5 10h4" stroke="#333"/></svg><div class="a t" style="left:-39.8px;width:120px;text-align:center;top:145.21px;font-size:6.7px;color:#454545;font-weight:400;transform:scaleX(0.97);">Projects</div><svg class="a" style="left:13px;top:169.4px" width="14" height="14" viewBox="0 0 14 14"><path d="M6 1.5L1.5 9h9z" fill="none" stroke="#333" stroke-width="1.1"/><circle cx="9" cy="9" r="3" fill="#d4d4d4" stroke="#333" stroke-width="1.1"/></svg><div class="a t" style="left:-39.8px;width:120px;text-align:center;top:189.61px;font-size:6.7px;color:#454545;font-weight:400;transform:scaleX(0.97);">Shapes</div><svg class="a" style="left:13px;top:212.5px" width="14" height="14" viewBox="0 0 14 14"><path d="M7 1.8a4 4 0 0 1 2.5 7.2V11h-5V9A4 4 0 0 1 7 1.8zM5.5 12.5h3" fill="none" stroke="#333" stroke-width="1.1"/><path d="M6 3v6M8 3v6" stroke="#333" stroke-width=".8"/></svg><div class="a t" style="left:-39.8px;width:120px;text-align:center;top:233.01px;font-size:6.7px;color:#454545;font-weight:400;transform:scaleX(0.97);">Images</div><svg class="a" style="left:13px;top:256.5px" width="14" height="14" viewBox="0 0 14 14"><path d="M2.5 2.5h9M7 2.5v9.5M2.5 2.5v2M11.5 2.5v2M5 12h4" fill="none" stroke="#333" stroke-width="1.3"/></svg><div class="a t" style="left:-39.8px;width:120px;text-align:center;top:277.01px;font-size:6.7px;color:#454545;font-weight:400;transform:scaleX(0.97);">Text</div><svg class="a" style="left:13px;top:300.5px" width="14" height="14" viewBox="0 0 14 14"><path d="M7 2a5 4.3 0 1 1-2.2 8.2L2.5 12l.6-2.8A5 4.3 0 0 1 7 2z" fill="none" stroke="#333" stroke-width="1.1"/><path d="M4.8 6h4.4M4.8 8h4.4" stroke="#333" stroke-width="1"/></svg><div class="a t" style="left:-39.8px;width:120px;text-align:center;top:321.01px;font-size:6.7px;color:#454545;font-weight:400;transform:scaleX(0.97);">Phrases</div><svg class="a" style="left:13px;top:341.5px" width="14" height="14" viewBox="0 0 14 14"><path d="M3 4v7h8V4" fill="none" stroke="#333" stroke-width="1"/><rect x="1.8" y="2.8" width="2.4" height="2.4" fill="#333"/><rect x="9.8" y="9.8" width="2.4" height="2.4" fill="#333"/><rect x="1.8" y="9.8" width="2.4" height="2.4" fill="#333"/><path d="M9 1v4M7 3h4" stroke="#333" stroke-width="1.2"/></svg><svg class="a" style="left:13px;top:388px" width="14" height="14" viewBox="0 0 14 14"><path d="M2.5 2.5h9M7 12V5M4 8l3-3 3 3" fill="none" stroke="#333" stroke-width="1.2"/></svg><div class="a t" style="left:-39.8px;width:120px;text-align:center;top:408.41px;font-size:6.7px;color:#454545;font-weight:400;transform:scaleX(0.97);">Upload</div><svg class="a" style="left:13px;top:434px" width="14" height="14" viewBox="0 0 14 14"><path d="M1.5 2.5h6.5M2.5 2.5v9M4.8 2.5v9M7 2.5v9" fill="none" stroke="#333" stroke-width="0.8"/><path d="M12.5 4.8a3 3 0 1 0 0 4.6V7.6H10.3" fill="none" stroke="#333" stroke-width="1.1"/></svg><div class="a t" style="left:-39.8px;width:120px;text-align:center;top:452.21px;font-size:6.7px;color:#454545;font-weight:400;transform:scaleX(0.97);">Monogram</div><div class="a t" style="left:-39.8px;width:120px;text-align:center;top:362.71px;font-size:6.7px;color:#454545;font-weight:400;transform:scaleX(0.97);">Editable</div><div class="a t" style="left:-39.8px;width:120px;text-align:center;top:372.21px;font-size:6.7px;color:#454545;font-weight:400;transform:scaleX(0.97);">Images</div>
<div class="a" style="left:1011.5px;top:30px;width:188.5px;height:588px;background:#fff;border-left:1px solid #e6e6e6"></div><div class="a t" style="left:1022.4px;top:41.11px;font-size:9.3px;color:#1a6850;font-weight:700;transform:scaleX(0.91);transform-origin:0 0;">Layers</div><div class="a t" style="left:1069.6px;top:41.11px;font-size:9.3px;color:#555;font-weight:400;transform:scaleX(0.99);transform-origin:0 0;">Color Sync</div><div class="a" style="left:1012px;top:58.3px;width:47px;height:2.2px;background:#1d6b56"></div><div class="a" style="left:1012px;top:60.4px;width:188px;height:1px;background:#ececec"></div><svg class="a" style="left:1022px;top:68px" width="14" height="14" viewBox="0 0 14 14"><rect x="2.5" y="2.5" width="9" height="9" fill="none" stroke="#d0d0d0" stroke-width="1" stroke-dasharray="2 5"/><circle cx="7" cy="7" r="2.5" fill="none" stroke="#d0d0d0"/></svg><svg class="a" style="left:1047px;top:68px" width="14" height="14" viewBox="0 0 14 14"><rect x="1.5" y="1.5" width="8" height="8" fill="none" stroke="#333" stroke-width="1.1"/><rect x="4" y="4" width="8.5" height="8.5" fill="#fff" stroke="#333" stroke-width="1.1"/><path d="M8.2 6v4.5M6 8.2h4.5" stroke="#333" stroke-width="1.1"/></svg><svg class="a" style="left:1073px;top:68px" width="14" height="14" viewBox="0 0 14 14"><path d="M2 3.5h10M5 3.5V2h4v1.5M3.3 3.5l.8 9h5.8l.8-9M5.8 5.5v5M8.2 5.5v5" fill="none" stroke="#333" stroke-width="1.1"/></svg><div class="a" style="left:1014.3px;top:126px;width:172.7px;height:399px;background:#e8f6f1"></div><div class="a" style="left:1014.3px;top:91px;width:172.7px;height:35px;background:#b3e4d6"></div><div class="a" style="left:1186px;top:91px;width:14px;height:434px;background:#f8f8f8"></div><div class="a" style="left:1190.5px;top:102.5px;width:8.5px;height:73px;background:#c2c2c2"></div><svg class="a" style="left:1190px;top:93px" width="9" height="6" viewBox="0 0 9 6"><path d="M4.5 1.2L7.2 4.5H1.8z" fill="#333"/></svg><svg class="a" style="left:1190px;top:519px" width="9" height="6" viewBox="0 0 9 6"><path d="M4.5 4.8L7.2 1.5H1.8z" fill="#333"/></svg><svg class="a" style="left:1021px;top:105px" width="8" height="6" viewBox="0 0 8 6"><path d="M1 1.5l3 3 3-3" fill="none" stroke="#333" stroke-width="1.2"/></svg><svg class="a" style="left:1035px;top:102px" width="14" height="11" viewBox="0 0 14 11"><path d="M8 2.2H4.2a3.3 3.3 0 0 0 0 6.6H10a2.6 2.6 0 0 0 0-5.2H4.8a1.6 1.6 0 0 0 0 3.2H10" fill="none" stroke="#333" stroke-width="1.1"/></svg><div class="a t" style="left:1055px;top:103.41px;font-size:9.3px;color:#34433e;font-weight:700;transform:scaleX(0.95);transform-origin:0 0;">Attach</div><svg class="a" style="left:1041px;top:140.5px" width="8" height="6" viewBox="0 0 8 6"><path d="M1 1.5l3 3 3-3" fill="none" stroke="#333" stroke-width="1.2"/></svg><svg class="a" style="left:1055px;top:135px" width="14" height="14" viewBox="0 0 14 14"><path d="M7 1.5v5M5 4.5l2 2 2-2M2 7l5 3 5-3M2 10l5 3 5-3" fill="none" stroke="#333" stroke-width="1.1"/></svg><div class="a t" style="left:1074.7px;top:132.72px;font-size:9.2px;color:#4b5753;font-weight:400;-webkit-text-stroke:0.15px #4b5753;">Flatten</div><div class="a t" style="left:1074.7px;top:145.32px;font-size:9.2px;color:#8c9c96;font-weight:400;">Print Then Cut</div><div class="a" style="left:1077px;top:173.4px;width:8px;height:10px;background:#fff;border:1px solid #cfcfcf"></div><div class="a t" style="left:1095px;top:174.72px;font-size:9.2px;color:#4b5753;font-weight:400;-webkit-text-stroke:0.15px #4b5753;">Print Then Cut</div><svg class="a" style="left:1041px;top:211px" width="8" height="6" viewBox="0 0 8 6"><path d="M1 1.5l3 3 3-3" fill="none" stroke="#333" stroke-width="1.2"/></svg><svg class="a" style="left:1055px;top:206.5px" width="14" height="14" viewBox="0 0 14 14"><path d="M1 3.8V1H3.8M10.2 1H13V3.8M13 10.2V13H10.2M3.8 13H1V10.2" fill="none" stroke="#333" stroke-width="1.1"/><circle cx="5.6" cy="5.6" r="2.4" fill="none" stroke="#333" stroke-width="0.9"/><rect x="6.3" y="6.3" width="4.2" height="4.2" rx="0.8" fill="none" stroke="#333" stroke-width="0.9"/></svg><div class="a t" style="left:1074.7px;top:209.12px;font-size:9.2px;color:#4b5753;font-weight:400;-webkit-text-stroke:0.15px #4b5753;">Group</div><div class="a t" style="left:1095px;top:238.12px;font-size:9.2px;color:#4b5753;font-weight:400;-webkit-text-stroke:0.15px #4b5753;">Square</div><div class="a t" style="left:1095px;top:250.52px;font-size:9.2px;color:#8c9c96;font-weight:400;">Print Then Cut</div><svg class="a" style="left:1075px;top:244.0px" width="15" height="9" viewBox="0 0 15 9"><rect width="15" height="9" fill="#fbeee4"/><circle cx="3" cy="3" r="2" fill="#e9a287"/><circle cx="9" cy="5" r="2" fill="#c9715a"/><circle cx="13" cy="2.5" r="1.6" fill="#f2c4a8"/><circle cx="6" cy="7" r="1.5" fill="#a9cbd4"/></svg><div class="a t" style="left:1095px;top:273.02px;font-size:9.2px;color:#4b5753;font-weight:400;-webkit-text-stroke:0.15px #4b5753;">Square</div><div class="a t" style="left:1095px;top:285.42px;font-size:9.2px;color:#8c9c96;font-weight:400;">Print Then Cut</div><div class="a" style="left:1075px;top:279.59999999999997px;width:14.5px;height:8px;background:repeating-conic-gradient(#f3b079 0 25%,#f9d2a8 0 50%) 0 0/3px 3px"></div><div class="a t" style="left:1095px;top:307.92px;font-size:9.2px;color:#4b5753;font-weight:400;-webkit-text-stroke:0.15px #4b5753;">Rectangle</div><div class="a t" style="left:1095px;top:320.32px;font-size:9.2px;color:#8c9c96;font-weight:400;">Print Then Cut</div><svg class="a" style="left:1075px;top:313.8px" width="15" height="9" viewBox="0 0 15 9"><rect width="15" height="9" fill="#fbeee4"/><circle cx="3" cy="3" r="2" fill="#e9a287"/><circle cx="9" cy="5" r="2" fill="#c9715a"/><circle cx="13" cy="2.5" r="1.6" fill="#f2c4a8"/><circle cx="6" cy="7" r="1.5" fill="#a9cbd4"/></svg><div class="a t" style="left:1095px;top:343.62px;font-size:9.2px;color:#4b5753;font-weight:400;-webkit-text-stroke:0.15px #4b5753;">Rectangle</div><div class="a t" style="left:1095px;top:356.02px;font-size:9.2px;color:#8c9c96;font-weight:400;">Print Then Cut</div><div class="a" style="left:1075px;top:350px;width:14.5px;height:8.5px;background:#35606a"></div><svg class="a" style="left:1041px;top:386.5px" width="8" height="6" viewBox="0 0 8 6"><path d="M1 1.5l3 3 3-3" fill="none" stroke="#333" stroke-width="1.2"/></svg><svg class="a" style="left:1055px;top:382px" width="14" height="14" viewBox="0 0 14 14"><path d="M1 3.8V1H3.8M10.2 1H13V3.8M13 10.2V13H10.2M3.8 13H1V10.2" fill="none" stroke="#333" stroke-width="1.1"/><circle cx="5.6" cy="5.6" r="2.4" fill="none" stroke="#333" stroke-width="0.9"/><rect x="6.3" y="6.3" width="4.2" height="4.2" rx="0.8" fill="none" stroke="#333" stroke-width="0.9"/></svg><div class="a t" style="left:1074.7px;top:384.72px;font-size:9.2px;color:#4b5753;font-weight:400;-webkit-text-stroke:0.15px #4b5753;">Group</div><div class="a t" style="left:1095px;top:413.22px;font-size:9.2px;color:#4b5753;font-weight:400;-webkit-text-stroke:0.15px #4b5753;">Square</div><div class="a t" style="left:1095px;top:425.62px;font-size:9.2px;color:#8c9c96;font-weight:400;">Print Then Cut</div><div class="a" style="left:1075px;top:419.6px;width:14.5px;height:8.5px;background:#6b8a67"></div><div class="a t" style="left:1095px;top:448.62px;font-size:9.2px;color:#4b5753;font-weight:400;-webkit-text-stroke:0.15px #4b5753;">Square</div><div class="a t" style="left:1095px;top:461.02px;font-size:9.2px;color:#8c9c96;font-weight:400;">Print Then Cut</div><div class="a" style="left:1075px;top:455px;width:14.5px;height:8.5px;background:#1b555c"></div><div class="a t" style="left:1095px;top:483.62px;font-size:9.2px;color:#4b5753;font-weight:400;-webkit-text-stroke:0.15px #4b5753;">Rectangle</div><div class="a t" style="left:1095px;top:496.02px;font-size:9.2px;color:#8c9c96;font-weight:400;">Print Then Cut</div><div class="a" style="left:1075px;top:490px;width:14.5px;height:8.5px;background:#d9eff0"></div><div class="a t" style="left:1095px;top:519.12px;font-size:9.2px;color:#4b5753;font-weight:400;-webkit-text-stroke:0.15px #4b5753;">Rectangle</div><div class="a t" style="left:1095px;top:531.52px;font-size:9.2px;color:#8c9c96;font-weight:400;">Print Then Cut</div><div class="a" style="left:1012px;top:525px;width:188px;height:93px;background:#fff"></div><div class="a" style="left:1012px;top:525px;width:188px;height:31px;background:#f4f4f4"></div><div class="a" style="left:1018px;top:529px;width:33.5px;height:22.5px;background:#fff;border:1px solid #9a9a9a;border-radius:1.5px"></div><div class="a t" style="left:1058px;top:537.56px;font-size:6.3px;color:#444;font-weight:400;transform:scaleX(0.95);transform-origin:0 0;">Blank Ca</div><svg class="a" style="left:1022px;top:558px" width="20" height="14" viewBox="0 0 20 14"><rect x="2" y="2" width="6.5" height="6.5" rx="2" fill="none" stroke="#ccc" stroke-width="1.1"/><rect x="5.5" y="5.5" width="6.5" height="6.5" fill="none" stroke="#ccc" stroke-width="1.1"/></svg><div class="a t" style="left:969px;width:120px;text-align:center;top:575.79px;font-size:6.0px;color:#cfcfcf;font-weight:400;transform:scaleX(0.97);">Slice</div><svg class="a" style="left:1053px;top:558px" width="20" height="14" viewBox="0 0 20 14"><rect x="1.5" y="1.5" width="7" height="7" rx="1.5" fill="none" stroke="#ccc" stroke-width="1.1"/><circle cx="8" cy="8" r="4" fill="#fff" stroke="#ccc" stroke-width="1.1"/><path d="M14.5 5.5h3l-1.5 1.8z" fill="#ccc"/></svg><div class="a t" style="left:1000px;width:120px;text-align:center;top:575.79px;font-size:6.0px;color:#cfcfcf;font-weight:400;transform:scaleX(0.97);">Combine</div><svg class="a" style="left:1087px;top:558px" width="20" height="14" viewBox="0 0 20 14"><path d="M2 6.5a3.2 3.2 0 0 1 3.2-3.2H10a3 3 0 0 1 0 6H5.2A3.2 3.2 0 0 1 2 6.5z" fill="none" stroke="#333" stroke-width="1.2"/><path d="M2 1.5l10 10" stroke="#333" stroke-width="1.3"/></svg><div class="a t" style="left:1034px;width:120px;text-align:center;top:575.79px;font-size:6.0px;color:#444;font-weight:400;transform:scaleX(0.97);">Detach</div><svg class="a" style="left:1117px;top:558px" width="20" height="14" viewBox="0 0 20 14"><path d="M7 1v5M5 4l2 2 2-2M2 6.5l5 3 5-3M2 9.5l5 3 5-3" fill="none" stroke="#333" stroke-width="1.2"/></svg><div class="a t" style="left:1064px;width:120px;text-align:center;top:575.79px;font-size:6.0px;color:#444;font-weight:400;transform:scaleX(0.97);">Flatten</div><svg class="a" style="left:1149px;top:558px" width="20" height="14" viewBox="0 0 20 14"><circle cx="7" cy="7" r="5.3" fill="none" stroke="#ccc" stroke-width="1.1" stroke-dasharray="2 1.5"/></svg><div class="a t" style="left:1096px;width:120px;text-align:center;top:575.79px;font-size:6.0px;color:#cfcfcf;font-weight:400;transform:scaleX(0.97);">Contour</div><div class="a" style="left:1012px;top:585.8px;width:188px;height:32.2px;background:#0c45c0"></div><svg class="a" style="left:1021px;top:594px" width="33" height="20" viewBox="0 0 33 20"><path d="M2 1.5h19.5l-3.5 12.5H7l-4.5 4V14H2z" fill="#1aa37a"/><text x="9" y="11.5" font-family="Liberation Sans" font-size="8.5" fill="#fff">a</text></svg><div class="a t" style="left:1047.3px;top:596.94px;font-size:9.9px;color:#f2f4ff;font-weight:400;transform:scaleX(0.94);transform-origin:0 0;-webkit-text-stroke:0.3px #f2f4ff;">Try Cricut Access for free</div>
<div class="a" style="left:675px;top:98.7px;width:73px;height:13.5px;border-radius:2.5px;background:#1f1f1f"></div><div class="a t" style="left:682.0px;top:101.82px;font-size:8.3px;color:#ececec;font-weight:400;transform:scaleX(0.97);transform-origin:0 0;">6.25</div><div class="a t" style="left:701.3px;top:101.82px;font-size:8.3px;color:#ececec;font-weight:400;transform:scaleX(0.97);transform-origin:0 0;">in</div><div class="a t" style="left:709.0px;top:101.82px;font-size:8.3px;color:#ececec;font-weight:400;transform:scaleX(0.97);transform-origin:0 0;">x</div><div class="a t" style="left:715.5px;top:101.82px;font-size:8.3px;color:#ececec;font-weight:400;transform:scaleX(0.97);transform-origin:0 0;">8.01</div><div class="a t" style="left:733.5px;top:101.82px;font-size:8.3px;color:#ececec;font-weight:400;transform:scaleX(0.97);transform-origin:0 0;">in</div><div class="a" style="left:60px;top:582.5px;width:74px;height:18px;border-radius:4px;background:rgba(255,255,255,0.55)"></div><svg class="a" style="left:64px;top:582px" width="70" height="20" viewBox="0 0 70 20"><circle cx="9" cy="9.7" r="5.5" fill="none" stroke="#bdbdbd" stroke-width="1.1"/><path d="M6.5 9.7h5" stroke="#bdbdbd" stroke-width="1.1"/><circle cx="60" cy="9.7" r="5.5" fill="none" stroke="#bdbdbd" stroke-width="1.1"/><path d="M57.5 9.7h5M60 7.2v5" stroke="#bdbdbd" stroke-width="1.1"/></svg><div class="a t" style="left:83.5px;top:586.88px;font-size:11.2px;color:#b9b9b9;font-weight:400;transform:scaleX(1.04);transform-origin:0 0;">125%</div><svg class="a" style="left:0;top:0" width="1200" height="618">
      <circle cx="19" cy="576" r="14.5" fill="#fbe2e3"/>
      <circle cx="49.5" cy="556" r="16.5" fill="#fbe2e3"/>
      <path d="M6.5 584 L21.8 599.4 L69.4 609.5 L72 590 L66 556 L34.5 566.5 L10 568 Z" fill="#fbe2e3"/>
      <path d="M50.1 553.5 L67 553 C70 565 72.5 590 69.4 609.5 C52 609 32 606 21.8 599.4 C30 594 38 587 43 581 C48 575 53 570 55 564 C56 560 53 556 50.1 553.5Z" fill="#e3875c"/>
      <path d="M32 591.4 L72.2 573.3 C72.6 585 71.5 598 69.4 609.5 C52 609 32 606 21.8 599.4Z" fill="#e57e4f"/>
      <path d="M21.8 599.4 L72 584.6 C71.8 593 70.8 601 69.4 609.5 C52 609 32 606 21.8 599.4Z" fill="#e0683c"/>
      <path d="M50.1 553.5 L56 552.8 L58 557 L54.5 561Z" fill="#eea09c"/>
      <path d="M21.8 599.4 L26 594 L30 596Z" fill="#f1a9a6"/>
    </svg><div class="a" style="left:1109px;top:3.5px;width:39px;height:39px;border-radius:50%;background:radial-gradient(circle closest-side,rgba(226,230,110,0.62) 88%,rgba(226,230,110,0) 100%)"></div><svg class="a" style="left:1122px;top:22px" width="16" height="17" viewBox="0 0 16 17"><path d="M4.6 10.5V2.6a1.3 1.3 0 0 1 2.6 0v5.3V6.6a1.2 1.2 0 0 1 2.4 0v1.4a1.2 1.2 0 0 1 2.4 0v0.9a1.1 1.1 0 0 1 2.2 0v3.2c0 1.9-1.3 3.3-3.2 3.3H7.6L2.6 11.8a1.2 1.2 0 0 1 1.6-1.7z" fill="#fff" stroke="#2a2a2a" stroke-width="1"/></svg><div class="a" style="left:1088px;top:463px;width:10px;height:73px;background:#c8381c"></div><svg class="a" style="left:1077px;top:534px" width="32" height="22" viewBox="0 0 32 22"><path d="M0.5 0.5H31.5L16 21z" fill="#c8381c"/></svg>
</body></html>
